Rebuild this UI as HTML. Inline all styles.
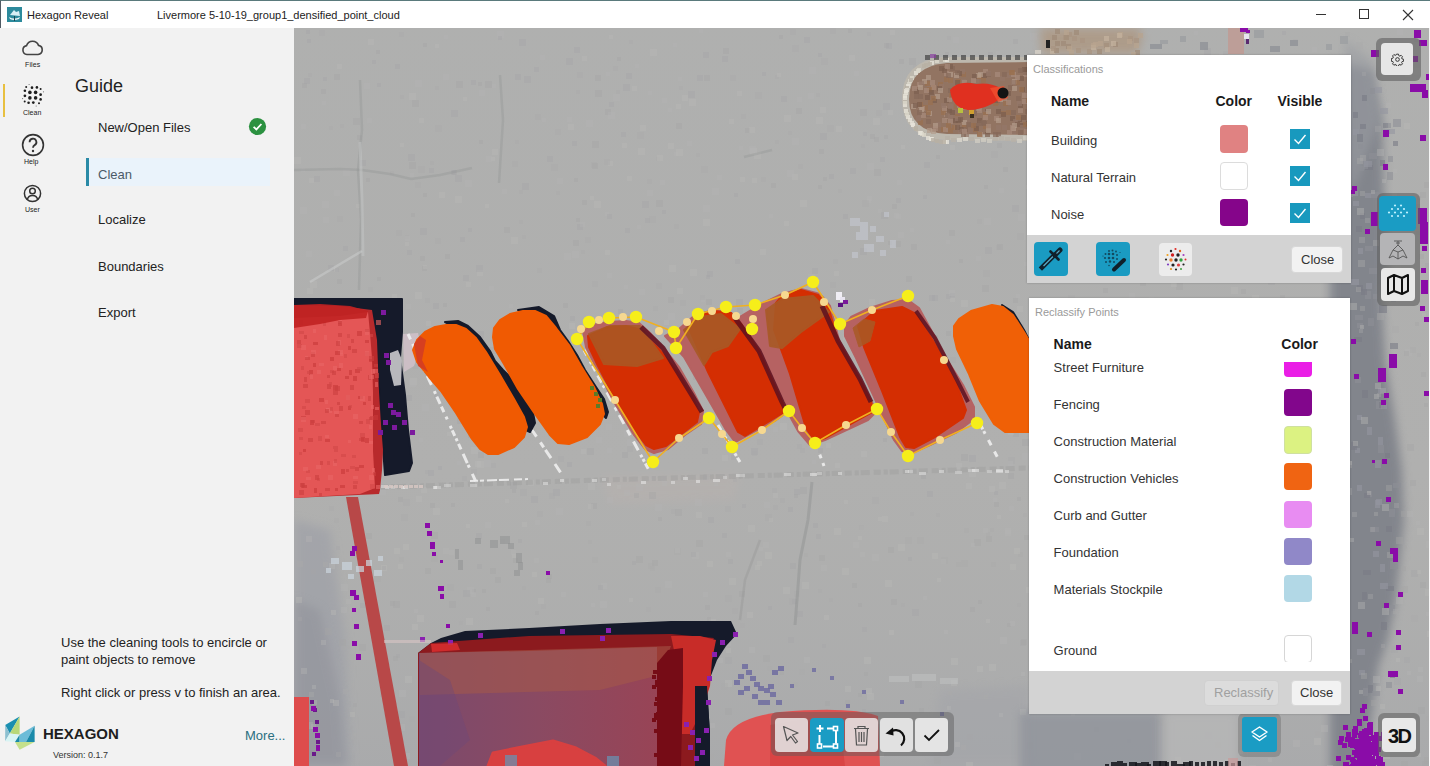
<!DOCTYPE html>
<html><head><meta charset="utf-8">
<style>
*{box-sizing:border-box;margin:0;padding:0}
html,body{width:1430px;height:766px;overflow:hidden;background:#f2f2f2;font-family:"Liberation Sans",sans-serif;color:#222}
.abs{position:absolute}
#title{left:0;top:0;width:1430px;height:28px;background:#fff;border-top:1px solid #5a7a7c;border-left:1px solid #4f5a64}
#side{left:0;top:28px;width:294px;height:738px;background:#f2f2f2}
#map{left:294px;top:28px;width:1135px;height:738px;overflow:hidden;background:#a8aaa9}
#rstrip{left:1429px;top:28px;width:1px;height:738px;background:#f4f4f4}
.t{position:absolute;white-space:nowrap;line-height:1}
.panel{position:absolute;background:#fff;box-shadow:0 0 2px rgba(0,0,0,.25)}
.btn{position:absolute;border-radius:4px}
</style></head><body>
<div id="title" class="abs">
  <svg class="abs" style="left:6px;top:6px" width="15" height="15" viewBox="0 0 15 15">
    <rect x="0" y="0" width="15" height="15" fill="#2c8a9c"/>
    <path d="M3 8 L7 3 L9 5 L12 4 L13 9 Z" fill="#d8eef4"/>
    <path d="M2 10 Q7 13 13 10 L12 12 Q7 14 3 12 Z" fill="#f2f8fa"/>
    <rect x="7" y="9" width="1" height="5" fill="#1d4650"/>
  </svg>
  <div class="t" style="left:26px;top:9px;font-size:11px;color:#222">Hexagon Reveal</div>
  <div class="t" style="left:156px;top:9px;font-size:11px;color:#222">Livermore 5-10-19_group1_densified_point_cloud</div>
  <div class="abs" style="left:1315px;top:13px;width:10px;height:1px;background:#333"></div>
  <div class="abs" style="left:1358px;top:8px;width:10px;height:10px;border:1px solid #333"></div>
  <svg class="abs" style="left:1401px;top:8px" width="12" height="12" viewBox="0 0 12 12"><path d="M1 1L11 11M11 1L1 11" stroke="#333" stroke-width="1.1"/></svg>
</div>

<div id="side" class="abs">
  <!-- rail icons (coords relative to side: y-28) -->
  <svg class="abs" style="left:21px;top:11px" width="23" height="17" viewBox="0 0 23 17">
    <path d="M6 15.5 H17 A4.6 4.6 0 0 0 17.5 6.4 A6.3 6.3 0 0 0 5.6 6.6 A4.5 4.5 0 0 0 6 15.5 Z" fill="none" stroke="#444" stroke-width="1.6"/>
  </svg>
  <div class="t" style="left:25px;top:33px;font-size:7px;color:#222;letter-spacing:0.1px">Files</div>
  <div class="abs" style="left:3px;top:56px;width:2px;height:33px;background:#e8c040"></div>
  <svg class="abs" style="left:22px;top:55px" width="24" height="25" viewBox="0 0 24 25">
    <g fill="#1e1e1e">
      <circle cx="7.9" cy="9.4" r="1.8"/><circle cx="13.6" cy="9.4" r="1.8"/><circle cx="7.9" cy="14.9" r="1.8"/><circle cx="13.6" cy="14.9" r="1.8"/>
      <circle cx="10" cy="4.7" r="1.35"/><circle cx="14.9" cy="4.4" r="1.3"/><circle cx="2.9" cy="7.8" r="1.3"/><circle cx="2.9" cy="12.8" r="1.35"/>
      <circle cx="18.6" cy="11.7" r="1.35"/><circle cx="18.6" cy="16.4" r="1.3"/><circle cx="6.6" cy="19.8" r="1.3"/><circle cx="11.3" cy="19.6" r="1.35"/>
      <circle cx="4.2" cy="4.1" r="1"/><circle cx="18.6" cy="6" r="1"/><circle cx="2.7" cy="18.5" r="1"/><circle cx="17" cy="20.3" r="1"/>
      <circle cx="7.1" cy="1.5" r="0.6" opacity=".6"/><circle cx="21.5" cy="8.8" r="0.6" opacity=".6"/><circle cx="0.6" cy="15.6" r="0.6" opacity=".6"/><circle cx="14.2" cy="23" r="0.6" opacity=".6"/>
    </g>
  </svg>
  <div class="t" style="left:23px;top:81px;font-size:7px;color:#222">Clean</div>
  <svg class="abs" style="left:20px;top:104px" width="26" height="26" viewBox="0 0 26 26">
    <circle cx="13" cy="13" r="10.4" fill="none" stroke="#333" stroke-width="1.6"/>
    <path d="M9.6 10.2 A3.4 3.4 0 1 1 14.6 13.1 Q13 14 13 15.8" fill="none" stroke="#333" stroke-width="1.8"/>
    <circle cx="13" cy="19" r="1.2" fill="#333"/>
  </svg>
  <div class="t" style="left:24px;top:130px;font-size:7px;color:#222">Help</div>
  <svg class="abs" style="left:22px;top:155px" width="21" height="21" viewBox="0 0 21 21">
    <circle cx="10.5" cy="10.5" r="8.1" fill="none" stroke="#333" stroke-width="1.5"/>
    <circle cx="10.5" cy="8" r="2.8" fill="none" stroke="#333" stroke-width="1.5"/>
    <path d="M5.2 17 Q6 12.5 10.5 12.5 Q15 12.5 15.8 17" fill="none" stroke="#333" stroke-width="1.5"/>
  </svg>
  <div class="t" style="left:25px;top:178px;font-size:7px;color:#222">User</div>

  <div class="t" style="left:75px;top:49px;font-size:18px;color:#222">Guide</div>
  <div class="t" style="left:98px;top:93px;font-size:13px;color:#222">New/Open Files</div>
  <svg class="abs" style="left:248px;top:89px" width="19" height="19" viewBox="0 0 19 19">
    <circle cx="9.5" cy="9.5" r="8.6" fill="#2b9140"/>
    <path d="M5.6 9.8 L8.4 12.4 L13.4 7" fill="none" stroke="#fff" stroke-width="1.8"/>
  </svg>
  <div class="abs" style="left:89px;top:130px;width:181px;height:28px;background:#eaf3fb"></div>
  <div class="abs" style="left:86px;top:130px;width:3px;height:28px;background:#2a8aa6"></div>
  <div class="t" style="left:98px;top:139.5px;font-size:13px;color:#4a5a68">Clean</div>
  <div class="t" style="left:98px;top:185.4px;font-size:13px;color:#222">Localize</div>
  <div class="t" style="left:98px;top:231.6px;font-size:13px;color:#222">Boundaries</div>
  <div class="t" style="left:98px;top:277.7px;font-size:13px;color:#222">Export</div>

  <div class="t" style="left:61px;top:606px;font-size:13px;line-height:17px;color:#222">Use the cleaning tools to encircle or<br>paint objects to remove</div>
  <div class="t" style="left:61px;top:658px;font-size:13px;color:#222">Right click or press v to finish an area.</div>

  <svg class="abs" style="left:5px;top:688px" width="31" height="35" viewBox="0 0 31 35">
    <path d="M0.2 9 L14.6 0.5 L4.8 17.5 Z" fill="#1a8fb0"/>
    <path d="M0.2 9 L4.8 17.5 L0.2 25.3 Z" fill="#8cc0d0"/>
    <path d="M14.6 0.5 L14.6 18.8 L4.8 17.5 Z" fill="#b8d878"/>
    <path d="M0.2 25.3 L4.8 17.5 L14.6 18.8 L10 26 Z" fill="#d8f4f4"/>
    <path d="M10 26 L14.6 18.8 L14.6 26 Z" fill="#1a8aa8"/>
    <path d="M14.6 18.8 L29.6 9.7 L21 26 L14.6 26 Z" fill="#6cbcd8"/>
    <path d="M29.6 9.7 L29.6 26 L21 26 Z" fill="#1a8aaa"/>
    <path d="M10 26 L29.6 26 L14.6 33.8 Z" fill="#c4e08c"/>
  </svg>
  <div class="t" style="left:43px;top:698px;font-size:15px;font-weight:bold;color:#1e1e1e">HEXAGON</div>
  <div class="t" style="left:245px;top:700.5px;font-size:13px;color:#2a6f80">More...</div>
  <div class="t" style="left:53px;top:723px;font-size:9px;color:#333">Version: 0.1.7</div>
</div>

<div id="map" class="abs">
<svg width="1135" height="738" viewBox="294 28 1135 738">
<!--MAP-->
<defs><linearGradient id="bgv" x1="0" y1="0" x2="0" y2="1">
<stop offset="0" stop-color="#aeb0af" stop-opacity=".3"/><stop offset=".6" stop-color="#a7a9a8" stop-opacity="0"/><stop offset="1" stop-color="#9fa1a6" stop-opacity=".4"/></linearGradient>
<filter id="soft" x="-20%" y="-20%" width="140%" height="140%"><feGaussianBlur stdDeviation="5"/></filter>
<linearGradient id="bldg" x1="0" y1="0" x2="1" y2="0"><stop offset="0" stop-color="#7c4a6c"/><stop offset=".5" stop-color="#8a4a62"/><stop offset="1" stop-color="#984456"/></linearGradient></defs>
<rect x="294" y="28" width="1135" height="738" fill="#b0b0af" />
<rect x="294" y="28" width="1135" height="738" fill="url(#bgv)" />
<polygon points="1330.0,60.0 1372.0,70.0 1382.0,120.0 1384.0,200.0 1386.0,260.0 1382.0,300.0 1385.0,360.0 1395.0,420.0 1402.0,470.0 1404.0,520.0 1400.0,560.0 1396.0,600.0 1388.0,639.0 1378.0,667.0 1373.0,706.0 1362.0,780.0 1330.0,780.0" fill="#7e8189" opacity=".9" filter="url(#soft)"/>
<polygon points="1345.0,40.0 1372.0,60.0 1380.0,120.0 1350.0,200.0" fill="#9a9ca2" opacity=".6" filter="url(#soft)"/>
<rect x="1365" y="165" width="8" height="5" fill="#7a7c86" opacity=".6"/>
<rect x="1387" y="129" width="8" height="5" fill="#9496a0" opacity=".6"/>
<rect x="1360" y="124" width="6" height="5" fill="#7a7c86" opacity=".6"/>
<rect x="1354" y="337" width="8" height="5" fill="#7a7c86" opacity=".6"/>
<rect x="1378" y="437" width="5" height="8" fill="#9496a0" opacity=".6"/>
<rect x="1368" y="685" width="5" height="8" fill="#7a7c86" opacity=".6"/>
<rect x="1363" y="161" width="5" height="8" fill="#8e9096" opacity=".6"/>
<rect x="1375" y="500" width="5" height="8" fill="#9496a0" opacity=".6"/>
<rect x="1379" y="305" width="8" height="8" fill="#7a7c86" opacity=".6"/>
<rect x="1375" y="460" width="6" height="8" fill="#9496a0" opacity=".6"/>
<rect x="1369" y="268" width="8" height="6" fill="#8e9096" opacity=".6"/>
<rect x="1363" y="570" width="8" height="5" fill="#7a7c86" opacity=".6"/>
<rect x="1376" y="401" width="6" height="8" fill="#8e9096" opacity=".6"/>
<rect x="1363" y="688" width="5" height="8" fill="#8e9096" opacity=".6"/>
<rect x="1357" y="285" width="6" height="6" fill="#7a7c86" opacity=".6"/>
<rect x="1393" y="119" width="8" height="8" fill="#8e9096" opacity=".6"/>
<rect x="1365" y="291" width="6" height="8" fill="#8e9096" opacity=".6"/>
<rect x="1353" y="129" width="6" height="6" fill="#9496a0" opacity=".6"/>
<rect x="1380" y="108" width="8" height="6" fill="#9496a0" opacity=".6"/>
<rect x="1376" y="499" width="6" height="6" fill="#9496a0" opacity=".6"/>
<rect x="1367" y="491" width="5" height="6" fill="#8e9096" opacity=".6"/>
<rect x="1358" y="144" width="5" height="5" fill="#8e9096" opacity=".6"/>
<rect x="1356" y="226" width="6" height="6" fill="#7a7c86" opacity=".6"/>
<rect x="1357" y="323" width="6" height="5" fill="#8e9096" opacity=".6"/>
<rect x="1389" y="245" width="6" height="6" fill="#9496a0" opacity=".6"/>
<rect x="1390" y="673" width="5" height="5" fill="#7a7c86" opacity=".6"/>
<rect x="1357" y="485" width="5" height="6" fill="#9496a0" opacity=".6"/>
<rect x="1358" y="248" width="5" height="6" fill="#9496a0" opacity=".6"/>
<rect x="1367" y="427" width="5" height="8" fill="#9496a0" opacity=".6"/>
<rect x="1393" y="483" width="8" height="5" fill="#8e9096" opacity=".6"/>
<rect x="1390" y="561" width="8" height="8" fill="#8e9096" opacity=".6"/>
<rect x="1368" y="318" width="6" height="8" fill="#8e9096" opacity=".6"/>
<rect x="1353" y="112" width="5" height="6" fill="#7a7c86" opacity=".6"/>
<rect x="1355" y="448" width="5" height="5" fill="#9496a0" opacity=".6"/>
<rect x="1357" y="134" width="6" height="8" fill="#7a7c86" opacity=".6"/>
<rect x="1353" y="201" width="6" height="5" fill="#9496a0" opacity=".6"/>
<rect x="1361" y="289" width="6" height="6" fill="#7a7c86" opacity=".6"/>
<rect x="1355" y="377" width="6" height="6" fill="#8e9096" opacity=".6"/>
<rect x="1364" y="161" width="8" height="6" fill="#9496a0" opacity=".6"/>
<rect x="1362" y="592" width="5" height="8" fill="#7a7c86" opacity=".6"/>
<rect x="1359" y="670" width="6" height="5" fill="#9496a0" opacity=".6"/>
<rect x="1374" y="87" width="8" height="6" fill="#9496a0" opacity=".6"/>
<rect x="1389" y="509" width="6" height="8" fill="#8e9096" opacity=".6"/>
<rect x="1391" y="294" width="5" height="8" fill="#9496a0" opacity=".6"/>
<rect x="1385" y="278" width="5" height="8" fill="#7a7c86" opacity=".6"/>
<rect x="1386" y="586" width="8" height="5" fill="#7a7c86" opacity=".6"/>
<rect x="1373" y="294" width="5" height="5" fill="#8e9096" opacity=".6"/>
<rect x="1371" y="192" width="8" height="6" fill="#8e9096" opacity=".6"/>
<rect x="1386" y="526" width="6" height="6" fill="#7a7c86" opacity=".6"/>
<rect x="1360" y="213" width="5" height="6" fill="#7a7c86" opacity=".6"/>
<rect x="1372" y="691" width="8" height="5" fill="#8e9096" opacity=".6"/>
<rect x="1391" y="287" width="8" height="5" fill="#9496a0" opacity=".6"/>
<rect x="1355" y="315" width="8" height="5" fill="#8e9096" opacity=".6"/>
<rect x="1390" y="343" width="8" height="6" fill="#7a7c86" opacity=".6"/>
<rect x="1386" y="682" width="6" height="6" fill="#8e9096" opacity=".6"/>
<rect x="1383" y="123" width="5" height="5" fill="#7a7c86" opacity=".6"/>
<rect x="1351" y="442" width="6" height="8" fill="#7a7c86" opacity=".6"/>
<rect x="1378" y="445" width="6" height="8" fill="#8e9096" opacity=".6"/>
<rect x="1357" y="415" width="5" height="5" fill="#9496a0" opacity=".6"/>
<rect x="1379" y="402" width="5" height="6" fill="#7a7c86" opacity=".6"/>
<rect x="1387" y="203" width="6" height="5" fill="#8e9096" opacity=".6"/>
<rect x="1373" y="551" width="6" height="6" fill="#9496a0" opacity=".6"/>
<rect x="1369" y="153" width="8" height="6" fill="#8e9096" opacity=".6"/>
<rect x="1380" y="583" width="8" height="6" fill="#9496a0" opacity=".6"/>
<rect x="1356" y="166" width="8" height="5" fill="#8e9096" opacity=".6"/>
<rect x="1385" y="453" width="5" height="5" fill="#7a7c86" opacity=".6"/>
<rect x="1371" y="527" width="8" height="5" fill="#8e9096" opacity=".6"/>
<rect x="1381" y="404" width="6" height="5" fill="#9496a0" opacity=".6"/>
<rect x="1353" y="191" width="5" height="5" fill="#9496a0" opacity=".6"/>
<rect x="1370" y="88" width="5" height="6" fill="#8e9096" opacity=".6"/>
<rect x="1378" y="388" width="8" height="5" fill="#9496a0" opacity=".6"/>
<rect x="1362" y="390" width="6" height="8" fill="#7a7c86" opacity=".6"/>
<rect x="1381" y="622" width="6" height="8" fill="#7a7c86" opacity=".6"/>
<rect x="1388" y="156" width="5" height="6" fill="#8e9096" opacity=".6"/>
<rect x="1364" y="493" width="6" height="5" fill="#7a7c86" opacity=".6"/>
<rect x="1380" y="564" width="5" height="8" fill="#9496a0" opacity=".6"/>
<rect x="1380" y="160" width="5" height="6" fill="#7a7c86" opacity=".6"/>
<rect x="1384" y="129" width="6" height="5" fill="#9496a0" opacity=".6"/>
<rect x="1387" y="172" width="6" height="8" fill="#8e9096" opacity=".6"/>
<rect x="1365" y="193" width="6" height="5" fill="#9496a0" opacity=".6"/>
<rect x="1366" y="283" width="6" height="6" fill="#9496a0" opacity=".6"/>
<rect x="1351" y="279" width="8" height="6" fill="#9496a0" opacity=".6"/>
<rect x="1393" y="141" width="5" height="5" fill="#7a7c86" opacity=".6"/>
<rect x="1362" y="95" width="5" height="6" fill="#7a7c86" opacity=".6"/>
<rect x="1387" y="605" width="8" height="6" fill="#8e9096" opacity=".6"/>
<rect x="1357" y="649" width="8" height="6" fill="#9496a0" opacity=".6"/>
<rect x="1365" y="246" width="8" height="5" fill="#8e9096" opacity=".6"/>
<rect x="1390" y="239" width="5" height="8" fill="#7a7c86" opacity=".6"/>
<rect x="1386" y="123" width="5" height="5" fill="#8e9096" opacity=".6"/>
<rect x="1389" y="356" width="6" height="8" fill="#8e9096" opacity=".6"/>
<polygon points="940.0,690.0 1030.0,685.0 1030.0,766.0 930.0,766.0" fill="#a0a2a8" opacity="0.4" filter="url(#soft)"/>
<polygon points="294.0,520.0 330.0,530.0 345.0,640.0 350.0,766.0 294.0,766.0" fill="#9a9ca6" opacity="0.55" filter="url(#soft)"/>
<polygon points="294.0,600.0 320.0,610.0 340.0,700.0 345.0,766.0 294.0,766.0" fill="#8e9098" opacity="0.5" filter="url(#soft)"/>
<polygon points="600.0,476.0 740.0,474.0 735.0,500.0 610.0,504.0" fill="#bcb2ae" opacity=".35" filter="url(#soft)"/>
<rect x="1346" y="226" width="4" height="4" fill="#b8b8b6" opacity="0.4"/>
<rect x="892" y="204" width="5" height="5" fill="#a6a6a6" opacity="0.4"/>
<rect x="591" y="162" width="6" height="6" fill="#aaaaa9" opacity="0.4"/>
<rect x="897" y="180" width="5" height="5" fill="#b4b4b3" opacity="0.4"/>
<rect x="601" y="621" width="4" height="4" fill="#aaaaa9" opacity="0.4"/>
<rect x="311" y="569" width="5" height="5" fill="#a4a5a7" opacity="0.4"/>
<rect x="878" y="209" width="4" height="4" fill="#b4b4b3" opacity="0.4"/>
<rect x="1041" y="508" width="7" height="7" fill="#b4b4b3" opacity="0.4"/>
<rect x="1395" y="255" width="5" height="5" fill="#b8b8b6" opacity="0.4"/>
<rect x="683" y="642" width="7" height="7" fill="#b8b8b6" opacity="0.4"/>
<rect x="1417" y="753" width="4" height="4" fill="#b8b8b6" opacity="0.4"/>
<rect x="374" y="575" width="7" height="7" fill="#aaaaa9" opacity="0.4"/>
<rect x="479" y="90" width="6" height="6" fill="#b4b4b3" opacity="0.4"/>
<rect x="974" y="539" width="7" height="7" fill="#a6a6a6" opacity="0.4"/>
<rect x="504" y="227" width="6" height="6" fill="#a6a6a6" opacity="0.4"/>
<rect x="707" y="271" width="6" height="6" fill="#a4a5a7" opacity="0.4"/>
<rect x="571" y="741" width="5" height="5" fill="#aaaaa9" opacity="0.4"/>
<rect x="699" y="29" width="4" height="4" fill="#b4b4b3" opacity="0.4"/>
<rect x="833" y="399" width="5" height="5" fill="#b8b8b6" opacity="0.4"/>
<rect x="867" y="32" width="4" height="4" fill="#aaaaa9" opacity="0.4"/>
<rect x="457" y="461" width="4" height="4" fill="#b4b4b3" opacity="0.4"/>
<rect x="634" y="493" width="5" height="5" fill="#a6a6a6" opacity="0.4"/>
<rect x="1040" y="556" width="7" height="7" fill="#a4a5a7" opacity="0.4"/>
<rect x="1161" y="560" width="5" height="5" fill="#b4b4b3" opacity="0.4"/>
<rect x="617" y="485" width="4" height="4" fill="#b8b8b6" opacity="0.4"/>
<rect x="1230" y="556" width="7" height="7" fill="#a4a5a7" opacity="0.4"/>
<rect x="1127" y="627" width="4" height="4" fill="#b8b8b6" opacity="0.4"/>
<rect x="1232" y="459" width="4" height="4" fill="#b8b8b6" opacity="0.4"/>
<rect x="329" y="126" width="4" height="4" fill="#aaaaa9" opacity="0.4"/>
<rect x="721" y="361" width="4" height="4" fill="#a6a6a6" opacity="0.4"/>
<rect x="1005" y="530" width="6" height="6" fill="#b4b4b3" opacity="0.4"/>
<rect x="298" y="617" width="4" height="4" fill="#a4a5a7" opacity="0.4"/>
<rect x="1042" y="77" width="6" height="6" fill="#b4b4b3" opacity="0.4"/>
<rect x="1212" y="652" width="5" height="5" fill="#b8b8b6" opacity="0.4"/>
<rect x="556" y="508" width="7" height="7" fill="#b4b4b3" opacity="0.4"/>
<rect x="1254" y="85" width="4" height="4" fill="#aaaaa9" opacity="0.4"/>
<rect x="994" y="502" width="5" height="5" fill="#a6a6a6" opacity="0.4"/>
<rect x="671" y="509" width="5" height="5" fill="#aaaaa9" opacity="0.4"/>
<rect x="308" y="73" width="4" height="4" fill="#aaaaa9" opacity="0.4"/>
<rect x="1080" y="527" width="6" height="6" fill="#aaaaa9" opacity="0.4"/>
<rect x="821" y="372" width="5" height="5" fill="#a6a6a6" opacity="0.4"/>
<rect x="648" y="91" width="4" height="4" fill="#b4b4b3" opacity="0.4"/>
<rect x="623" y="84" width="7" height="7" fill="#a4a5a7" opacity="0.4"/>
<rect x="1422" y="313" width="4" height="4" fill="#b8b8b6" opacity="0.4"/>
<rect x="954" y="133" width="6" height="6" fill="#a4a5a7" opacity="0.4"/>
<rect x="1375" y="126" width="6" height="6" fill="#a4a5a7" opacity="0.4"/>
<rect x="1301" y="547" width="7" height="7" fill="#b8b8b6" opacity="0.4"/>
<rect x="1313" y="387" width="5" height="5" fill="#a6a6a6" opacity="0.4"/>
<rect x="298" y="391" width="7" height="7" fill="#b4b4b3" opacity="0.4"/>
<rect x="637" y="132" width="7" height="7" fill="#aaaaa9" opacity="0.4"/>
<rect x="653" y="648" width="6" height="6" fill="#a6a6a6" opacity="0.4"/>
<rect x="1146" y="647" width="5" height="5" fill="#a6a6a6" opacity="0.4"/>
<rect x="1103" y="693" width="6" height="6" fill="#aaaaa9" opacity="0.4"/>
<rect x="716" y="318" width="4" height="4" fill="#a4a5a7" opacity="0.4"/>
<rect x="703" y="344" width="4" height="4" fill="#aaaaa9" opacity="0.4"/>
<rect x="613" y="66" width="5" height="5" fill="#aaaaa9" opacity="0.4"/>
<rect x="577" y="224" width="6" height="6" fill="#a4a5a7" opacity="0.4"/>
<rect x="509" y="304" width="4" height="4" fill="#b4b4b3" opacity="0.4"/>
<rect x="1216" y="494" width="5" height="5" fill="#a4a5a7" opacity="0.4"/>
<rect x="1111" y="65" width="7" height="7" fill="#b4b4b3" opacity="0.4"/>
<rect x="992" y="130" width="7" height="7" fill="#aaaaa9" opacity="0.4"/>
<rect x="350" y="712" width="5" height="5" fill="#b8b8b6" opacity="0.4"/>
<rect x="830" y="282" width="6" height="6" fill="#aaaaa9" opacity="0.4"/>
<rect x="1133" y="749" width="7" height="7" fill="#aaaaa9" opacity="0.4"/>
<rect x="1039" y="250" width="7" height="7" fill="#a4a5a7" opacity="0.4"/>
<rect x="430" y="503" width="5" height="5" fill="#a6a6a6" opacity="0.4"/>
<rect x="862" y="627" width="5" height="5" fill="#a4a5a7" opacity="0.4"/>
<rect x="808" y="274" width="7" height="7" fill="#b4b4b3" opacity="0.4"/>
<rect x="452" y="170" width="5" height="5" fill="#a6a6a6" opacity="0.4"/>
<rect x="682" y="95" width="6" height="6" fill="#b8b8b6" opacity="0.4"/>
<rect x="587" y="448" width="7" height="7" fill="#a6a6a6" opacity="0.4"/>
<rect x="729" y="578" width="7" height="7" fill="#b8b8b6" opacity="0.4"/>
<rect x="601" y="583" width="6" height="6" fill="#b4b4b3" opacity="0.4"/>
<rect x="946" y="294" width="5" height="5" fill="#a4a5a7" opacity="0.4"/>
<rect x="399" y="690" width="7" height="7" fill="#b4b4b3" opacity="0.4"/>
<rect x="1027" y="347" width="4" height="4" fill="#aaaaa9" opacity="0.4"/>
<rect x="438" y="342" width="7" height="7" fill="#b4b4b3" opacity="0.4"/>
<rect x="294" y="317" width="7" height="7" fill="#a4a5a7" opacity="0.4"/>
<rect x="1397" y="211" width="5" height="5" fill="#a6a6a6" opacity="0.4"/>
<rect x="469" y="414" width="7" height="7" fill="#a6a6a6" opacity="0.4"/>
<rect x="390" y="601" width="5" height="5" fill="#a6a6a6" opacity="0.4"/>
<rect x="558" y="707" width="5" height="5" fill="#aaaaa9" opacity="0.4"/>
<rect x="1005" y="418" width="4" height="4" fill="#b4b4b3" opacity="0.4"/>
<rect x="407" y="250" width="5" height="5" fill="#a4a5a7" opacity="0.4"/>
<rect x="734" y="193" width="4" height="4" fill="#a4a5a7" opacity="0.4"/>
<rect x="306" y="251" width="6" height="6" fill="#b4b4b3" opacity="0.4"/>
<rect x="1382" y="504" width="7" height="7" fill="#b8b8b6" opacity="0.4"/>
<rect x="891" y="432" width="7" height="7" fill="#a6a6a6" opacity="0.4"/>
<rect x="1094" y="255" width="5" height="5" fill="#a6a6a6" opacity="0.4"/>
<rect x="860" y="526" width="4" height="4" fill="#b4b4b3" opacity="0.4"/>
<rect x="586" y="521" width="5" height="5" fill="#aaaaa9" opacity="0.4"/>
<rect x="853" y="542" width="6" height="6" fill="#b4b4b3" opacity="0.4"/>
<rect x="1069" y="174" width="4" height="4" fill="#aaaaa9" opacity="0.4"/>
<rect x="527" y="744" width="5" height="5" fill="#aaaaa9" opacity="0.4"/>
<rect x="556" y="191" width="4" height="4" fill="#aaaaa9" opacity="0.4"/>
<rect x="1374" y="394" width="5" height="5" fill="#b8b8b6" opacity="0.4"/>
<rect x="845" y="700" width="5" height="5" fill="#a6a6a6" opacity="0.4"/>
<rect x="1340" y="68" width="5" height="5" fill="#a6a6a6" opacity="0.4"/>
<rect x="765" y="552" width="7" height="7" fill="#b8b8b6" opacity="0.4"/>
<rect x="804" y="553" width="4" height="4" fill="#aaaaa9" opacity="0.4"/>
<rect x="1426" y="716" width="5" height="5" fill="#aaaaa9" opacity="0.4"/>
<rect x="505" y="719" width="4" height="4" fill="#b4b4b3" opacity="0.4"/>
<rect x="648" y="563" width="6" height="6" fill="#aaaaa9" opacity="0.4"/>
<rect x="796" y="108" width="6" height="6" fill="#a6a6a6" opacity="0.4"/>
<rect x="386" y="338" width="5" height="5" fill="#a6a6a6" opacity="0.4"/>
<rect x="725" y="595" width="7" height="7" fill="#aaaaa9" opacity="0.4"/>
<rect x="394" y="548" width="6" height="6" fill="#b8b8b6" opacity="0.4"/>
<rect x="909" y="357" width="6" height="6" fill="#aaaaa9" opacity="0.4"/>
<rect x="1131" y="378" width="5" height="5" fill="#b4b4b3" opacity="0.4"/>
<rect x="1215" y="594" width="7" height="7" fill="#a6a6a6" opacity="0.4"/>
<rect x="334" y="74" width="6" height="6" fill="#a6a6a6" opacity="0.4"/>
<rect x="515" y="74" width="6" height="6" fill="#a4a5a7" opacity="0.4"/>
<rect x="706" y="275" width="4" height="4" fill="#a4a5a7" opacity="0.4"/>
<rect x="592" y="557" width="6" height="6" fill="#aaaaa9" opacity="0.4"/>
<rect x="632" y="561" width="4" height="4" fill="#a4a5a7" opacity="0.4"/>
<rect x="322" y="201" width="7" height="7" fill="#b4b4b3" opacity="0.4"/>
<rect x="1377" y="313" width="7" height="7" fill="#aaaaa9" opacity="0.4"/>
<rect x="1219" y="126" width="5" height="5" fill="#b4b4b3" opacity="0.4"/>
<rect x="304" y="715" width="5" height="5" fill="#aaaaa9" opacity="0.4"/>
<rect x="983" y="270" width="7" height="7" fill="#aaaaa9" opacity="0.4"/>
<rect x="705" y="605" width="5" height="5" fill="#a6a6a6" opacity="0.4"/>
<rect x="739" y="146" width="4" height="4" fill="#b4b4b3" opacity="0.4"/>
<rect x="1031" y="383" width="6" height="6" fill="#a4a5a7" opacity="0.4"/>
<rect x="476" y="343" width="4" height="4" fill="#a6a6a6" opacity="0.4"/>
<rect x="595" y="90" width="7" height="7" fill="#a6a6a6" opacity="0.4"/>
<rect x="860" y="552" width="5" height="5" fill="#b4b4b3" opacity="0.4"/>
<rect x="560" y="336" width="5" height="5" fill="#a4a5a7" opacity="0.4"/>
<rect x="1143" y="653" width="6" height="6" fill="#a6a6a6" opacity="0.4"/>
<rect x="627" y="446" width="6" height="6" fill="#aaaaa9" opacity="0.4"/>
<rect x="1132" y="175" width="5" height="5" fill="#b8b8b6" opacity="0.4"/>
<rect x="572" y="141" width="5" height="5" fill="#a4a5a7" opacity="0.4"/>
<rect x="664" y="320" width="5" height="5" fill="#b8b8b6" opacity="0.4"/>
<rect x="1031" y="102" width="4" height="4" fill="#b4b4b3" opacity="0.4"/>
<rect x="410" y="378" width="7" height="7" fill="#b8b8b6" opacity="0.4"/>
<rect x="1332" y="58" width="5" height="5" fill="#aaaaa9" opacity="0.4"/>
<rect x="429" y="168" width="5" height="5" fill="#a4a5a7" opacity="0.4"/>
<rect x="1350" y="303" width="7" height="7" fill="#b8b8b6" opacity="0.4"/>
<rect x="978" y="600" width="4" height="4" fill="#a6a6a6" opacity="0.4"/>
<rect x="1018" y="552" width="5" height="5" fill="#aaaaa9" opacity="0.4"/>
<rect x="337" y="279" width="5" height="5" fill="#a6a6a6" opacity="0.4"/>
<rect x="1429" y="56" width="4" height="4" fill="#b8b8b6" opacity="0.4"/>
<rect x="1223" y="330" width="5" height="5" fill="#aaaaa9" opacity="0.4"/>
<rect x="999" y="86" width="7" height="7" fill="#a6a6a6" opacity="0.4"/>
<rect x="916" y="75" width="7" height="7" fill="#a6a6a6" opacity="0.4"/>
<rect x="1048" y="142" width="4" height="4" fill="#a4a5a7" opacity="0.4"/>
<rect x="1035" y="322" width="7" height="7" fill="#aaaaa9" opacity="0.4"/>
<rect x="1416" y="521" width="4" height="4" fill="#b4b4b3" opacity="0.4"/>
<rect x="649" y="446" width="7" height="7" fill="#aaaaa9" opacity="0.4"/>
<rect x="767" y="666" width="5" height="5" fill="#aaaaa9" opacity="0.4"/>
<rect x="737" y="327" width="7" height="7" fill="#a6a6a6" opacity="0.4"/>
<rect x="1317" y="341" width="7" height="7" fill="#a6a6a6" opacity="0.4"/>
<rect x="950" y="297" width="5" height="5" fill="#b8b8b6" opacity="0.4"/>
<rect x="311" y="435" width="4" height="4" fill="#b4b4b3" opacity="0.4"/>
<rect x="944" y="712" width="5" height="5" fill="#a4a5a7" opacity="0.4"/>
<rect x="460" y="237" width="5" height="5" fill="#a4a5a7" opacity="0.4"/>
<rect x="1344" y="108" width="5" height="5" fill="#b4b4b3" opacity="0.4"/>
<rect x="636" y="646" width="7" height="7" fill="#a6a6a6" opacity="0.4"/>
<rect x="651" y="476" width="4" height="4" fill="#b4b4b3" opacity="0.4"/>
<rect x="1320" y="486" width="5" height="5" fill="#b8b8b6" opacity="0.4"/>
<rect x="999" y="482" width="7" height="7" fill="#b8b8b6" opacity="0.4"/>
<rect x="502" y="189" width="5" height="5" fill="#b4b4b3" opacity="0.4"/>
<rect x="729" y="119" width="5" height="5" fill="#b8b8b6" opacity="0.4"/>
<rect x="341" y="443" width="6" height="6" fill="#a6a6a6" opacity="0.4"/>
<rect x="428" y="470" width="6" height="6" fill="#a4a5a7" opacity="0.4"/>
<rect x="1031" y="255" width="7" height="7" fill="#b8b8b6" opacity="0.4"/>
<rect x="736" y="299" width="7" height="7" fill="#a4a5a7" opacity="0.4"/>
<rect x="497" y="31" width="7" height="7" fill="#b4b4b3" opacity="0.4"/>
<rect x="561" y="592" width="5" height="5" fill="#b4b4b3" opacity="0.4"/>
<rect x="1214" y="323" width="5" height="5" fill="#a6a6a6" opacity="0.4"/>
<rect x="701" y="298" width="4" height="4" fill="#b4b4b3" opacity="0.4"/>
<rect x="340" y="124" width="4" height="4" fill="#aaaaa9" opacity="0.4"/>
<rect x="356" y="400" width="5" height="5" fill="#b4b4b3" opacity="0.4"/>
<rect x="323" y="77" width="4" height="4" fill="#a4a5a7" opacity="0.4"/>
<rect x="514" y="753" width="6" height="6" fill="#b4b4b3" opacity="0.4"/>
<rect x="1380" y="704" width="5" height="5" fill="#b8b8b6" opacity="0.4"/>
<rect x="368" y="287" width="5" height="5" fill="#aaaaa9" opacity="0.4"/>
<rect x="662" y="481" width="5" height="5" fill="#b4b4b3" opacity="0.4"/>
<rect x="582" y="740" width="5" height="5" fill="#b4b4b3" opacity="0.4"/>
<rect x="966" y="483" width="6" height="6" fill="#b8b8b6" opacity="0.4"/>
<rect x="717" y="175" width="5" height="5" fill="#b4b4b3" opacity="0.4"/>
<rect x="1017" y="233" width="7" height="7" fill="#aaaaa9" opacity="0.4"/>
<rect x="486" y="607" width="4" height="4" fill="#a6a6a6" opacity="0.4"/>
<rect x="1016" y="294" width="4" height="4" fill="#b4b4b3" opacity="0.4"/>
<rect x="580" y="423" width="6" height="6" fill="#b4b4b3" opacity="0.4"/>
<rect x="594" y="759" width="5" height="5" fill="#a4a5a7" opacity="0.4"/>
<rect x="703" y="592" width="5" height="5" fill="#b4b4b3" opacity="0.4"/>
<rect x="495" y="577" width="6" height="6" fill="#a6a6a6" opacity="0.4"/>
<rect x="1225" y="215" width="6" height="6" fill="#a4a5a7" opacity="0.4"/>
<rect x="1126" y="579" width="5" height="5" fill="#b8b8b6" opacity="0.4"/>
<rect x="624" y="490" width="6" height="6" fill="#b4b4b3" opacity="0.4"/>
<rect x="1310" y="125" width="4" height="4" fill="#b8b8b6" opacity="0.4"/>
<rect x="319" y="30" width="6" height="6" fill="#aaaaa9" opacity="0.4"/>
<rect x="415" y="292" width="7" height="7" fill="#b8b8b6" opacity="0.4"/>
<rect x="956" y="463" width="6" height="6" fill="#b8b8b6" opacity="0.4"/>
<rect x="1002" y="378" width="4" height="4" fill="#b8b8b6" opacity="0.4"/>
<rect x="1357" y="208" width="7" height="7" fill="#b8b8b6" opacity="0.4"/>
<rect x="403" y="499" width="7" height="7" fill="#aaaaa9" opacity="0.4"/>
<rect x="1215" y="742" width="6" height="6" fill="#a6a6a6" opacity="0.4"/>
<rect x="969" y="455" width="7" height="7" fill="#a4a5a7" opacity="0.4"/>
<rect x="576" y="695" width="4" height="4" fill="#a6a6a6" opacity="0.4"/>
<rect x="897" y="328" width="5" height="5" fill="#b8b8b6" opacity="0.4"/>
<rect x="360" y="603" width="5" height="5" fill="#a6a6a6" opacity="0.4"/>
<rect x="455" y="175" width="7" height="7" fill="#a4a5a7" opacity="0.4"/>
<rect x="1217" y="157" width="4" height="4" fill="#aaaaa9" opacity="0.4"/>
<rect x="635" y="64" width="4" height="4" fill="#b4b4b3" opacity="0.4"/>
<rect x="720" y="350" width="4" height="4" fill="#b4b4b3" opacity="0.4"/>
<rect x="1136" y="362" width="4" height="4" fill="#b8b8b6" opacity="0.4"/>
<rect x="591" y="503" width="6" height="6" fill="#a6a6a6" opacity="0.4"/>
<rect x="1306" y="711" width="4" height="4" fill="#aaaaa9" opacity="0.4"/>
<rect x="596" y="437" width="6" height="6" fill="#b4b4b3" opacity="0.4"/>
<rect x="630" y="713" width="4" height="4" fill="#b8b8b6" opacity="0.4"/>
<rect x="1293" y="39" width="5" height="5" fill="#aaaaa9" opacity="0.4"/>
<rect x="1249" y="178" width="6" height="6" fill="#b8b8b6" opacity="0.4"/>
<rect x="512" y="315" width="5" height="5" fill="#a4a5a7" opacity="0.4"/>
<rect x="725" y="657" width="7" height="7" fill="#a4a5a7" opacity="0.4"/>
<rect x="830" y="420" width="4" height="4" fill="#a6a6a6" opacity="0.4"/>
<rect x="790" y="563" width="6" height="6" fill="#a4a5a7" opacity="0.4"/>
<rect x="1190" y="317" width="4" height="4" fill="#a4a5a7" opacity="0.4"/>
<rect x="936" y="155" width="4" height="4" fill="#a6a6a6" opacity="0.4"/>
<rect x="421" y="487" width="6" height="6" fill="#b8b8b6" opacity="0.4"/>
<rect x="1403" y="545" width="4" height="4" fill="#a6a6a6" opacity="0.4"/>
<rect x="451" y="503" width="4" height="4" fill="#a6a6a6" opacity="0.4"/>
<rect x="1130" y="77" width="6" height="6" fill="#a4a5a7" opacity="0.4"/>
<rect x="520" y="732" width="4" height="4" fill="#a4a5a7" opacity="0.4"/>
<rect x="1292" y="586" width="4" height="4" fill="#b4b4b3" opacity="0.4"/>
<rect x="574" y="178" width="4" height="4" fill="#a6a6a6" opacity="0.4"/>
<rect x="1371" y="700" width="6" height="6" fill="#a6a6a6" opacity="0.4"/>
<rect x="836" y="126" width="6" height="6" fill="#b8b8b6" opacity="0.4"/>
<rect x="656" y="341" width="6" height="6" fill="#a6a6a6" opacity="0.4"/>
<rect x="585" y="237" width="6" height="6" fill="#aaaaa9" opacity="0.4"/>
<rect x="1167" y="472" width="6" height="6" fill="#b4b4b3" opacity="0.4"/>
<rect x="996" y="51" width="4" height="4" fill="#b4b4b3" opacity="0.4"/>
<rect x="789" y="598" width="7" height="7" fill="#aaaaa9" opacity="0.4"/>
<rect x="1094" y="425" width="4" height="4" fill="#b8b8b6" opacity="0.4"/>
<rect x="946" y="240" width="4" height="4" fill="#b4b4b3" opacity="0.4"/>
<rect x="888" y="241" width="4" height="4" fill="#a6a6a6" opacity="0.4"/>
<rect x="689" y="99" width="7" height="7" fill="#b8b8b6" opacity="0.4"/>
<rect x="967" y="734" width="6" height="6" fill="#a4a5a7" opacity="0.4"/>
<rect x="950" y="145" width="5" height="5" fill="#b8b8b6" opacity="0.4"/>
<rect x="860" y="109" width="7" height="7" fill="#a6a6a6" opacity="0.4"/>
<rect x="1188" y="543" width="6" height="6" fill="#a6a6a6" opacity="0.4"/>
<rect x="698" y="324" width="4" height="4" fill="#b4b4b3" opacity="0.4"/>
<rect x="773" y="505" width="5" height="5" fill="#aaaaa9" opacity="0.4"/>
<rect x="638" y="344" width="5" height="5" fill="#a4a5a7" opacity="0.4"/>
<rect x="725" y="680" width="7" height="7" fill="#b8b8b6" opacity="0.4"/>
<rect x="438" y="466" width="4" height="4" fill="#a4a5a7" opacity="0.4"/>
<rect x="690" y="269" width="7" height="7" fill="#b8b8b6" opacity="0.4"/>
<rect x="1045" y="576" width="7" height="7" fill="#b8b8b6" opacity="0.4"/>
<rect x="792" y="599" width="5" height="5" fill="#a4a5a7" opacity="0.4"/>
<rect x="437" y="369" width="5" height="5" fill="#b8b8b6" opacity="0.4"/>
<rect x="598" y="585" width="5" height="5" fill="#a4a5a7" opacity="0.4"/>
<rect x="1115" y="747" width="6" height="6" fill="#aaaaa9" opacity="0.4"/>
<rect x="477" y="270" width="6" height="6" fill="#b8b8b6" opacity="0.4"/>
<rect x="1401" y="566" width="5" height="5" fill="#a6a6a6" opacity="0.4"/>
<rect x="1386" y="103" width="5" height="5" fill="#b4b4b3" opacity="0.4"/>
<rect x="1411" y="615" width="7" height="7" fill="#aaaaa9" opacity="0.4"/>
<rect x="605" y="109" width="6" height="6" fill="#a6a6a6" opacity="0.4"/>
<rect x="528" y="315" width="4" height="4" fill="#a6a6a6" opacity="0.4"/>
<rect x="747" y="612" width="6" height="6" fill="#b8b8b6" opacity="0.4"/>
<rect x="820" y="133" width="7" height="7" fill="#a4a5a7" opacity="0.4"/>
<rect x="300" y="207" width="7" height="7" fill="#b4b4b3" opacity="0.4"/>
<rect x="1254" y="521" width="5" height="5" fill="#a4a5a7" opacity="0.4"/>
<rect x="1065" y="501" width="7" height="7" fill="#b4b4b3" opacity="0.4"/>
<rect x="649" y="492" width="7" height="7" fill="#a6a6a6" opacity="0.4"/>
<rect x="569" y="323" width="6" height="6" fill="#b8b8b6" opacity="0.4"/>
<rect x="1258" y="384" width="7" height="7" fill="#a6a6a6" opacity="0.4"/>
<rect x="882" y="516" width="6" height="6" fill="#b8b8b6" opacity="0.4"/>
<rect x="1177" y="315" width="4" height="4" fill="#b4b4b3" opacity="0.4"/>
<rect x="337" y="429" width="5" height="5" fill="#b8b8b6" opacity="0.4"/>
<rect x="883" y="103" width="7" height="7" fill="#a4a5a7" opacity="0.4"/>
<rect x="908" y="557" width="4" height="4" fill="#a4a5a7" opacity="0.4"/>
<rect x="1020" y="640" width="6" height="6" fill="#a4a5a7" opacity="0.4"/>
<rect x="760" y="728" width="5" height="5" fill="#b8b8b6" opacity="0.4"/>
<rect x="739" y="591" width="6" height="6" fill="#a6a6a6" opacity="0.4"/>
<rect x="1018" y="214" width="7" height="7" fill="#b4b4b3" opacity="0.4"/>
<rect x="364" y="83" width="6" height="6" fill="#b4b4b3" opacity="0.4"/>
<rect x="952" y="109" width="7" height="7" fill="#aaaaa9" opacity="0.4"/>
<rect x="1361" y="417" width="7" height="7" fill="#b8b8b6" opacity="0.4"/>
<rect x="819" y="149" width="5" height="5" fill="#a6a6a6" opacity="0.4"/>
<rect x="826" y="443" width="5" height="5" fill="#b8b8b6" opacity="0.4"/>
<rect x="695" y="499" width="7" height="7" fill="#b4b4b3" opacity="0.4"/>
<rect x="1425" y="589" width="7" height="7" fill="#b8b8b6" opacity="0.4"/>
<rect x="697" y="656" width="7" height="7" fill="#aaaaa9" opacity="0.4"/>
<rect x="1074" y="753" width="7" height="7" fill="#b8b8b6" opacity="0.4"/>
<rect x="297" y="561" width="6" height="6" fill="#aaaaa9" opacity="0.4"/>
<rect x="572" y="251" width="7" height="7" fill="#b4b4b3" opacity="0.4"/>
<rect x="780" y="498" width="5" height="5" fill="#aaaaa9" opacity="0.4"/>
<rect x="1348" y="659" width="4" height="4" fill="#a6a6a6" opacity="0.4"/>
<rect x="1234" y="696" width="6" height="6" fill="#b8b8b6" opacity="0.4"/>
<rect x="1013" y="39" width="5" height="5" fill="#a6a6a6" opacity="0.4"/>
<rect x="1374" y="512" width="4" height="4" fill="#aaaaa9" opacity="0.4"/>
<rect x="951" y="658" width="7" height="7" fill="#b8b8b6" opacity="0.4"/>
<rect x="687" y="141" width="5" height="5" fill="#b4b4b3" opacity="0.4"/>
<rect x="986" y="536" width="6" height="6" fill="#a6a6a6" opacity="0.4"/>
<rect x="518" y="539" width="4" height="4" fill="#a4a5a7" opacity="0.4"/>
<rect x="1136" y="352" width="4" height="4" fill="#a6a6a6" opacity="0.4"/>
<rect x="594" y="201" width="7" height="7" fill="#b8b8b6" opacity="0.4"/>
<rect x="854" y="71" width="5" height="5" fill="#b4b4b3" opacity="0.4"/>
<rect x="1089" y="210" width="4" height="4" fill="#b8b8b6" opacity="0.4"/>
<rect x="476" y="265" width="7" height="7" fill="#a4a5a7" opacity="0.4"/>
<rect x="1049" y="648" width="7" height="7" fill="#aaaaa9" opacity="0.4"/>
<rect x="769" y="737" width="5" height="5" fill="#a6a6a6" opacity="0.4"/>
<rect x="1017" y="497" width="4" height="4" fill="#a6a6a6" opacity="0.4"/>
<rect x="986" y="532" width="4" height="4" fill="#aaaaa9" opacity="0.4"/>
<rect x="874" y="386" width="4" height="4" fill="#b8b8b6" opacity="0.4"/>
<rect x="536" y="335" width="6" height="6" fill="#b8b8b6" opacity="0.4"/>
<rect x="401" y="514" width="7" height="7" fill="#aaaaa9" opacity="0.4"/>
<rect x="1178" y="437" width="6" height="6" fill="#b8b8b6" opacity="0.4"/>
<rect x="788" y="340" width="4" height="4" fill="#a4a5a7" opacity="0.4"/>
<rect x="1232" y="244" width="7" height="7" fill="#b4b4b3" opacity="0.4"/>
<rect x="673" y="754" width="6" height="6" fill="#a4a5a7" opacity="0.4"/>
<rect x="1401" y="511" width="6" height="6" fill="#a6a6a6" opacity="0.4"/>
<rect x="512" y="554" width="4" height="4" fill="#b8b8b6" opacity="0.4"/>
<rect x="1184" y="58" width="7" height="7" fill="#a4a5a7" opacity="0.4"/>
<rect x="913" y="65" width="4" height="4" fill="#aaaaa9" opacity="0.4"/>
<rect x="301" y="168" width="4" height="4" fill="#b4b4b3" opacity="0.4"/>
<rect x="1190" y="699" width="7" height="7" fill="#a4a5a7" opacity="0.4"/>
<rect x="994" y="491" width="4" height="4" fill="#a4a5a7" opacity="0.4"/>
<rect x="535" y="520" width="5" height="5" fill="#b4b4b3" opacity="0.4"/>
<rect x="409" y="162" width="7" height="7" fill="#a6a6a6" opacity="0.4"/>
<rect x="1173" y="703" width="6" height="6" fill="#a6a6a6" opacity="0.4"/>
<rect x="1284" y="130" width="6" height="6" fill="#aaaaa9" opacity="0.4"/>
<rect x="1273" y="164" width="6" height="6" fill="#a6a6a6" opacity="0.4"/>
<rect x="317" y="446" width="4" height="4" fill="#a4a5a7" opacity="0.4"/>
<rect x="859" y="413" width="7" height="7" fill="#a6a6a6" opacity="0.4"/>
<rect x="947" y="706" width="4" height="4" fill="#b4b4b3" opacity="0.4"/>
<rect x="310" y="314" width="5" height="5" fill="#a4a5a7" opacity="0.4"/>
<rect x="834" y="332" width="4" height="4" fill="#a6a6a6" opacity="0.4"/>
<rect x="1026" y="185" width="4" height="4" fill="#b8b8b6" opacity="0.4"/>
<rect x="779" y="35" width="4" height="4" fill="#a6a6a6" opacity="0.4"/>
<rect x="542" y="118" width="4" height="4" fill="#b4b4b3" opacity="0.4"/>
<rect x="607" y="448" width="5" height="5" fill="#b4b4b3" opacity="0.4"/>
<rect x="1341" y="298" width="4" height="4" fill="#b8b8b6" opacity="0.4"/>
<rect x="627" y="439" width="7" height="7" fill="#b4b4b3" opacity="0.4"/>
<rect x="1054" y="685" width="4" height="4" fill="#a6a6a6" opacity="0.4"/>
<rect x="307" y="39" width="4" height="4" fill="#a4a5a7" opacity="0.4"/>
<rect x="735" y="259" width="5" height="5" fill="#a4a5a7" opacity="0.4"/>
<rect x="1381" y="644" width="4" height="4" fill="#a4a5a7" opacity="0.4"/>
<rect x="653" y="728" width="7" height="7" fill="#b4b4b3" opacity="0.4"/>
<rect x="1062" y="135" width="6" height="6" fill="#a6a6a6" opacity="0.4"/>
<rect x="1377" y="149" width="7" height="7" fill="#b4b4b3" opacity="0.4"/>
<rect x="732" y="608" width="6" height="6" fill="#aaaaa9" opacity="0.4"/>
<rect x="626" y="73" width="6" height="6" fill="#a4a5a7" opacity="0.4"/>
<rect x="1281" y="564" width="5" height="5" fill="#a6a6a6" opacity="0.4"/>
<rect x="976" y="256" width="5" height="5" fill="#b4b4b3" opacity="0.4"/>
<rect x="722" y="533" width="5" height="5" fill="#a4a5a7" opacity="0.4"/>
<rect x="1210" y="237" width="6" height="6" fill="#a6a6a6" opacity="0.4"/>
<rect x="593" y="340" width="4" height="4" fill="#a4a5a7" opacity="0.4"/>
<rect x="621" y="132" width="5" height="5" fill="#a4a5a7" opacity="0.4"/>
<rect x="605" y="656" width="7" height="7" fill="#a4a5a7" opacity="0.4"/>
<rect x="688" y="91" width="7" height="7" fill="#a4a5a7" opacity="0.4"/>
<rect x="1199" y="176" width="6" height="6" fill="#b8b8b6" opacity="0.4"/>
<rect x="983" y="528" width="5" height="5" fill="#b4b4b3" opacity="0.4"/>
<rect x="1345" y="461" width="7" height="7" fill="#a6a6a6" opacity="0.4"/>
<rect x="816" y="93" width="4" height="4" fill="#aaaaa9" opacity="0.4"/>
<rect x="558" y="456" width="6" height="6" fill="#aaaaa9" opacity="0.4"/>
<rect x="835" y="463" width="5" height="5" fill="#b8b8b6" opacity="0.4"/>
<rect x="512" y="161" width="6" height="6" fill="#aaaaa9" opacity="0.4"/>
<rect x="950" y="293" width="5" height="5" fill="#a4a5a7" opacity="0.4"/>
<rect x="574" y="709" width="6" height="6" fill="#b4b4b3" opacity="0.4"/>
<rect x="1277" y="302" width="4" height="4" fill="#b4b4b3" opacity="0.4"/>
<rect x="471" y="469" width="6" height="6" fill="#aaaaa9" opacity="0.4"/>
<rect x="884" y="43" width="5" height="5" fill="#a6a6a6" opacity="0.4"/>
<rect x="1418" y="667" width="5" height="5" fill="#b4b4b3" opacity="0.4"/>
<rect x="591" y="603" width="4" height="4" fill="#b4b4b3" opacity="0.4"/>
<rect x="1368" y="594" width="5" height="5" fill="#a4a5a7" opacity="0.4"/>
<rect x="582" y="56" width="5" height="5" fill="#b8b8b6" opacity="0.4"/>
<rect x="723" y="48" width="6" height="6" fill="#a6a6a6" opacity="0.4"/>
<rect x="1282" y="366" width="7" height="7" fill="#a6a6a6" opacity="0.4"/>
<rect x="1341" y="549" width="6" height="6" fill="#a6a6a6" opacity="0.4"/>
<rect x="656" y="200" width="7" height="7" fill="#a6a6a6" opacity="0.4"/>
<rect x="501" y="655" width="5" height="5" fill="#aaaaa9" opacity="0.4"/>
<rect x="1420" y="192" width="6" height="6" fill="#a6a6a6" opacity="0.4"/>
<rect x="1362" y="72" width="4" height="4" fill="#a4a5a7" opacity="0.4"/>
<rect x="1244" y="63" width="7" height="7" fill="#a4a5a7" opacity="0.4"/>
<rect x="357" y="135" width="5" height="5" fill="#a6a6a6" opacity="0.4"/>
<rect x="1062" y="249" width="7" height="7" fill="#a4a5a7" opacity="0.4"/>
<rect x="1154" y="106" width="6" height="6" fill="#aaaaa9" opacity="0.4"/>
<rect x="586" y="120" width="7" height="7" fill="#b4b4b3" opacity="0.4"/>
<rect x="485" y="204" width="4" height="4" fill="#b8b8b6" opacity="0.4"/>
<rect x="825" y="701" width="5" height="5" fill="#a6a6a6" opacity="0.4"/>
<rect x="1347" y="191" width="6" height="6" fill="#a4a5a7" opacity="0.4"/>
<rect x="1303" y="131" width="4" height="4" fill="#b4b4b3" opacity="0.4"/>
<rect x="1345" y="312" width="4" height="4" fill="#a6a6a6" opacity="0.4"/>
<rect x="807" y="279" width="7" height="7" fill="#b8b8b6" opacity="0.4"/>
<rect x="425" y="298" width="5" height="5" fill="#aaaaa9" opacity="0.4"/>
<rect x="1129" y="161" width="5" height="5" fill="#b4b4b3" opacity="0.4"/>
<rect x="792" y="138" width="7" height="7" fill="#b4b4b3" opacity="0.4"/>
<rect x="574" y="47" width="6" height="6" fill="#a4a5a7" opacity="0.4"/>
<rect x="674" y="152" width="4" height="4" fill="#b4b4b3" opacity="0.4"/>
<rect x="655" y="695" width="5" height="5" fill="#a6a6a6" opacity="0.4"/>
<rect x="1405" y="70" width="7" height="7" fill="#b8b8b6" opacity="0.4"/>
<rect x="1242" y="116" width="6" height="6" fill="#b8b8b6" opacity="0.4"/>
<rect x="784" y="221" width="5" height="5" fill="#b8b8b6" opacity="0.4"/>
<rect x="405" y="242" width="4" height="4" fill="#b8b8b6" opacity="0.4"/>
<rect x="1239" y="750" width="4" height="4" fill="#b8b8b6" opacity="0.4"/>
<rect x="796" y="403" width="5" height="5" fill="#a4a5a7" opacity="0.4"/>
<rect x="797" y="611" width="6" height="6" fill="#a4a5a7" opacity="0.4"/>
<rect x="505" y="349" width="5" height="5" fill="#b4b4b3" opacity="0.4"/>
<rect x="608" y="161" width="5" height="5" fill="#b8b8b6" opacity="0.4"/>
<rect x="1102" y="173" width="4" height="4" fill="#a6a6a6" opacity="0.4"/>
<rect x="1303" y="567" width="5" height="5" fill="#aaaaa9" opacity="0.4"/>
<rect x="528" y="480" width="6" height="6" fill="#b8b8b6" opacity="0.4"/>
<rect x="524" y="76" width="7" height="7" fill="#a4a5a7" opacity="0.4"/>
<rect x="1249" y="704" width="6" height="6" fill="#a4a5a7" opacity="0.4"/>
<rect x="674" y="649" width="4" height="4" fill="#b4b4b3" opacity="0.4"/>
<rect x="312" y="700" width="5" height="5" fill="#b4b4b3" opacity="0.4"/>
<rect x="1284" y="224" width="6" height="6" fill="#b8b8b6" opacity="0.4"/>
<rect x="336" y="546" width="4" height="4" fill="#a4a5a7" opacity="0.4"/>
<rect x="698" y="716" width="4" height="4" fill="#a4a5a7" opacity="0.4"/>
<rect x="431" y="555" width="7" height="7" fill="#aaaaa9" opacity="0.4"/>
<rect x="948" y="691" width="4" height="4" fill="#aaaaa9" opacity="0.4"/>
<rect x="1377" y="393" width="4" height="4" fill="#a4a5a7" opacity="0.4"/>
<rect x="896" y="425" width="5" height="5" fill="#a6a6a6" opacity="0.4"/>
<rect x="1392" y="193" width="5" height="5" fill="#b8b8b6" opacity="0.4"/>
<rect x="411" y="213" width="4" height="4" fill="#a6a6a6" opacity="0.4"/>
<rect x="403" y="544" width="6" height="6" fill="#b8b8b6" opacity="0.4"/>
<rect x="314" y="470" width="7" height="7" fill="#a4a5a7" opacity="0.4"/>
<rect x="888" y="547" width="6" height="6" fill="#a6a6a6" opacity="0.4"/>
<rect x="1281" y="557" width="6" height="6" fill="#a6a6a6" opacity="0.4"/>
<rect x="434" y="392" width="6" height="6" fill="#a4a5a7" opacity="0.4"/>
<rect x="419" y="118" width="5" height="5" fill="#b8b8b6" opacity="0.4"/>
<rect x="1271" y="137" width="7" height="7" fill="#a4a5a7" opacity="0.4"/>
<rect x="1141" y="149" width="7" height="7" fill="#a6a6a6" opacity="0.4"/>
<rect x="1082" y="469" width="4" height="4" fill="#a4a5a7" opacity="0.4"/>
<rect x="743" y="723" width="6" height="6" fill="#aaaaa9" opacity="0.4"/>
<rect x="749" y="647" width="6" height="6" fill="#b4b4b3" opacity="0.4"/>
<rect x="1219" y="654" width="6" height="6" fill="#a6a6a6" opacity="0.4"/>
<rect x="881" y="735" width="5" height="5" fill="#aaaaa9" opacity="0.4"/>
<rect x="1282" y="517" width="6" height="6" fill="#a6a6a6" opacity="0.4"/>
<rect x="418" y="166" width="7" height="7" fill="#aaaaa9" opacity="0.4"/>
<rect x="522" y="522" width="5" height="5" fill="#b8b8b6" opacity="0.4"/>
<rect x="772" y="321" width="4" height="4" fill="#b4b4b3" opacity="0.4"/>
<rect x="1213" y="681" width="4" height="4" fill="#a6a6a6" opacity="0.4"/>
<rect x="1276" y="486" width="6" height="6" fill="#a4a5a7" opacity="0.4"/>
<rect x="1007" y="623" width="4" height="4" fill="#a6a6a6" opacity="0.4"/>
<rect x="578" y="412" width="5" height="5" fill="#b4b4b3" opacity="0.4"/>
<rect x="1373" y="240" width="6" height="6" fill="#aaaaa9" opacity="0.4"/>
<rect x="1029" y="117" width="6" height="6" fill="#a4a5a7" opacity="0.4"/>
<rect x="390" y="464" width="7" height="7" fill="#b8b8b6" opacity="0.4"/>
<rect x="435" y="125" width="7" height="7" fill="#aaaaa9" opacity="0.4"/>
<rect x="949" y="230" width="6" height="6" fill="#a6a6a6" opacity="0.4"/>
<rect x="1247" y="478" width="5" height="5" fill="#a4a5a7" opacity="0.4"/>
<rect x="1032" y="176" width="7" height="7" fill="#aaaaa9" opacity="0.4"/>
<rect x="1306" y="252" width="7" height="7" fill="#b4b4b3" opacity="0.4"/>
<rect x="1223" y="51" width="5" height="5" fill="#aaaaa9" opacity="0.4"/>
<rect x="508" y="431" width="7" height="7" fill="#a4a5a7" opacity="0.4"/>
<rect x="307" y="288" width="6" height="6" fill="#b8b8b6" opacity="0.4"/>
<rect x="926" y="391" width="5" height="5" fill="#aaaaa9" opacity="0.4"/>
<rect x="629" y="598" width="4" height="4" fill="#b8b8b6" opacity="0.4"/>
<rect x="982" y="285" width="7" height="7" fill="#a6a6a6" opacity="0.4"/>
<rect x="1241" y="289" width="5" height="5" fill="#a6a6a6" opacity="0.4"/>
<rect x="1417" y="528" width="7" height="7" fill="#b8b8b6" opacity="0.4"/>
<rect x="677" y="288" width="6" height="6" fill="#b8b8b6" opacity="0.4"/>
<rect x="1226" y="410" width="6" height="6" fill="#b4b4b3" opacity="0.4"/>
<rect x="1185" y="551" width="7" height="7" fill="#b8b8b6" opacity="0.4"/>
<rect x="1282" y="31" width="4" height="4" fill="#a4a5a7" opacity="0.4"/>
<rect x="859" y="739" width="5" height="5" fill="#a4a5a7" opacity="0.4"/>
<rect x="768" y="606" width="4" height="4" fill="#a4a5a7" opacity="0.4"/>
<rect x="725" y="362" width="6" height="6" fill="#b4b4b3" opacity="0.4"/>
<rect x="1115" y="244" width="7" height="7" fill="#b4b4b3" opacity="0.4"/>
<rect x="1030" y="33" width="7" height="7" fill="#b4b4b3" opacity="0.4"/>
<rect x="798" y="164" width="5" height="5" fill="#aaaaa9" opacity="0.4"/>
<rect x="788" y="306" width="4" height="4" fill="#b8b8b6" opacity="0.4"/>
<rect x="1227" y="272" width="5" height="5" fill="#a4a5a7" opacity="0.4"/>
<rect x="1382" y="179" width="4" height="4" fill="#b4b4b3" opacity="0.4"/>
<rect x="323" y="217" width="6" height="6" fill="#b4b4b3" opacity="0.4"/>
<rect x="1339" y="599" width="7" height="7" fill="#a4a5a7" opacity="0.4"/>
<rect x="881" y="410" width="7" height="7" fill="#b4b4b3" opacity="0.4"/>
<rect x="821" y="58" width="7" height="7" fill="#aaaaa9" opacity="0.4"/>
<rect x="1370" y="527" width="5" height="5" fill="#a4a5a7" opacity="0.4"/>
<rect x="406" y="304" width="5" height="5" fill="#b4b4b3" opacity="0.4"/>
<rect x="1293" y="740" width="7" height="7" fill="#b4b4b3" opacity="0.4"/>
<rect x="794" y="489" width="6" height="6" fill="#a4a5a7" opacity="0.4"/>
<rect x="1079" y="579" width="5" height="5" fill="#a6a6a6" opacity="0.4"/>
<rect x="706" y="299" width="6" height="6" fill="#a6a6a6" opacity="0.4"/>
<rect x="876" y="110" width="6" height="6" fill="#aaaaa9" opacity="0.4"/>
<rect x="1225" y="759" width="5" height="5" fill="#b4b4b3" opacity="0.4"/>
<rect x="889" y="630" width="5" height="5" fill="#b8b8b6" opacity="0.4"/>
<rect x="762" y="72" width="4" height="4" fill="#a4a5a7" opacity="0.4"/>
<rect x="695" y="761" width="7" height="7" fill="#a6a6a6" opacity="0.4"/>
<rect x="306" y="30" width="4" height="4" fill="#a4a5a7" opacity="0.4"/>
<rect x="1335" y="321" width="4" height="4" fill="#a6a6a6" opacity="0.4"/>
<rect x="1052" y="173" width="6" height="6" fill="#b4b4b3" opacity="0.4"/>
<rect x="1283" y="689" width="5" height="5" fill="#a4a5a7" opacity="0.4"/>
<rect x="946" y="331" width="5" height="5" fill="#a6a6a6" opacity="0.4"/>
<rect x="472" y="589" width="4" height="4" fill="#a6a6a6" opacity="0.4"/>
<rect x="408" y="154" width="7" height="7" fill="#a4a5a7" opacity="0.4"/>
<rect x="1228" y="480" width="4" height="4" fill="#a6a6a6" opacity="0.4"/>
<rect x="1071" y="455" width="5" height="5" fill="#b8b8b6" opacity="0.4"/>
<rect x="696" y="153" width="4" height="4" fill="#aaaaa9" opacity="0.4"/>
<rect x="1269" y="727" width="6" height="6" fill="#a6a6a6" opacity="0.4"/>
<rect x="512" y="489" width="4" height="4" fill="#a6a6a6" opacity="0.4"/>
<rect x="544" y="320" width="7" height="7" fill="#a6a6a6" opacity="0.4"/>
<rect x="356" y="204" width="4" height="4" fill="#b8b8b6" opacity="0.4"/>
<rect x="475" y="461" width="6" height="6" fill="#b8b8b6" opacity="0.4"/>
<rect x="301" y="668" width="6" height="6" fill="#b4b4b3" opacity="0.4"/>
<rect x="769" y="214" width="4" height="4" fill="#b4b4b3" opacity="0.4"/>
<rect x="570" y="316" width="5" height="5" fill="#a4a5a7" opacity="0.4"/>
<rect x="763" y="322" width="4" height="4" fill="#b4b4b3" opacity="0.4"/>
<rect x="1194" y="208" width="5" height="5" fill="#b8b8b6" opacity="0.4"/>
<rect x="701" y="166" width="7" height="7" fill="#aaaaa9" opacity="0.4"/>
<rect x="931" y="113" width="7" height="7" fill="#a4a5a7" opacity="0.4"/>
<rect x="675" y="509" width="7" height="7" fill="#a6a6a6" opacity="0.4"/>
<rect x="1231" y="287" width="7" height="7" fill="#b8b8b6" opacity="0.4"/>
<rect x="511" y="237" width="7" height="7" fill="#b8b8b6" opacity="0.4"/>
<rect x="334" y="518" width="5" height="5" fill="#aaaaa9" opacity="0.4"/>
<rect x="568" y="124" width="6" height="6" fill="#b8b8b6" opacity="0.4"/>
<rect x="912" y="609" width="7" height="7" fill="#a4a5a7" opacity="0.4"/>
<rect x="824" y="615" width="5" height="5" fill="#b8b8b6" opacity="0.4"/>
<rect x="712" y="188" width="7" height="7" fill="#b4b4b3" opacity="0.4"/>
<rect x="1008" y="457" width="7" height="7" fill="#aaaaa9" opacity="0.4"/>
<rect x="867" y="196" width="5" height="5" fill="#b4b4b3" opacity="0.4"/>
<rect x="1363" y="764" width="7" height="7" fill="#a4a5a7" opacity="0.4"/>
<rect x="961" y="300" width="7" height="7" fill="#b8b8b6" opacity="0.4"/>
<rect x="984" y="185" width="4" height="4" fill="#a6a6a6" opacity="0.4"/>
<rect x="910" y="228" width="4" height="4" fill="#b4b4b3" opacity="0.4"/>
<rect x="1040" y="447" width="4" height="4" fill="#aaaaa9" opacity="0.4"/>
<rect x="737" y="91" width="5" height="5" fill="#b8b8b6" opacity="0.4"/>
<rect x="658" y="517" width="4" height="4" fill="#a6a6a6" opacity="0.4"/>
<rect x="932" y="295" width="6" height="6" fill="#a4a5a7" opacity="0.4"/>
<rect x="513" y="558" width="5" height="5" fill="#a6a6a6" opacity="0.4"/>
<rect x="622" y="631" width="6" height="6" fill="#b4b4b3" opacity="0.4"/>
<rect x="698" y="651" width="5" height="5" fill="#b4b4b3" opacity="0.4"/>
<rect x="1357" y="158" width="6" height="6" fill="#aaaaa9" opacity="0.4"/>
<rect x="1312" y="47" width="5" height="5" fill="#b4b4b3" opacity="0.4"/>
<rect x="1429" y="324" width="5" height="5" fill="#a6a6a6" opacity="0.4"/>
<rect x="625" y="228" width="5" height="5" fill="#a4a5a7" opacity="0.4"/>
<rect x="1103" y="58" width="5" height="5" fill="#a6a6a6" opacity="0.4"/>
<rect x="783" y="587" width="7" height="7" fill="#b8b8b6" opacity="0.4"/>
<rect x="1132" y="436" width="5" height="5" fill="#b8b8b6" opacity="0.4"/>
<rect x="941" y="557" width="7" height="7" fill="#aaaaa9" opacity="0.4"/>
<rect x="1055" y="453" width="4" height="4" fill="#a6a6a6" opacity="0.4"/>
<rect x="1241" y="601" width="4" height="4" fill="#aaaaa9" opacity="0.4"/>
<rect x="1287" y="460" width="5" height="5" fill="#a6a6a6" opacity="0.4"/>
<rect x="1067" y="55" width="5" height="5" fill="#aaaaa9" opacity="0.4"/>
<rect x="1176" y="283" width="7" height="7" fill="#a6a6a6" opacity="0.4"/>
<rect x="1082" y="319" width="5" height="5" fill="#a4a5a7" opacity="0.4"/>
<rect x="613" y="94" width="7" height="7" fill="#b4b4b3" opacity="0.4"/>
<rect x="1350" y="538" width="4" height="4" fill="#b4b4b3" opacity="0.4"/>
<rect x="1062" y="180" width="5" height="5" fill="#a4a5a7" opacity="0.4"/>
<rect x="850" y="168" width="6" height="6" fill="#a4a5a7" opacity="0.4"/>
<rect x="492" y="149" width="6" height="6" fill="#b8b8b6" opacity="0.4"/>
<rect x="577" y="72" width="6" height="6" fill="#aaaaa9" opacity="0.4"/>
<rect x="761" y="177" width="5" height="5" fill="#aaaaa9" opacity="0.4"/>
<rect x="449" y="550" width="5" height="5" fill="#b4b4b3" opacity="0.4"/>
<rect x="1095" y="32" width="5" height="5" fill="#b4b4b3" opacity="0.4"/>
<rect x="1356" y="287" width="5" height="5" fill="#aaaaa9" opacity="0.4"/>
<rect x="1298" y="133" width="5" height="5" fill="#a4a5a7" opacity="0.4"/>
<rect x="673" y="630" width="7" height="7" fill="#a4a5a7" opacity="0.4"/>
<rect x="1157" y="153" width="7" height="7" fill="#b8b8b6" opacity="0.4"/>
<rect x="1247" y="328" width="4" height="4" fill="#b8b8b6" opacity="0.4"/>
<rect x="1077" y="37" width="5" height="5" fill="#b4b4b3" opacity="0.4"/>
<rect x="343" y="689" width="5" height="5" fill="#aaaaa9" opacity="0.4"/>
<rect x="420" y="256" width="5" height="5" fill="#a6a6a6" opacity="0.4"/>
<rect x="662" y="374" width="6" height="6" fill="#aaaaa9" opacity="0.4"/>
<rect x="485" y="81" width="7" height="7" fill="#a6a6a6" opacity="0.4"/>
<rect x="1420" y="582" width="6" height="6" fill="#a6a6a6" opacity="0.4"/>
<rect x="1407" y="444" width="7" height="7" fill="#a6a6a6" opacity="0.4"/>
<rect x="1380" y="388" width="6" height="6" fill="#a4a5a7" opacity="0.4"/>
<rect x="303" y="707" width="6" height="6" fill="#aaaaa9" opacity="0.4"/>
<rect x="1035" y="86" width="4" height="4" fill="#a6a6a6" opacity="0.4"/>
<rect x="1173" y="648" width="6" height="6" fill="#aaaaa9" opacity="0.4"/>
<rect x="505" y="499" width="4" height="4" fill="#b8b8b6" opacity="0.4"/>
<rect x="1185" y="641" width="6" height="6" fill="#a4a5a7" opacity="0.4"/>
<rect x="725" y="506" width="6" height="6" fill="#aaaaa9" opacity="0.4"/>
<rect x="555" y="129" width="6" height="6" fill="#aaaaa9" opacity="0.4"/>
<rect x="566" y="58" width="7" height="7" fill="#a4a5a7" opacity="0.4"/>
<rect x="1321" y="725" width="7" height="7" fill="#b4b4b3" opacity="0.4"/>
<rect x="861" y="144" width="4" height="4" fill="#aaaaa9" opacity="0.4"/>
<rect x="455" y="196" width="7" height="7" fill="#b8b8b6" opacity="0.4"/>
<rect x="1017" y="324" width="7" height="7" fill="#a6a6a6" opacity="0.4"/>
<rect x="838" y="189" width="4" height="4" fill="#aaaaa9" opacity="0.4"/>
<rect x="330" y="479" width="7" height="7" fill="#a4a5a7" opacity="0.4"/>
<rect x="456" y="81" width="7" height="7" fill="#a6a6a6" opacity="0.4"/>
<rect x="1305" y="74" width="5" height="5" fill="#a6a6a6" opacity="0.4"/>
<rect x="1320" y="149" width="4" height="4" fill="#aaaaa9" opacity="0.4"/>
<rect x="797" y="444" width="5" height="5" fill="#aaaaa9" opacity="0.4"/>
<rect x="826" y="429" width="7" height="7" fill="#a4a5a7" opacity="0.4"/>
<rect x="780" y="423" width="7" height="7" fill="#b8b8b6" opacity="0.4"/>
<rect x="1386" y="485" width="6" height="6" fill="#a6a6a6" opacity="0.4"/>
<rect x="985" y="247" width="7" height="7" fill="#a4a5a7" opacity="0.4"/>
<rect x="1375" y="383" width="6" height="6" fill="#b8b8b6" opacity="0.4"/>
<rect x="1276" y="419" width="5" height="5" fill="#a6a6a6" opacity="0.4"/>
<rect x="547" y="574" width="5" height="5" fill="#a6a6a6" opacity="0.4"/>
<rect x="1044" y="303" width="7" height="7" fill="#a4a5a7" opacity="0.4"/>
<rect x="703" y="205" width="7" height="7" fill="#b4b4b3" opacity="0.4"/>
<rect x="590" y="196" width="4" height="4" fill="#b8b8b6" opacity="0.4"/>
<rect x="545" y="646" width="5" height="5" fill="#a6a6a6" opacity="0.4"/>
<rect x="896" y="214" width="5" height="5" fill="#b4b4b3" opacity="0.4"/>
<rect x="923" y="195" width="4" height="4" fill="#a4a5a7" opacity="0.4"/>
<rect x="1129" y="699" width="4" height="4" fill="#a4a5a7" opacity="0.4"/>
<rect x="1260" y="529" width="5" height="5" fill="#b4b4b3" opacity="0.4"/>
<rect x="1274" y="434" width="4" height="4" fill="#a6a6a6" opacity="0.4"/>
<rect x="816" y="534" width="5" height="5" fill="#a4a5a7" opacity="0.4"/>
<rect x="1393" y="169" width="4" height="4" fill="#b4b4b3" opacity="0.4"/>
<rect x="449" y="601" width="7" height="7" fill="#a6a6a6" opacity="0.4"/>
<rect x="563" y="303" width="5" height="5" fill="#a6a6a6" opacity="0.4"/>
<rect x="816" y="117" width="7" height="7" fill="#b8b8b6" opacity="0.4"/>
<rect x="1325" y="93" width="4" height="4" fill="#b8b8b6" opacity="0.4"/>
<rect x="1335" y="671" width="6" height="6" fill="#b8b8b6" opacity="0.4"/>
<rect x="1140" y="280" width="6" height="6" fill="#a6a6a6" opacity="0.4"/>
<rect x="433" y="303" width="6" height="6" fill="#a4a5a7" opacity="0.4"/>
<rect x="1113" y="60" width="6" height="6" fill="#a4a5a7" opacity="0.4"/>
<rect x="407" y="433" width="4" height="4" fill="#a4a5a7" opacity="0.4"/>
<rect x="333" y="700" width="6" height="6" fill="#b8b8b6" opacity="0.4"/>
<rect x="696" y="540" width="7" height="7" fill="#a6a6a6" opacity="0.4"/>
<rect x="423" y="43" width="4" height="4" fill="#a6a6a6" opacity="0.4"/>
<rect x="1203" y="165" width="6" height="6" fill="#a4a5a7" opacity="0.4"/>
<rect x="1286" y="522" width="6" height="6" fill="#b8b8b6" opacity="0.4"/>
<rect x="905" y="537" width="7" height="7" fill="#aaaaa9" opacity="0.4"/>
<rect x="310" y="281" width="7" height="7" fill="#b8b8b6" opacity="0.4"/>
<rect x="864" y="672" width="4" height="4" fill="#a6a6a6" opacity="0.4"/>
<rect x="501" y="632" width="7" height="7" fill="#a4a5a7" opacity="0.4"/>
<rect x="1251" y="742" width="7" height="7" fill="#b4b4b3" opacity="0.4"/>
<rect x="554" y="735" width="4" height="4" fill="#a4a5a7" opacity="0.4"/>
<rect x="704" y="418" width="5" height="5" fill="#aaaaa9" opacity="0.4"/>
<rect x="963" y="60" width="6" height="6" fill="#b8b8b6" opacity="0.4"/>
<rect x="1119" y="273" width="7" height="7" fill="#b4b4b3" opacity="0.4"/>
<rect x="1358" y="260" width="7" height="7" fill="#aaaaa9" opacity="0.4"/>
<rect x="673" y="43" width="4" height="4" fill="#b4b4b3" opacity="0.4"/>
<rect x="1010" y="564" width="6" height="6" fill="#b8b8b6" opacity="0.4"/>
<rect x="730" y="75" width="6" height="6" fill="#aaaaa9" opacity="0.4"/>
<rect x="940" y="418" width="4" height="4" fill="#b8b8b6" opacity="0.4"/>
<rect x="1333" y="694" width="5" height="5" fill="#a6a6a6" opacity="0.4"/>
<rect x="1173" y="495" width="6" height="6" fill="#a6a6a6" opacity="0.4"/>
<rect x="1193" y="613" width="5" height="5" fill="#b8b8b6" opacity="0.4"/>
<rect x="1067" y="252" width="6" height="6" fill="#aaaaa9" opacity="0.4"/>
<rect x="872" y="497" width="7" height="7" fill="#aaaaa9" opacity="0.4"/>
<rect x="674" y="548" width="7" height="7" fill="#aaaaa9" opacity="0.4"/>
<rect x="866" y="688" width="6" height="6" fill="#b8b8b6" opacity="0.4"/>
<rect x="465" y="180" width="7" height="7" fill="#b4b4b3" opacity="0.4"/>
<rect x="800" y="448" width="5" height="5" fill="#aaaaa9" opacity="0.4"/>
<rect x="960" y="134" width="6" height="6" fill="#aaaaa9" opacity="0.4"/>
<rect x="1119" y="435" width="4" height="4" fill="#aaaaa9" opacity="0.4"/>
<rect x="1340" y="459" width="5" height="5" fill="#a6a6a6" opacity="0.4"/>
<rect x="639" y="289" width="6" height="6" fill="#b4b4b3" opacity="0.4"/>
<rect x="1396" y="537" width="7" height="7" fill="#a6a6a6" opacity="0.4"/>
<rect x="656" y="157" width="4" height="4" fill="#aaaaa9" opacity="0.4"/>
<rect x="1155" y="490" width="4" height="4" fill="#b8b8b6" opacity="0.4"/>
<rect x="542" y="323" width="6" height="6" fill="#b8b8b6" opacity="0.4"/>
<rect x="1275" y="506" width="5" height="5" fill="#b8b8b6" opacity="0.4"/>
<rect x="1127" y="739" width="4" height="4" fill="#a4a5a7" opacity="0.4"/>
<rect x="384" y="625" width="6" height="6" fill="#a4a5a7" opacity="0.4"/>
<rect x="1110" y="32" width="4" height="4" fill="#aaaaa9" opacity="0.4"/>
<rect x="1020" y="709" width="6" height="6" fill="#b8b8b6" opacity="0.4"/>
<rect x="665" y="581" width="7" height="7" fill="#b4b4b3" opacity="0.4"/>
<rect x="986" y="619" width="4" height="4" fill="#b8b8b6" opacity="0.4"/>
<rect x="1274" y="616" width="6" height="6" fill="#a6a6a6" opacity="0.4"/>
<rect x="1175" y="757" width="6" height="6" fill="#b4b4b3" opacity="0.4"/>
<rect x="1361" y="673" width="6" height="6" fill="#a6a6a6" opacity="0.4"/>
<rect x="934" y="757" width="7" height="7" fill="#a6a6a6" opacity="0.4"/>
<rect x="991" y="562" width="5" height="5" fill="#aaaaa9" opacity="0.4"/>
<rect x="400" y="143" width="4" height="4" fill="#b8b8b6" opacity="0.4"/>
<rect x="700" y="295" width="5" height="5" fill="#aaaaa9" opacity="0.4"/>
<rect x="1040" y="472" width="5" height="5" fill="#aaaaa9" opacity="0.4"/>
<rect x="1135" y="218" width="4" height="4" fill="#b4b4b3" opacity="0.4"/>
<rect x="1175" y="256" width="7" height="7" fill="#a4a5a7" opacity="0.4"/>
<rect x="929" y="295" width="6" height="6" fill="#a4a5a7" opacity="0.4"/>
<rect x="444" y="35" width="4" height="4" fill="#b4b4b3" opacity="0.4"/>
<rect x="1038" y="599" width="5" height="5" fill="#aaaaa9" opacity="0.4"/>
<rect x="1417" y="196" width="4" height="4" fill="#a6a6a6" opacity="0.4"/>
<rect x="1003" y="118" width="5" height="5" fill="#a4a5a7" opacity="0.4"/>
<rect x="924" y="162" width="6" height="6" fill="#a4a5a7" opacity="0.4"/>
<rect x="1131" y="694" width="4" height="4" fill="#b8b8b6" opacity="0.4"/>
<rect x="692" y="552" width="7" height="7" fill="#b4b4b3" opacity="0.4"/>
<rect x="536" y="701" width="7" height="7" fill="#b4b4b3" opacity="0.4"/>
<rect x="535" y="611" width="4" height="4" fill="#a6a6a6" opacity="0.4"/>
<rect x="1043" y="39" width="6" height="6" fill="#b4b4b3" opacity="0.4"/>
<rect x="362" y="444" width="7" height="7" fill="#b4b4b3" opacity="0.4"/>
<rect x="1367" y="491" width="4" height="4" fill="#b8b8b6" opacity="0.4"/>
<rect x="580" y="222" width="5" height="5" fill="#b4b4b3" opacity="0.4"/>
<rect x="557" y="178" width="6" height="6" fill="#b4b4b3" opacity="0.4"/>
<rect x="633" y="762" width="5" height="5" fill="#b8b8b6" opacity="0.4"/>
<rect x="836" y="717" width="5" height="5" fill="#aaaaa9" opacity="0.4"/>
<rect x="1228" y="237" width="4" height="4" fill="#aaaaa9" opacity="0.4"/>
<rect x="845" y="686" width="6" height="6" fill="#b8b8b6" opacity="0.4"/>
<rect x="1069" y="469" width="5" height="5" fill="#b4b4b3" opacity="0.4"/>
<rect x="951" y="680" width="6" height="6" fill="#b8b8b6" opacity="0.4"/>
<rect x="346" y="599" width="5" height="5" fill="#b4b4b3" opacity="0.4"/>
<rect x="788" y="131" width="4" height="4" fill="#aaaaa9" opacity="0.4"/>
<rect x="1208" y="140" width="5" height="5" fill="#a6a6a6" opacity="0.4"/>
<rect x="1329" y="139" width="4" height="4" fill="#aaaaa9" opacity="0.4"/>
<rect x="1147" y="371" width="4" height="4" fill="#b4b4b3" opacity="0.4"/>
<rect x="764" y="502" width="6" height="6" fill="#b4b4b3" opacity="0.4"/>
<rect x="1406" y="52" width="5" height="5" fill="#b8b8b6" opacity="0.4"/>
<rect x="1193" y="537" width="5" height="5" fill="#a6a6a6" opacity="0.4"/>
<rect x="867" y="199" width="4" height="4" fill="#b4b4b3" opacity="0.4"/>
<rect x="1121" y="64" width="4" height="4" fill="#aaaaa9" opacity="0.4"/>
<rect x="1291" y="117" width="5" height="5" fill="#b4b4b3" opacity="0.4"/>
<rect x="890" y="30" width="5" height="5" fill="#b8b8b6" opacity="0.4"/>
<rect x="1013" y="431" width="6" height="6" fill="#a6a6a6" opacity="0.4"/>
<rect x="1247" y="734" width="6" height="6" fill="#a6a6a6" opacity="0.4"/>
<rect x="1396" y="658" width="4" height="4" fill="#b8b8b6" opacity="0.4"/>
<rect x="604" y="159" width="6" height="6" fill="#aaaaa9" opacity="0.4"/>
<rect x="372" y="60" width="4" height="4" fill="#a4a5a7" opacity="0.4"/>
<rect x="757" y="439" width="6" height="6" fill="#aaaaa9" opacity="0.4"/>
<rect x="306" y="536" width="6" height="6" fill="#b4b4b3" opacity="0.4"/>
<rect x="917" y="537" width="7" height="7" fill="#aaaaa9" opacity="0.4"/>
<rect x="773" y="427" width="5" height="5" fill="#b4b4b3" opacity="0.4"/>
<rect x="733" y="312" width="5" height="5" fill="#b4b4b3" opacity="0.4"/>
<rect x="1313" y="497" width="6" height="6" fill="#b8b8b6" opacity="0.4"/>
<rect x="1081" y="567" width="5" height="5" fill="#b8b8b6" opacity="0.4"/>
<rect x="1047" y="92" width="4" height="4" fill="#a4a5a7" opacity="0.4"/>
<rect x="1325" y="65" width="6" height="6" fill="#a4a5a7" opacity="0.4"/>
<rect x="1071" y="355" width="7" height="7" fill="#aaaaa9" opacity="0.4"/>
<rect x="1397" y="29" width="6" height="6" fill="#b4b4b3" opacity="0.4"/>
<rect x="966" y="762" width="7" height="7" fill="#b8b8b6" opacity="0.4"/>
<rect x="697" y="75" width="6" height="6" fill="#a4a5a7" opacity="0.4"/>
<rect x="990" y="528" width="4" height="4" fill="#aaaaa9" opacity="0.4"/>
<rect x="1008" y="429" width="6" height="6" fill="#b8b8b6" opacity="0.4"/>
<rect x="592" y="649" width="7" height="7" fill="#aaaaa9" opacity="0.4"/>
<rect x="942" y="766" width="6" height="6" fill="#a6a6a6" opacity="0.4"/>
<rect x="889" y="417" width="5" height="5" fill="#aaaaa9" opacity="0.4"/>
<rect x="1059" y="141" width="5" height="5" fill="#b4b4b3" opacity="0.4"/>
<rect x="1021" y="639" width="6" height="6" fill="#a6a6a6" opacity="0.4"/>
<rect x="727" y="642" width="4" height="4" fill="#b4b4b3" opacity="0.4"/>
<rect x="759" y="547" width="4" height="4" fill="#b4b4b3" opacity="0.4"/>
<rect x="708" y="517" width="6" height="6" fill="#a4a5a7" opacity="0.4"/>
<rect x="808" y="93" width="6" height="6" fill="#b4b4b3" opacity="0.4"/>
<rect x="1426" y="541" width="7" height="7" fill="#b4b4b3" opacity="0.4"/>
<rect x="1123" y="157" width="5" height="5" fill="#a4a5a7" opacity="0.4"/>
<rect x="301" y="124" width="5" height="5" fill="#b4b4b3" opacity="0.4"/>
<rect x="1001" y="414" width="6" height="6" fill="#b4b4b3" opacity="0.4"/>
<rect x="314" y="176" width="6" height="6" fill="#a4a5a7" opacity="0.4"/>
<rect x="360" y="160" width="6" height="6" fill="#a4a5a7" opacity="0.4"/>
<rect x="1335" y="217" width="7" height="7" fill="#aaaaa9" opacity="0.4"/>
<rect x="398" y="497" width="5" height="5" fill="#a6a6a6" opacity="0.4"/>
<rect x="440" y="735" width="6" height="6" fill="#aaaaa9" opacity="0.4"/>
<rect x="1339" y="557" width="6" height="6" fill="#b4b4b3" opacity="0.4"/>
<rect x="341" y="584" width="7" height="7" fill="#b4b4b3" opacity="0.4"/>
<rect x="1030" y="626" width="5" height="5" fill="#aaaaa9" opacity="0.4"/>
<rect x="731" y="455" width="5" height="5" fill="#a4a5a7" opacity="0.4"/>
<rect x="1404" y="657" width="6" height="6" fill="#a4a5a7" opacity="0.4"/>
<rect x="366" y="178" width="4" height="4" fill="#a6a6a6" opacity="0.4"/>
<rect x="1152" y="308" width="7" height="7" fill="#a4a5a7" opacity="0.4"/>
<rect x="858" y="693" width="4" height="4" fill="#a6a6a6" opacity="0.4"/>
<rect x="967" y="369" width="7" height="7" fill="#b4b4b3" opacity="0.4"/>
<rect x="765" y="378" width="7" height="7" fill="#a6a6a6" opacity="0.4"/>
<rect x="745" y="128" width="5" height="5" fill="#a6a6a6" opacity="0.4"/>
<rect x="1134" y="324" width="6" height="6" fill="#a6a6a6" opacity="0.4"/>
<rect x="923" y="596" width="4" height="4" fill="#b4b4b3" opacity="0.4"/>
<rect x="396" y="654" width="4" height="4" fill="#a4a5a7" opacity="0.4"/>
<rect x="409" y="93" width="7" height="7" fill="#b8b8b6" opacity="0.4"/>
<rect x="356" y="531" width="7" height="7" fill="#aaaaa9" opacity="0.4"/>
<rect x="1274" y="434" width="5" height="5" fill="#b4b4b3" opacity="0.4"/>
<rect x="1427" y="631" width="6" height="6" fill="#b8b8b6" opacity="0.4"/>
<rect x="673" y="410" width="5" height="5" fill="#a6a6a6" opacity="0.4"/>
<rect x="1416" y="231" width="4" height="4" fill="#aaaaa9" opacity="0.4"/>
<rect x="649" y="216" width="7" height="7" fill="#aaaaa9" opacity="0.4"/>
<rect x="874" y="338" width="6" height="6" fill="#a6a6a6" opacity="0.4"/>
<rect x="640" y="668" width="6" height="6" fill="#b4b4b3" opacity="0.4"/>
<rect x="640" y="125" width="6" height="6" fill="#b8b8b6" opacity="0.4"/>
<rect x="1352" y="512" width="5" height="5" fill="#a4a5a7" opacity="0.4"/>
<rect x="709" y="619" width="7" height="7" fill="#b8b8b6" opacity="0.4"/>
<rect x="1337" y="438" width="6" height="6" fill="#a6a6a6" opacity="0.4"/>
<rect x="304" y="78" width="6" height="6" fill="#a4a5a7" opacity="0.4"/>
<rect x="334" y="190" width="6" height="6" fill="#b4b4b3" opacity="0.4"/>
<rect x="522" y="183" width="7" height="7" fill="#a4a5a7" opacity="0.4"/>
<rect x="755" y="565" width="5" height="5" fill="#b8b8b6" opacity="0.4"/>
<rect x="360" y="348" width="4" height="4" fill="#a6a6a6" opacity="0.4"/>
<rect x="449" y="677" width="7" height="7" fill="#a4a5a7" opacity="0.4"/>
<rect x="498" y="709" width="5" height="5" fill="#a4a5a7" opacity="0.4"/>
<rect x="859" y="525" width="5" height="5" fill="#aaaaa9" opacity="0.4"/>
<rect x="901" y="145" width="4" height="4" fill="#b8b8b6" opacity="0.4"/>
<rect x="823" y="177" width="4" height="4" fill="#a6a6a6" opacity="0.4"/>
<rect x="765" y="514" width="7" height="7" fill="#aaaaa9" opacity="0.4"/>
<rect x="1073" y="142" width="5" height="5" fill="#a6a6a6" opacity="0.4"/>
<rect x="341" y="645" width="5" height="5" fill="#aaaaa9" opacity="0.4"/>
<rect x="1287" y="616" width="5" height="5" fill="#a4a5a7" opacity="0.4"/>
<rect x="645" y="218" width="5" height="5" fill="#a4a5a7" opacity="0.4"/>
<rect x="466" y="618" width="7" height="7" fill="#b8b8b6" opacity="0.4"/>
<rect x="1400" y="270" width="6" height="6" fill="#b8b8b6" opacity="0.4"/>
<rect x="548" y="431" width="5" height="5" fill="#a6a6a6" opacity="0.4"/>
<rect x="821" y="565" width="6" height="6" fill="#b4b4b3" opacity="0.4"/>
<rect x="1065" y="112" width="4" height="4" fill="#aaaaa9" opacity="0.4"/>
<rect x="1040" y="183" width="4" height="4" fill="#a4a5a7" opacity="0.4"/>
<rect x="624" y="285" width="4" height="4" fill="#b4b4b3" opacity="0.4"/>
<rect x="522" y="235" width="4" height="4" fill="#aaaaa9" opacity="0.4"/>
<rect x="523" y="375" width="6" height="6" fill="#b8b8b6" opacity="0.4"/>
<rect x="331" y="470" width="6" height="6" fill="#a6a6a6" opacity="0.4"/>
<rect x="515" y="140" width="4" height="4" fill="#aaaaa9" opacity="0.4"/>
<rect x="489" y="286" width="5" height="5" fill="#b4b4b3" opacity="0.4"/>
<rect x="668" y="297" width="6" height="6" fill="#a6a6a6" opacity="0.4"/>
<rect x="1212" y="562" width="4" height="4" fill="#b4b4b3" opacity="0.4"/>
<rect x="1142" y="111" width="7" height="7" fill="#b8b8b6" opacity="0.4"/>
<rect x="818" y="53" width="4" height="4" fill="#a4a5a7" opacity="0.4"/>
<rect x="763" y="542" width="6" height="6" fill="#b4b4b3" opacity="0.4"/>
<rect x="381" y="565" width="6" height="6" fill="#b8b8b6" opacity="0.4"/>
<rect x="487" y="723" width="4" height="4" fill="#aaaaa9" opacity="0.4"/>
<rect x="1250" y="673" width="6" height="6" fill="#b4b4b3" opacity="0.4"/>
<rect x="463" y="97" width="4" height="4" fill="#b8b8b6" opacity="0.4"/>
<rect x="468" y="228" width="4" height="4" fill="#a4a5a7" opacity="0.4"/>
<rect x="662" y="210" width="4" height="4" fill="#a4a5a7" opacity="0.4"/>
<rect x="869" y="299" width="6" height="6" fill="#b8b8b6" opacity="0.4"/>
<rect x="752" y="178" width="5" height="5" fill="#b8b8b6" opacity="0.4"/>
<rect x="1119" y="423" width="4" height="4" fill="#b8b8b6" opacity="0.4"/>
<rect x="311" y="724" width="5" height="5" fill="#b4b4b3" opacity="0.4"/>
<rect x="1076" y="197" width="5" height="5" fill="#b8b8b6" opacity="0.4"/>
<rect x="1249" y="765" width="7" height="7" fill="#b4b4b3" opacity="0.4"/>
<rect x="1003" y="109" width="4" height="4" fill="#a4a5a7" opacity="0.4"/>
<rect x="390" y="455" width="5" height="5" fill="#b8b8b6" opacity="0.4"/>
<rect x="970" y="607" width="5" height="5" fill="#a6a6a6" opacity="0.4"/>
<rect x="377" y="277" width="4" height="4" fill="#a6a6a6" opacity="0.4"/>
<rect x="538" y="598" width="6" height="6" fill="#b8b8b6" opacity="0.4"/>
<rect x="682" y="626" width="5" height="5" fill="#b4b4b3" opacity="0.4"/>
<rect x="306" y="722" width="7" height="7" fill="#b4b4b3" opacity="0.4"/>
<rect x="331" y="610" width="5" height="5" fill="#b8b8b6" opacity="0.4"/>
<rect x="466" y="282" width="5" height="5" fill="#b8b8b6" opacity="0.4"/>
<rect x="519" y="190" width="4" height="4" fill="#aaaaa9" opacity="0.4"/>
<rect x="1426" y="612" width="4" height="4" fill="#b4b4b3" opacity="0.4"/>
<rect x="858" y="603" width="4" height="4" fill="#a6a6a6" opacity="0.4"/>
<rect x="520" y="489" width="7" height="7" fill="#aaaaa9" opacity="0.4"/>
<rect x="399" y="557" width="5" height="5" fill="#aaaaa9" opacity="0.4"/>
<rect x="1206" y="392" width="5" height="5" fill="#b4b4b3" opacity="0.4"/>
<rect x="588" y="540" width="4" height="4" fill="#aaaaa9" opacity="0.4"/>
<rect x="1140" y="642" width="5" height="5" fill="#a4a5a7" opacity="0.4"/>
<rect x="788" y="637" width="6" height="6" fill="#a4a5a7" opacity="0.4"/>
<rect x="1143" y="466" width="4" height="4" fill="#a6a6a6" opacity="0.4"/>
<rect x="1393" y="609" width="5" height="5" fill="#aaaaa9" opacity="0.4"/>
<rect x="567" y="462" width="5" height="5" fill="#a4a5a7" opacity="0.4"/>
<rect x="1290" y="452" width="7" height="7" fill="#a6a6a6" opacity="0.4"/>
<rect x="1047" y="319" width="7" height="7" fill="#aaaaa9" opacity="0.4"/>
<rect x="755" y="92" width="7" height="7" fill="#aaaaa9" opacity="0.4"/>
<rect x="1194" y="31" width="4" height="4" fill="#b4b4b3" opacity="0.4"/>
<rect x="1373" y="676" width="7" height="7" fill="#b4b4b3" opacity="0.4"/>
<rect x="760" y="249" width="6" height="6" fill="#b8b8b6" opacity="0.4"/>
<rect x="913" y="89" width="7" height="7" fill="#b4b4b3" opacity="0.4"/>
<rect x="997" y="244" width="6" height="6" fill="#a6a6a6" opacity="0.4"/>
<rect x="507" y="684" width="5" height="5" fill="#b4b4b3" opacity="0.4"/>
<rect x="431" y="532" width="7" height="7" fill="#a6a6a6" opacity="0.4"/>
<rect x="1228" y="164" width="6" height="6" fill="#aaaaa9" opacity="0.4"/>
<rect x="1381" y="295" width="6" height="6" fill="#b8b8b6" opacity="0.4"/>
<rect x="1304" y="478" width="6" height="6" fill="#b4b4b3" opacity="0.4"/>
<rect x="861" y="733" width="5" height="5" fill="#a4a5a7" opacity="0.4"/>
<rect x="1266" y="743" width="4" height="4" fill="#b4b4b3" opacity="0.4"/>
<rect x="294" y="157" width="7" height="7" fill="#b8b8b6" opacity="0.4"/>
<rect x="936" y="513" width="4" height="4" fill="#aaaaa9" opacity="0.4"/>
<rect x="1411" y="570" width="7" height="7" fill="#a4a5a7" opacity="0.4"/>
<rect x="447" y="584" width="7" height="7" fill="#aaaaa9" opacity="0.4"/>
<rect x="380" y="489" width="6" height="6" fill="#b4b4b3" opacity="0.4"/>
<rect x="1381" y="295" width="4" height="4" fill="#b4b4b3" opacity="0.4"/>
<rect x="1324" y="396" width="4" height="4" fill="#aaaaa9" opacity="0.4"/>
<rect x="359" y="644" width="7" height="7" fill="#a6a6a6" opacity="0.4"/>
<rect x="802" y="582" width="7" height="7" fill="#b8b8b6" opacity="0.4"/>
<rect x="334" y="268" width="4" height="4" fill="#b8b8b6" opacity="0.4"/>
<rect x="1376" y="686" width="5" height="5" fill="#b8b8b6" opacity="0.4"/>
<rect x="961" y="454" width="7" height="7" fill="#a6a6a6" opacity="0.4"/>
<rect x="491" y="463" width="5" height="5" fill="#aaaaa9" opacity="0.4"/>
<rect x="624" y="430" width="7" height="7" fill="#b4b4b3" opacity="0.4"/>
<rect x="1030" y="622" width="7" height="7" fill="#b4b4b3" opacity="0.4"/>
<rect x="1387" y="552" width="6" height="6" fill="#aaaaa9" opacity="0.4"/>
<rect x="478" y="452" width="6" height="6" fill="#a6a6a6" opacity="0.4"/>
<rect x="1308" y="176" width="5" height="5" fill="#a6a6a6" opacity="0.4"/>
<rect x="644" y="412" width="4" height="4" fill="#aaaaa9" opacity="0.4"/>
<rect x="961" y="745" width="5" height="5" fill="#aaaaa9" opacity="0.4"/>
<rect x="603" y="686" width="5" height="5" fill="#b4b4b3" opacity="0.4"/>
<rect x="999" y="713" width="4" height="4" fill="#b4b4b3" opacity="0.4"/>
<rect x="1068" y="295" width="7" height="7" fill="#aaaaa9" opacity="0.4"/>
<rect x="1194" y="377" width="5" height="5" fill="#a6a6a6" opacity="0.4"/>
<rect x="1345" y="488" width="7" height="7" fill="#a4a5a7" opacity="0.4"/>
<rect x="1017" y="603" width="4" height="4" fill="#aaaaa9" opacity="0.4"/>
<rect x="467" y="587" width="7" height="7" fill="#b4b4b3" opacity="0.4"/>
<rect x="1148" y="231" width="7" height="7" fill="#aaaaa9" opacity="0.4"/>
<rect x="895" y="241" width="6" height="6" fill="#a6a6a6" opacity="0.4"/>
<rect x="804" y="37" width="6" height="6" fill="#a4a5a7" opacity="0.4"/>
<rect x="695" y="722" width="5" height="5" fill="#aaaaa9" opacity="0.4"/>
<rect x="1299" y="674" width="7" height="7" fill="#a6a6a6" opacity="0.4"/>
<rect x="1241" y="553" width="5" height="5" fill="#aaaaa9" opacity="0.4"/>
<rect x="1026" y="742" width="7" height="7" fill="#a6a6a6" opacity="0.4"/>
<rect x="742" y="722" width="7" height="7" fill="#aaaaa9" opacity="0.4"/>
<rect x="740" y="623" width="5" height="5" fill="#aaaaa9" opacity="0.4"/>
<rect x="1102" y="134" width="7" height="7" fill="#a4a5a7" opacity="0.4"/>
<rect x="1054" y="693" width="5" height="5" fill="#b8b8b6" opacity="0.4"/>
<rect x="678" y="77" width="4" height="4" fill="#b4b4b3" opacity="0.4"/>
<rect x="864" y="657" width="7" height="7" fill="#b8b8b6" opacity="0.4"/>
<rect x="752" y="451" width="5" height="5" fill="#aaaaa9" opacity="0.4"/>
<rect x="466" y="524" width="4" height="4" fill="#b8b8b6" opacity="0.4"/>
<rect x="1314" y="691" width="6" height="6" fill="#b4b4b3" opacity="0.4"/>
<rect x="443" y="548" width="6" height="6" fill="#b4b4b3" opacity="0.4"/>
<rect x="1102" y="597" width="6" height="6" fill="#a4a5a7" opacity="0.4"/>
<rect x="984" y="695" width="4" height="4" fill="#aaaaa9" opacity="0.4"/>
<rect x="702" y="448" width="6" height="6" fill="#a6a6a6" opacity="0.4"/>
<rect x="320" y="410" width="6" height="6" fill="#a6a6a6" opacity="0.4"/>
<rect x="542" y="366" width="7" height="7" fill="#b8b8b6" opacity="0.4"/>
<rect x="606" y="72" width="4" height="4" fill="#b4b4b3" opacity="0.4"/>
<rect x="339" y="639" width="7" height="7" fill="#a6a6a6" opacity="0.4"/>
<rect x="549" y="493" width="6" height="6" fill="#aaaaa9" opacity="0.4"/>
<rect x="896" y="198" width="5" height="5" fill="#a4a5a7" opacity="0.4"/>
<rect x="614" y="747" width="4" height="4" fill="#a4a5a7" opacity="0.4"/>
<rect x="547" y="156" width="6" height="6" fill="#a4a5a7" opacity="0.4"/>
<rect x="775" y="75" width="4" height="4" fill="#aaaaa9" opacity="0.4"/>
<rect x="958" y="323" width="7" height="7" fill="#a4a5a7" opacity="0.4"/>
<rect x="551" y="668" width="6" height="6" fill="#a6a6a6" opacity="0.4"/>
<rect x="1385" y="271" width="4" height="4" fill="#aaaaa9" opacity="0.4"/>
<rect x="1022" y="453" width="7" height="7" fill="#b4b4b3" opacity="0.4"/>
<rect x="1394" y="678" width="7" height="7" fill="#a4a5a7" opacity="0.4"/>
<rect x="510" y="482" width="7" height="7" fill="#a6a6a6" opacity="0.4"/>
<rect x="482" y="589" width="4" height="4" fill="#a6a6a6" opacity="0.4"/>
<rect x="792" y="174" width="6" height="6" fill="#b8b8b6" opacity="0.4"/>
<rect x="522" y="586" width="4" height="4" fill="#aaaaa9" opacity="0.4"/>
<rect x="1338" y="561" width="4" height="4" fill="#a6a6a6" opacity="0.4"/>
<rect x="696" y="336" width="6" height="6" fill="#a4a5a7" opacity="0.4"/>
<rect x="927" y="491" width="6" height="6" fill="#a4a5a7" opacity="0.4"/>
<rect x="1419" y="254" width="5" height="5" fill="#a6a6a6" opacity="0.4"/>
<rect x="1079" y="339" width="7" height="7" fill="#a6a6a6" opacity="0.4"/>
<rect x="1171" y="281" width="6" height="6" fill="#b8b8b6" opacity="0.4"/>
<rect x="1176" y="376" width="6" height="6" fill="#a6a6a6" opacity="0.4"/>
<rect x="1196" y="379" width="4" height="4" fill="#b8b8b6" opacity="0.4"/>
<rect x="894" y="213" width="5" height="5" fill="#b4b4b3" opacity="0.4"/>
<rect x="696" y="512" width="6" height="6" fill="#b8b8b6" opacity="0.4"/>
<rect x="1367" y="752" width="7" height="7" fill="#b4b4b3" opacity="0.4"/>
<rect x="477" y="690" width="5" height="5" fill="#b4b4b3" opacity="0.4"/>
<rect x="451" y="110" width="7" height="7" fill="#a4a5a7" opacity="0.4"/>
<rect x="325" y="628" width="7" height="7" fill="#a6a6a6" opacity="0.4"/>
<rect x="1180" y="179" width="4" height="4" fill="#a4a5a7" opacity="0.4"/>
<rect x="1268" y="278" width="7" height="7" fill="#a4a5a7" opacity="0.4"/>
<rect x="844" y="500" width="4" height="4" fill="#b8b8b6" opacity="0.4"/>
<rect x="570" y="696" width="4" height="4" fill="#b4b4b3" opacity="0.4"/>
<rect x="405" y="676" width="7" height="7" fill="#b8b8b6" opacity="0.4"/>
<rect x="812" y="460" width="4" height="4" fill="#b4b4b3" opacity="0.4"/>
<rect x="941" y="559" width="5" height="5" fill="#b4b4b3" opacity="0.4"/>
<rect x="748" y="525" width="7" height="7" fill="#b8b8b6" opacity="0.4"/>
<rect x="1079" y="376" width="4" height="4" fill="#b8b8b6" opacity="0.4"/>
<rect x="1326" y="470" width="5" height="5" fill="#a6a6a6" opacity="0.4"/>
<rect x="1202" y="684" width="7" height="7" fill="#a6a6a6" opacity="0.4"/>
<rect x="937" y="578" width="4" height="4" fill="#b8b8b6" opacity="0.4"/>
<rect x="569" y="698" width="4" height="4" fill="#b8b8b6" opacity="0.4"/>
<rect x="337" y="64" width="5" height="5" fill="#b8b8b6" opacity="0.4"/>
<rect x="1174" y="61" width="7" height="7" fill="#a4a5a7" opacity="0.4"/>
<rect x="592" y="141" width="7" height="7" fill="#a6a6a6" opacity="0.4"/>
<rect x="1153" y="105" width="5" height="5" fill="#a6a6a6" opacity="0.4"/>
<rect x="457" y="418" width="6" height="6" fill="#a4a5a7" opacity="0.4"/>
<rect x="414" y="609" width="4" height="4" fill="#b4b4b3" opacity="0.4"/>
<rect x="376" y="50" width="4" height="4" fill="#a6a6a6" opacity="0.4"/>
<rect x="1095" y="516" width="6" height="6" fill="#a4a5a7" opacity="0.4"/>
<rect x="813" y="523" width="5" height="5" fill="#a4a5a7" opacity="0.4"/>
<rect x="321" y="640" width="5" height="5" fill="#b4b4b3" opacity="0.4"/>
<rect x="433" y="508" width="7" height="7" fill="#b8b8b6" opacity="0.4"/>
<rect x="1410" y="480" width="6" height="6" fill="#a6a6a6" opacity="0.4"/>
<rect x="1063" y="93" width="4" height="4" fill="#b8b8b6" opacity="0.4"/>
<rect x="396" y="230" width="6" height="6" fill="#aaaaa9" opacity="0.4"/>
<rect x="462" y="476" width="5" height="5" fill="#aaaaa9" opacity="0.4"/>
<rect x="302" y="83" width="5" height="5" fill="#a6a6a6" opacity="0.4"/>
<rect x="884" y="364" width="5" height="5" fill="#b4b4b3" opacity="0.4"/>
<rect x="1334" y="569" width="4" height="4" fill="#a6a6a6" opacity="0.4"/>
<rect x="1244" y="557" width="5" height="5" fill="#a6a6a6" opacity="0.4"/>
<rect x="1259" y="346" width="5" height="5" fill="#a6a6a6" opacity="0.4"/>
<rect x="996" y="245" width="5" height="5" fill="#aaaaa9" opacity="0.4"/>
<rect x="581" y="250" width="4" height="4" fill="#aaaaa9" opacity="0.4"/>
<rect x="662" y="98" width="5" height="5" fill="#b4b4b3" opacity="0.4"/>
<rect x="1407" y="511" width="6" height="6" fill="#b4b4b3" opacity="0.4"/>
<rect x="605" y="212" width="4" height="4" fill="#b4b4b3" opacity="0.4"/>
<rect x="681" y="429" width="6" height="6" fill="#aaaaa9" opacity="0.4"/>
<rect x="296" y="597" width="6" height="6" fill="#b8b8b6" opacity="0.4"/>
<rect x="1196" y="421" width="4" height="4" fill="#a6a6a6" opacity="0.4"/>
<rect x="1231" y="259" width="6" height="6" fill="#aaaaa9" opacity="0.4"/>
<rect x="367" y="118" width="5" height="5" fill="#b4b4b3" opacity="0.4"/>
<rect x="534" y="67" width="5" height="5" fill="#a4a5a7" opacity="0.4"/>
<rect x="1359" y="329" width="4" height="4" fill="#a4a5a7" opacity="0.4"/>
<rect x="1029" y="189" width="6" height="6" fill="#a6a6a6" opacity="0.4"/>
<rect x="784" y="115" width="7" height="7" fill="#b8b8b6" opacity="0.4"/>
<rect x="991" y="151" width="7" height="7" fill="#aaaaa9" opacity="0.4"/>
<rect x="576" y="218" width="4" height="4" fill="#a6a6a6" opacity="0.4"/>
<rect x="1078" y="182" width="5" height="5" fill="#aaaaa9" opacity="0.4"/>
<rect x="1039" y="469" width="6" height="6" fill="#b4b4b3" opacity="0.4"/>
<rect x="382" y="566" width="4" height="4" fill="#a4a5a7" opacity="0.4"/>
<rect x="377" y="83" width="4" height="4" fill="#a4a5a7" opacity="0.4"/>
<rect x="1114" y="507" width="6" height="6" fill="#a4a5a7" opacity="0.4"/>
<rect x="1339" y="360" width="6" height="6" fill="#a6a6a6" opacity="0.4"/>
<rect x="638" y="330" width="7" height="7" fill="#b8b8b6" opacity="0.4"/>
<rect x="1417" y="676" width="6" height="6" fill="#b4b4b3" opacity="0.4"/>
<rect x="660" y="180" width="5" height="5" fill="#b4b4b3" opacity="0.4"/>
<rect x="415" y="182" width="6" height="6" fill="#aaaaa9" opacity="0.4"/>
<rect x="609" y="35" width="4" height="4" fill="#b8b8b6" opacity="0.4"/>
<rect x="1321" y="145" width="6" height="6" fill="#a4a5a7" opacity="0.4"/>
<rect x="1044" y="161" width="7" height="7" fill="#b8b8b6" opacity="0.4"/>
<rect x="404" y="753" width="6" height="6" fill="#b4b4b3" opacity="0.4"/>
<rect x="1034" y="448" width="4" height="4" fill="#b8b8b6" opacity="0.4"/>
<rect x="368" y="39" width="6" height="6" fill="#b8b8b6" opacity="0.4"/>
<rect x="707" y="561" width="6" height="6" fill="#b8b8b6" opacity="0.4"/>
<rect x="1188" y="214" width="5" height="5" fill="#aaaaa9" opacity="0.4"/>
<rect x="888" y="110" width="5" height="5" fill="#b8b8b6" opacity="0.4"/>
<rect x="618" y="309" width="5" height="5" fill="#a6a6a6" opacity="0.4"/>
<rect x="1030" y="682" width="6" height="6" fill="#b4b4b3" opacity="0.4"/>
<rect x="567" y="687" width="4" height="4" fill="#aaaaa9" opacity="0.4"/>
<rect x="351" y="518" width="5" height="5" fill="#aaaaa9" opacity="0.4"/>
<rect x="614" y="377" width="4" height="4" fill="#b4b4b3" opacity="0.4"/>
<rect x="419" y="438" width="4" height="4" fill="#b4b4b3" opacity="0.4"/>
<rect x="753" y="386" width="5" height="5" fill="#b8b8b6" opacity="0.4"/>
<rect x="777" y="73" width="4" height="4" fill="#b8b8b6" opacity="0.4"/>
<rect x="596" y="356" width="6" height="6" fill="#b8b8b6" opacity="0.4"/>
<rect x="924" y="81" width="7" height="7" fill="#b8b8b6" opacity="0.4"/>
<rect x="1139" y="443" width="4" height="4" fill="#b4b4b3" opacity="0.4"/>
<rect x="362" y="347" width="5" height="5" fill="#a6a6a6" opacity="0.4"/>
<rect x="886" y="405" width="5" height="5" fill="#aaaaa9" opacity="0.4"/>
<rect x="409" y="380" width="7" height="7" fill="#b4b4b3" opacity="0.4"/>
<rect x="1185" y="125" width="6" height="6" fill="#b4b4b3" opacity="0.4"/>
<rect x="405" y="235" width="4" height="4" fill="#aaaaa9" opacity="0.4"/>
<rect x="430" y="754" width="6" height="6" fill="#b4b4b3" opacity="0.4"/>
<rect x="498" y="36" width="4" height="4" fill="#a4a5a7" opacity="0.4"/>
<rect x="1024" y="535" width="5" height="5" fill="#a6a6a6" opacity="0.4"/>
<rect x="1171" y="518" width="6" height="6" fill="#b8b8b6" opacity="0.4"/>
<rect x="459" y="621" width="4" height="4" fill="#aaaaa9" opacity="0.4"/>
<rect x="1267" y="299" width="5" height="5" fill="#b8b8b6" opacity="0.4"/>
<rect x="312" y="366" width="7" height="7" fill="#a6a6a6" opacity="0.4"/>
<rect x="540" y="55" width="5" height="5" fill="#b4b4b3" opacity="0.4"/>
<rect x="1247" y="253" width="5" height="5" fill="#aaaaa9" opacity="0.4"/>
<rect x="1360" y="325" width="4" height="4" fill="#b8b8b6" opacity="0.4"/>
<rect x="703" y="385" width="7" height="7" fill="#a6a6a6" opacity="0.4"/>
<rect x="718" y="658" width="5" height="5" fill="#b4b4b3" opacity="0.4"/>
<rect x="999" y="188" width="5" height="5" fill="#b4b4b3" opacity="0.4"/>
<rect x="646" y="607" width="5" height="5" fill="#aaaaa9" opacity="0.4"/>
<rect x="1401" y="586" width="7" height="7" fill="#a6a6a6" opacity="0.4"/>
<rect x="495" y="333" width="6" height="6" fill="#a6a6a6" opacity="0.4"/>
<rect x="1168" y="204" width="5" height="5" fill="#a6a6a6" opacity="0.4"/>
<rect x="984" y="218" width="7" height="7" fill="#b4b4b3" opacity="0.4"/>
<rect x="932" y="553" width="6" height="6" fill="#b8b8b6" opacity="0.4"/>
<rect x="567" y="117" width="5" height="5" fill="#b4b4b3" opacity="0.4"/>
<rect x="1327" y="765" width="6" height="6" fill="#b8b8b6" opacity="0.4"/>
<rect x="1300" y="70" width="7" height="7" fill="#b8b8b6" opacity="0.4"/>
<rect x="484" y="460" width="7" height="7" fill="#b4b4b3" opacity="0.4"/>
<rect x="581" y="449" width="5" height="5" fill="#b8b8b6" opacity="0.4"/>
<rect x="1380" y="226" width="4" height="4" fill="#b4b4b3" opacity="0.4"/>
<rect x="353" y="703" width="4" height="4" fill="#a6a6a6" opacity="0.4"/>
<rect x="1320" y="80" width="5" height="5" fill="#b8b8b6" opacity="0.4"/>
<rect x="771" y="419" width="4" height="4" fill="#aaaaa9" opacity="0.4"/>
<rect x="801" y="397" width="6" height="6" fill="#a4a5a7" opacity="0.4"/>
<rect x="1314" y="738" width="7" height="7" fill="#b8b8b6" opacity="0.4"/>
<rect x="380" y="690" width="7" height="7" fill="#a4a5a7" opacity="0.4"/>
<rect x="500" y="539" width="5" height="5" fill="#aaaaa9" opacity="0.4"/>
<rect x="762" y="734" width="4" height="4" fill="#aaaaa9" opacity="0.4"/>
<rect x="1090" y="70" width="5" height="5" fill="#b4b4b3" opacity="0.4"/>
<rect x="1057" y="618" width="7" height="7" fill="#a6a6a6" opacity="0.4"/>
<rect x="834" y="528" width="7" height="7" fill="#b8b8b6" opacity="0.4"/>
<rect x="1382" y="608" width="7" height="7" fill="#b8b8b6" opacity="0.4"/>
<rect x="395" y="745" width="7" height="7" fill="#a4a5a7" opacity="0.4"/>
<rect x="749" y="127" width="6" height="6" fill="#b8b8b6" opacity="0.4"/>
<rect x="1129" y="293" width="6" height="6" fill="#b4b4b3" opacity="0.4"/>
<rect x="439" y="192" width="6" height="6" fill="#b8b8b6" opacity="0.4"/>
<rect x="422" y="404" width="7" height="7" fill="#b4b4b3" opacity="0.4"/>
<rect x="1028" y="375" width="6" height="6" fill="#b4b4b3" opacity="0.4"/>
<rect x="949" y="290" width="6" height="6" fill="#b4b4b3" opacity="0.4"/>
<rect x="493" y="383" width="5" height="5" fill="#a6a6a6" opacity="0.4"/>
<rect x="741" y="114" width="5" height="5" fill="#aaaaa9" opacity="0.4"/>
<rect x="1014" y="548" width="6" height="6" fill="#b8b8b6" opacity="0.4"/>
<rect x="1164" y="250" width="5" height="5" fill="#aaaaa9" opacity="0.4"/>
<rect x="1226" y="472" width="4" height="4" fill="#a4a5a7" opacity="0.4"/>
<rect x="519" y="39" width="7" height="7" fill="#a4a5a7" opacity="0.4"/>
<rect x="1118" y="229" width="4" height="4" fill="#a6a6a6" opacity="0.4"/>
<rect x="1244" y="91" width="4" height="4" fill="#b8b8b6" opacity="0.4"/>
<rect x="491" y="157" width="4" height="4" fill="#b8b8b6" opacity="0.4"/>
<rect x="321" y="89" width="5" height="5" fill="#a6a6a6" opacity="0.4"/>
<rect x="463" y="275" width="6" height="6" fill="#a4a5a7" opacity="0.4"/>
<rect x="657" y="336" width="6" height="6" fill="#b4b4b3" opacity="0.4"/>
<rect x="672" y="712" width="5" height="5" fill="#aaaaa9" opacity="0.4"/>
<rect x="595" y="75" width="6" height="6" fill="#a6a6a6" opacity="0.4"/>
<rect x="444" y="669" width="6" height="6" fill="#aaaaa9" opacity="0.4"/>
<rect x="863" y="132" width="4" height="4" fill="#a4a5a7" opacity="0.4"/>
<rect x="1147" y="647" width="7" height="7" fill="#b4b4b3" opacity="0.4"/>
<rect x="629" y="40" width="4" height="4" fill="#aaaaa9" opacity="0.4"/>
<rect x="1204" y="98" width="5" height="5" fill="#a4a5a7" opacity="0.4"/>
<rect x="511" y="550" width="5" height="5" fill="#b4b4b3" opacity="0.4"/>
<rect x="1000" y="637" width="7" height="7" fill="#b4b4b3" opacity="0.4"/>
<rect x="451" y="170" width="5" height="5" fill="#a4a5a7" opacity="0.4"/>
<rect x="416" y="496" width="6" height="6" fill="#b8b8b6" opacity="0.4"/>
<rect x="863" y="413" width="4" height="4" fill="#aaaaa9" opacity="0.4"/>
<rect x="329" y="563" width="6" height="6" fill="#b8b8b6" opacity="0.4"/>
<rect x="534" y="558" width="5" height="5" fill="#b4b4b3" opacity="0.4"/>
<rect x="1318" y="179" width="6" height="6" fill="#aaaaa9" opacity="0.4"/>
<rect x="443" y="74" width="6" height="6" fill="#b4b4b3" opacity="0.4"/>
<rect x="1233" y="557" width="7" height="7" fill="#aaaaa9" opacity="0.4"/>
<rect x="652" y="560" width="6" height="6" fill="#a6a6a6" opacity="0.4"/>
<rect x="395" y="64" width="5" height="5" fill="#a4a5a7" opacity="0.4"/>
<rect x="466" y="716" width="7" height="7" fill="#b8b8b6" opacity="0.4"/>
<rect x="328" y="265" width="6" height="6" fill="#a4a5a7" opacity="0.4"/>
<rect x="1072" y="380" width="4" height="4" fill="#aaaaa9" opacity="0.4"/>
<rect x="415" y="80" width="7" height="7" fill="#b4b4b3" opacity="0.4"/>
<rect x="843" y="214" width="5" height="5" fill="#a4a5a7" opacity="0.4"/>
<rect x="804" y="657" width="6" height="6" fill="#b4b4b3" opacity="0.4"/>
<rect x="901" y="603" width="4" height="4" fill="#aaaaa9" opacity="0.4"/>
<rect x="413" y="364" width="5" height="5" fill="#aaaaa9" opacity="0.4"/>
<rect x="336" y="752" width="5" height="5" fill="#a4a5a7" opacity="0.4"/>
<rect x="366" y="533" width="6" height="6" fill="#a6a6a6" opacity="0.4"/>
<rect x="1040" y="657" width="7" height="7" fill="#aaaaa9" opacity="0.4"/>
<rect x="884" y="135" width="4" height="4" fill="#a6a6a6" opacity="0.4"/>
<rect x="330" y="699" width="4" height="4" fill="#b8b8b6" opacity="0.4"/>
<rect x="1089" y="261" width="7" height="7" fill="#a4a5a7" opacity="0.4"/>
<rect x="486" y="156" width="6" height="6" fill="#b4b4b3" opacity="0.4"/>
<rect x="705" y="686" width="4" height="4" fill="#b4b4b3" opacity="0.4"/>
<rect x="398" y="724" width="7" height="7" fill="#b4b4b3" opacity="0.4"/>
<rect x="551" y="164" width="7" height="7" fill="#aaaaa9" opacity="0.4"/>
<rect x="740" y="177" width="5" height="5" fill="#b8b8b6" opacity="0.4"/>
<rect x="1333" y="390" width="6" height="6" fill="#a4a5a7" opacity="0.4"/>
<rect x="1204" y="48" width="7" height="7" fill="#a4a5a7" opacity="0.4"/>
<rect x="1218" y="541" width="6" height="6" fill="#a4a5a7" opacity="0.4"/>
<rect x="650" y="566" width="5" height="5" fill="#aaaaa9" opacity="0.4"/>
<rect x="1043" y="70" width="5" height="5" fill="#a6a6a6" opacity="0.4"/>
<rect x="947" y="36" width="4" height="4" fill="#aaaaa9" opacity="0.4"/>
<rect x="1315" y="731" width="5" height="5" fill="#aaaaa9" opacity="0.4"/>
<rect x="1257" y="632" width="6" height="6" fill="#aaaaa9" opacity="0.4"/>
<rect x="636" y="484" width="7" height="7" fill="#b4b4b3" opacity="0.4"/>
<rect x="616" y="724" width="7" height="7" fill="#a6a6a6" opacity="0.4"/>
<rect x="1152" y="596" width="5" height="5" fill="#a4a5a7" opacity="0.4"/>
<rect x="1221" y="503" width="5" height="5" fill="#a6a6a6" opacity="0.4"/>
<rect x="1151" y="628" width="6" height="6" fill="#aaaaa9" opacity="0.4"/>
<rect x="726" y="648" width="5" height="5" fill="#b8b8b6" opacity="0.4"/>
<rect x="906" y="276" width="6" height="6" fill="#a6a6a6" opacity="0.4"/>
<rect x="1311" y="155" width="5" height="5" fill="#aaaaa9" opacity="0.4"/>
<rect x="1267" y="733" width="4" height="4" fill="#a4a5a7" opacity="0.4"/>
<rect x="1195" y="650" width="6" height="6" fill="#b4b4b3" opacity="0.4"/>
<rect x="828" y="369" width="6" height="6" fill="#b8b8b6" opacity="0.4"/>
<rect x="704" y="75" width="6" height="6" fill="#a6a6a6" opacity="0.4"/>
<rect x="1300" y="694" width="5" height="5" fill="#a6a6a6" opacity="0.4"/>
<rect x="714" y="482" width="4" height="4" fill="#b4b4b3" opacity="0.4"/>
<rect x="519" y="369" width="6" height="6" fill="#b4b4b3" opacity="0.4"/>
<rect x="1205" y="732" width="7" height="7" fill="#aaaaa9" opacity="0.4"/>
<rect x="656" y="283" width="6" height="6" fill="#aaaaa9" opacity="0.4"/>
<rect x="945" y="106" width="4" height="4" fill="#a4a5a7" opacity="0.4"/>
<rect x="843" y="335" width="5" height="5" fill="#b8b8b6" opacity="0.4"/>
<rect x="531" y="429" width="4" height="4" fill="#a6a6a6" opacity="0.4"/>
<rect x="818" y="448" width="5" height="5" fill="#a6a6a6" opacity="0.4"/>
<rect x="781" y="96" width="6" height="6" fill="#a4a5a7" opacity="0.4"/>
<rect x="1225" y="610" width="4" height="4" fill="#aaaaa9" opacity="0.4"/>
<rect x="546" y="578" width="5" height="5" fill="#a6a6a6" opacity="0.4"/>
<rect x="710" y="723" width="5" height="5" fill="#b4b4b3" opacity="0.4"/>
<rect x="726" y="552" width="5" height="5" fill="#b4b4b3" opacity="0.4"/>
<rect x="665" y="760" width="5" height="5" fill="#a4a5a7" opacity="0.4"/>
<rect x="852" y="583" width="5" height="5" fill="#a6a6a6" opacity="0.4"/>
<rect x="981" y="307" width="5" height="5" fill="#a4a5a7" opacity="0.4"/>
<rect x="502" y="700" width="4" height="4" fill="#a4a5a7" opacity="0.4"/>
<rect x="1280" y="295" width="5" height="5" fill="#a6a6a6" opacity="0.4"/>
<rect x="867" y="693" width="7" height="7" fill="#b8b8b6" opacity="0.4"/>
<rect x="1353" y="441" width="5" height="5" fill="#b8b8b6" opacity="0.4"/>
<rect x="1010" y="621" width="5" height="5" fill="#b4b4b3" opacity="0.4"/>
<rect x="977" y="219" width="5" height="5" fill="#aaaaa9" opacity="0.4"/>
<rect x="771" y="407" width="4" height="4" fill="#b4b4b3" opacity="0.4"/>
<rect x="399" y="32" width="5" height="5" fill="#aaaaa9" opacity="0.4"/>
<rect x="1143" y="203" width="5" height="5" fill="#aaaaa9" opacity="0.4"/>
<rect x="880" y="157" width="5" height="5" fill="#a4a5a7" opacity="0.4"/>
<rect x="1320" y="177" width="4" height="4" fill="#a4a5a7" opacity="0.4"/>
<rect x="1144" y="554" width="6" height="6" fill="#b8b8b6" opacity="0.4"/>
<rect x="1243" y="341" width="4" height="4" fill="#a4a5a7" opacity="0.4"/>
<rect x="848" y="29" width="4" height="4" fill="#a6a6a6" opacity="0.4"/>
<rect x="1313" y="441" width="5" height="5" fill="#b4b4b3" opacity="0.4"/>
<rect x="657" y="155" width="6" height="6" fill="#b8b8b6" opacity="0.4"/>
<rect x="757" y="561" width="5" height="5" fill="#b8b8b6" opacity="0.4"/>
<rect x="477" y="331" width="7" height="7" fill="#a4a5a7" opacity="0.4"/>
<rect x="638" y="148" width="7" height="7" fill="#b8b8b6" opacity="0.4"/>
<rect x="390" y="171" width="4" height="4" fill="#aaaaa9" opacity="0.4"/>
<rect x="867" y="163" width="7" height="7" fill="#b4b4b3" opacity="0.4"/>
<rect x="1166" y="465" width="6" height="6" fill="#b4b4b3" opacity="0.4"/>
<rect x="829" y="174" width="5" height="5" fill="#a4a5a7" opacity="0.4"/>
<rect x="862" y="200" width="7" height="7" fill="#aaaaa9" opacity="0.4"/>
<rect x="1392" y="326" width="7" height="7" fill="#aaaaa9" opacity="0.4"/>
<rect x="675" y="548" width="5" height="5" fill="#b4b4b3" opacity="0.4"/>
<rect x="822" y="644" width="4" height="4" fill="#a4a5a7" opacity="0.4"/>
<rect x="341" y="607" width="6" height="6" fill="#b4b4b3" opacity="0.4"/>
<rect x="872" y="554" width="7" height="7" fill="#b4b4b3" opacity="0.4"/>
<rect x="997" y="143" width="5" height="5" fill="#a6a6a6" opacity="0.4"/>
<rect x="1005" y="528" width="6" height="6" fill="#b4b4b3" opacity="0.4"/>
<rect x="964" y="528" width="5" height="5" fill="#aaaaa9" opacity="0.4"/>
<rect x="918" y="325" width="6" height="6" fill="#b8b8b6" opacity="0.4"/>
<rect x="425" y="690" width="6" height="6" fill="#a6a6a6" opacity="0.4"/>
<rect x="1209" y="353" width="6" height="6" fill="#aaaaa9" opacity="0.4"/>
<rect x="886" y="43" width="6" height="6" fill="#a4a5a7" opacity="0.4"/>
<rect x="1019" y="380" width="6" height="6" fill="#aaaaa9" opacity="0.4"/>
<rect x="733" y="478" width="4" height="4" fill="#aaaaa9" opacity="0.4"/>
<rect x="715" y="314" width="4" height="4" fill="#aaaaa9" opacity="0.4"/>
<rect x="607" y="273" width="5" height="5" fill="#b4b4b3" opacity="0.4"/>
<rect x="1360" y="306" width="5" height="5" fill="#a6a6a6" opacity="0.4"/>
<rect x="532" y="572" width="5" height="5" fill="#b8b8b6" opacity="0.4"/>
<rect x="647" y="190" width="6" height="6" fill="#b4b4b3" opacity="0.4"/>
<rect x="432" y="745" width="5" height="5" fill="#a6a6a6" opacity="0.4"/>
<rect x="919" y="708" width="5" height="5" fill="#a6a6a6" opacity="0.4"/>
<rect x="787" y="170" width="7" height="7" fill="#b4b4b3" opacity="0.4"/>
<rect x="773" y="493" width="5" height="5" fill="#b8b8b6" opacity="0.4"/>
<rect x="1403" y="56" width="5" height="5" fill="#a6a6a6" opacity="0.4"/>
<rect x="435" y="44" width="4" height="4" fill="#b8b8b6" opacity="0.4"/>
<rect x="820" y="107" width="6" height="6" fill="#b8b8b6" opacity="0.4"/>
<rect x="1057" y="744" width="4" height="4" fill="#aaaaa9" opacity="0.4"/>
<rect x="1405" y="349" width="7" height="7" fill="#b4b4b3" opacity="0.4"/>
<rect x="582" y="200" width="5" height="5" fill="#a6a6a6" opacity="0.4"/>
<rect x="482" y="687" width="4" height="4" fill="#aaaaa9" opacity="0.4"/>
<rect x="800" y="487" width="7" height="7" fill="#a6a6a6" opacity="0.4"/>
<rect x="915" y="681" width="7" height="7" fill="#a6a6a6" opacity="0.4"/>
<rect x="792" y="45" width="7" height="7" fill="#aaaaa9" opacity="0.4"/>
<rect x="874" y="137" width="5" height="5" fill="#a6a6a6" opacity="0.4"/>
<rect x="858" y="536" width="4" height="4" fill="#b8b8b6" opacity="0.4"/>
<rect x="862" y="709" width="4" height="4" fill="#a4a5a7" opacity="0.4"/>
<rect x="1252" y="295" width="7" height="7" fill="#b8b8b6" opacity="0.4"/>
<rect x="1121" y="330" width="5" height="5" fill="#b4b4b3" opacity="0.4"/>
<rect x="653" y="306" width="5" height="5" fill="#aaaaa9" opacity="0.4"/>
<rect x="1193" y="610" width="6" height="6" fill="#a6a6a6" opacity="0.4"/>
<rect x="655" y="587" width="6" height="6" fill="#aaaaa9" opacity="0.4"/>
<rect x="474" y="661" width="6" height="6" fill="#b4b4b3" opacity="0.4"/>
<rect x="1268" y="758" width="4" height="4" fill="#b4b4b3" opacity="0.4"/>
<rect x="463" y="590" width="7" height="7" fill="#a4a5a7" opacity="0.4"/>
<rect x="1324" y="461" width="4" height="4" fill="#b4b4b3" opacity="0.4"/>
<rect x="393" y="601" width="7" height="7" fill="#a6a6a6" opacity="0.4"/>
<rect x="608" y="112" width="7" height="7" fill="#b4b4b3" opacity="0.4"/>
<rect x="1296" y="625" width="7" height="7" fill="#a6a6a6" opacity="0.4"/>
<rect x="1030" y="100" width="6" height="6" fill="#b4b4b3" opacity="0.4"/>
<rect x="537" y="511" width="6" height="6" fill="#aaaaa9" opacity="0.4"/>
<rect x="527" y="403" width="7" height="7" fill="#a4a5a7" opacity="0.4"/>
<rect x="1167" y="539" width="7" height="7" fill="#aaaaa9" opacity="0.4"/>
<rect x="1024" y="262" width="4" height="4" fill="#b4b4b3" opacity="0.4"/>
<rect x="347" y="645" width="4" height="4" fill="#aaaaa9" opacity="0.4"/>
<rect x="977" y="666" width="6" height="6" fill="#b8b8b6" opacity="0.4"/>
<rect x="1017" y="306" width="6" height="6" fill="#b8b8b6" opacity="0.4"/>
<rect x="1219" y="53" width="4" height="4" fill="#b4b4b3" opacity="0.4"/>
<rect x="393" y="656" width="5" height="5" fill="#a6a6a6" opacity="0.4"/>
<rect x="821" y="374" width="6" height="6" fill="#a6a6a6" opacity="0.4"/>
<rect x="684" y="716" width="5" height="5" fill="#b8b8b6" opacity="0.4"/>
<rect x="1026" y="587" width="6" height="6" fill="#b8b8b6" opacity="0.4"/>
<rect x="676" y="149" width="7" height="7" fill="#b8b8b6" opacity="0.4"/>
<rect x="1267" y="193" width="4" height="4" fill="#aaaaa9" opacity="0.4"/>
<rect x="545" y="697" width="6" height="6" fill="#a4a5a7" opacity="0.4"/>
<rect x="1396" y="597" width="7" height="7" fill="#b4b4b3" opacity="0.4"/>
<rect x="535" y="335" width="6" height="6" fill="#b4b4b3" opacity="0.4"/>
<rect x="1068" y="578" width="7" height="7" fill="#b8b8b6" opacity="0.4"/>
<rect x="840" y="419" width="6" height="6" fill="#b8b8b6" opacity="0.4"/>
<rect x="476" y="533" width="6" height="6" fill="#a4a5a7" opacity="0.4"/>
<rect x="754" y="152" width="7" height="7" fill="#b8b8b6" opacity="0.4"/>
<rect x="827" y="717" width="6" height="6" fill="#a4a5a7" opacity="0.4"/>
<rect x="406" y="395" width="6" height="6" fill="#a4a5a7" opacity="0.4"/>
<rect x="478" y="682" width="7" height="7" fill="#aaaaa9" opacity="0.4"/>
<rect x="1383" y="752" width="7" height="7" fill="#b8b8b6" opacity="0.4"/>
<rect x="955" y="742" width="5" height="5" fill="#b4b4b3" opacity="0.4"/>
<rect x="650" y="49" width="7" height="7" fill="#b8b8b6" opacity="0.4"/>
<rect x="435" y="238" width="6" height="6" fill="#aaaaa9" opacity="0.4"/>
<rect x="840" y="714" width="5" height="5" fill="#b8b8b6" opacity="0.4"/>
<rect x="703" y="474" width="6" height="6" fill="#aaaaa9" opacity="0.4"/>
<rect x="1394" y="208" width="4" height="4" fill="#a4a5a7" opacity="0.4"/>
<rect x="771" y="183" width="5" height="5" fill="#a6a6a6" opacity="0.4"/>
<rect x="878" y="517" width="4" height="4" fill="#b8b8b6" opacity="0.4"/>
<rect x="1071" y="712" width="4" height="4" fill="#b8b8b6" opacity="0.4"/>
<rect x="597" y="747" width="6" height="6" fill="#a6a6a6" opacity="0.4"/>
<rect x="649" y="448" width="7" height="7" fill="#a6a6a6" opacity="0.4"/>
<rect x="691" y="552" width="5" height="5" fill="#a4a5a7" opacity="0.4"/>
<rect x="309" y="178" width="5" height="5" fill="#b8b8b6" opacity="0.4"/>
<rect x="409" y="716" width="6" height="6" fill="#aaaaa9" opacity="0.4"/>
<rect x="1060" y="312" width="4" height="4" fill="#a6a6a6" opacity="0.4"/>
<rect x="971" y="543" width="4" height="4" fill="#b4b4b3" opacity="0.4"/>
<rect x="1236" y="687" width="5" height="5" fill="#a4a5a7" opacity="0.4"/>
<rect x="780" y="671" width="4" height="4" fill="#a6a6a6" opacity="0.4"/>
<rect x="1422" y="761" width="7" height="7" fill="#a4a5a7" opacity="0.4"/>
<rect x="477" y="564" width="5" height="5" fill="#a4a5a7" opacity="0.4"/>
<rect x="701" y="692" width="5" height="5" fill="#aaaaa9" opacity="0.4"/>
<rect x="479" y="140" width="4" height="4" fill="#a6a6a6" opacity="0.4"/>
<rect x="476" y="399" width="4" height="4" fill="#a4a5a7" opacity="0.4"/>
<rect x="930" y="333" width="4" height="4" fill="#a4a5a7" opacity="0.4"/>
<rect x="1120" y="202" width="5" height="5" fill="#b8b8b6" opacity="0.4"/>
<rect x="1345" y="32" width="5" height="5" fill="#aaaaa9" opacity="0.4"/>
<rect x="1172" y="644" width="7" height="7" fill="#a4a5a7" opacity="0.4"/>
<rect x="781" y="380" width="5" height="5" fill="#a6a6a6" opacity="0.4"/>
<rect x="1401" y="761" width="7" height="7" fill="#a6a6a6" opacity="0.4"/>
<rect x="1415" y="204" width="5" height="5" fill="#a6a6a6" opacity="0.4"/>
<rect x="519" y="220" width="4" height="4" fill="#aaaaa9" opacity="0.4"/>
<rect x="679" y="86" width="4" height="4" fill="#aaaaa9" opacity="0.4"/>
<rect x="875" y="719" width="5" height="5" fill="#b8b8b6" opacity="0.4"/>
<rect x="489" y="347" width="7" height="7" fill="#a6a6a6" opacity="0.4"/>
<rect x="1348" y="461" width="4" height="4" fill="#b4b4b3" opacity="0.4"/>
<rect x="1417" y="570" width="4" height="4" fill="#b8b8b6" opacity="0.4"/>
<rect x="617" y="57" width="4" height="4" fill="#a6a6a6" opacity="0.4"/>
<rect x="885" y="580" width="7" height="7" fill="#b8b8b6" opacity="0.4"/>
<rect x="485" y="522" width="6" height="6" fill="#b4b4b3" opacity="0.4"/>
<rect x="1044" y="95" width="4" height="4" fill="#b4b4b3" opacity="0.4"/>
<rect x="1090" y="516" width="5" height="5" fill="#a6a6a6" opacity="0.4"/>
<rect x="757" y="424" width="6" height="6" fill="#aaaaa9" opacity="0.4"/>
<rect x="674" y="224" width="5" height="5" fill="#aaaaa9" opacity="0.4"/>
<rect x="337" y="335" width="4" height="4" fill="#b4b4b3" opacity="0.4"/>
<rect x="471" y="80" width="5" height="5" fill="#a4a5a7" opacity="0.4"/>
<rect x="1418" y="707" width="7" height="7" fill="#a6a6a6" opacity="0.4"/>
<rect x="864" y="388" width="4" height="4" fill="#b8b8b6" opacity="0.4"/>
<rect x="1054" y="394" width="6" height="6" fill="#b4b4b3" opacity="0.4"/>
<rect x="366" y="463" width="5" height="5" fill="#b4b4b3" opacity="0.4"/>
<rect x="454" y="385" width="4" height="4" fill="#b8b8b6" opacity="0.4"/>
<rect x="1086" y="455" width="4" height="4" fill="#a6a6a6" opacity="0.4"/>
<rect x="422" y="266" width="5" height="5" fill="#a6a6a6" opacity="0.4"/>
<rect x="956" y="562" width="5" height="5" fill="#aaaaa9" opacity="0.4"/>
<rect x="1083" y="299" width="5" height="5" fill="#aaaaa9" opacity="0.4"/>
<rect x="1404" y="351" width="5" height="5" fill="#a6a6a6" opacity="0.4"/>
<rect x="398" y="564" width="5" height="5" fill="#b8b8b6" opacity="0.4"/>
<rect x="1042" y="220" width="4" height="4" fill="#a6a6a6" opacity="0.4"/>
<rect x="1211" y="96" width="4" height="4" fill="#b8b8b6" opacity="0.4"/>
<rect x="468" y="673" width="6" height="6" fill="#a6a6a6" opacity="0.4"/>
<rect x="1425" y="263" width="7" height="7" fill="#a4a5a7" opacity="0.4"/>
<rect x="1394" y="503" width="5" height="5" fill="#a4a5a7" opacity="0.4"/>
<rect x="647" y="179" width="5" height="5" fill="#aaaaa9" opacity="0.4"/>
<rect x="718" y="405" width="5" height="5" fill="#a4a5a7" opacity="0.4"/>
<rect x="997" y="515" width="4" height="4" fill="#b8b8b6" opacity="0.4"/>
<rect x="769" y="518" width="4" height="4" fill="#b8b8b6" opacity="0.4"/>
<rect x="898" y="232" width="6" height="6" fill="#b4b4b3" opacity="0.4"/>
<rect x="881" y="212" width="7" height="7" fill="#a4a5a7" opacity="0.4"/>
<rect x="911" y="244" width="6" height="6" fill="#a6a6a6" opacity="0.4"/>
<rect x="842" y="568" width="7" height="7" fill="#b8b8b6" opacity="0.4"/>
<rect x="1273" y="551" width="6" height="6" fill="#b4b4b3" opacity="0.4"/>
<rect x="392" y="294" width="5" height="5" fill="#b8b8b6" opacity="0.4"/>
<rect x="1410" y="347" width="6" height="6" fill="#aaaaa9" opacity="0.4"/>
<rect x="1081" y="229" width="6" height="6" fill="#a6a6a6" opacity="0.4"/>
<rect x="703" y="52" width="6" height="6" fill="#a4a5a7" opacity="0.4"/>
<rect x="1207" y="197" width="7" height="7" fill="#aaaaa9" opacity="0.4"/>
<rect x="417" y="615" width="7" height="7" fill="#b8b8b6" opacity="0.4"/>
<rect x="410" y="173" width="4" height="4" fill="#b4b4b3" opacity="0.4"/>
<rect x="1102" y="689" width="7" height="7" fill="#b4b4b3" opacity="0.4"/>
<rect x="622" y="143" width="5" height="5" fill="#b8b8b6" opacity="0.4"/>
<rect x="1103" y="288" width="5" height="5" fill="#a6a6a6" opacity="0.4"/>
<rect x="670" y="657" width="7" height="7" fill="#a6a6a6" opacity="0.4"/>
<rect x="775" y="140" width="4" height="4" fill="#aaaaa9" opacity="0.4"/>
<rect x="420" y="228" width="7" height="7" fill="#a4a5a7" opacity="0.4"/>
<rect x="1424" y="757" width="7" height="7" fill="#a6a6a6" opacity="0.4"/>
<rect x="737" y="308" width="6" height="6" fill="#a6a6a6" opacity="0.4"/>
<rect x="423" y="265" width="4" height="4" fill="#b8b8b6" opacity="0.4"/>
<rect x="1003" y="167" width="5" height="5" fill="#a6a6a6" opacity="0.4"/>
<rect x="627" y="176" width="5" height="5" fill="#b8b8b6" opacity="0.4"/>
<rect x="829" y="598" width="4" height="4" fill="#aaaaa9" opacity="0.4"/>
<rect x="335" y="268" width="4" height="4" fill="#a4a5a7" opacity="0.4"/>
<rect x="873" y="118" width="7" height="7" fill="#b8b8b6" opacity="0.4"/>
<rect x="647" y="335" width="4" height="4" fill="#aaaaa9" opacity="0.4"/>
<rect x="1318" y="114" width="5" height="5" fill="#b4b4b3" opacity="0.4"/>
<rect x="1036" y="340" width="5" height="5" fill="#aaaaa9" opacity="0.4"/>
<rect x="722" y="56" width="6" height="6" fill="#a4a5a7" opacity="0.4"/>
<rect x="600" y="601" width="7" height="7" fill="#b4b4b3" opacity="0.4"/>
<rect x="1414" y="68" width="7" height="7" fill="#b4b4b3" opacity="0.4"/>
<rect x="553" y="489" width="7" height="7" fill="#a4a5a7" opacity="0.4"/>
<rect x="916" y="314" width="6" height="6" fill="#a6a6a6" opacity="0.4"/>
<rect x="1155" y="580" width="6" height="6" fill="#a6a6a6" opacity="0.4"/>
<rect x="818" y="185" width="4" height="4" fill="#a6a6a6" opacity="0.4"/>
<rect x="400" y="95" width="4" height="4" fill="#aaaaa9" opacity="0.4"/>
<rect x="785" y="403" width="6" height="6" fill="#aaaaa9" opacity="0.4"/>
<rect x="880" y="753" width="4" height="4" fill="#b8b8b6" opacity="0.4"/>
<rect x="874" y="392" width="6" height="6" fill="#aaaaa9" opacity="0.4"/>
<rect x="1271" y="183" width="6" height="6" fill="#b4b4b3" opacity="0.4"/>
<rect x="1256" y="472" width="6" height="6" fill="#a4a5a7" opacity="0.4"/>
<rect x="616" y="90" width="4" height="4" fill="#aaaaa9" opacity="0.4"/>
<rect x="709" y="754" width="5" height="5" fill="#aaaaa9" opacity="0.4"/>
<rect x="667" y="652" width="5" height="5" fill="#aaaaa9" opacity="0.4"/>
<rect x="768" y="734" width="5" height="5" fill="#aaaaa9" opacity="0.4"/>
<rect x="750" y="148" width="7" height="7" fill="#b8b8b6" opacity="0.4"/>
<rect x="703" y="219" width="7" height="7" fill="#b8b8b6" opacity="0.4"/>
<rect x="481" y="705" width="4" height="4" fill="#a6a6a6" opacity="0.4"/>
<rect x="721" y="683" width="7" height="7" fill="#aaaaa9" opacity="0.4"/>
<rect x="1061" y="395" width="5" height="5" fill="#b4b4b3" opacity="0.4"/>
<rect x="909" y="78" width="5" height="5" fill="#b8b8b6" opacity="0.4"/>
<rect x="588" y="504" width="5" height="5" fill="#b8b8b6" opacity="0.4"/>
<rect x="1042" y="670" width="5" height="5" fill="#aaaaa9" opacity="0.4"/>
<rect x="1107" y="569" width="5" height="5" fill="#a6a6a6" opacity="0.4"/>
<rect x="605" y="250" width="5" height="5" fill="#b8b8b6" opacity="0.4"/>
<rect x="1057" y="576" width="5" height="5" fill="#aaaaa9" opacity="0.4"/>
<rect x="1149" y="297" width="5" height="5" fill="#b4b4b3" opacity="0.4"/>
<rect x="1227" y="510" width="4" height="4" fill="#a6a6a6" opacity="0.4"/>
<rect x="988" y="52" width="5" height="5" fill="#a4a5a7" opacity="0.4"/>
<rect x="598" y="652" width="4" height="4" fill="#b8b8b6" opacity="0.4"/>
<rect x="312" y="685" width="4" height="4" fill="#b4b4b3" opacity="0.4"/>
<rect x="1236" y="536" width="5" height="5" fill="#a4a5a7" opacity="0.4"/>
<rect x="1273" y="178" width="4" height="4" fill="#aaaaa9" opacity="0.4"/>
<rect x="443" y="303" width="4" height="4" fill="#a6a6a6" opacity="0.4"/>
<rect x="1002" y="117" width="6" height="6" fill="#b8b8b6" opacity="0.4"/>
<rect x="1056" y="250" width="5" height="5" fill="#a6a6a6" opacity="0.4"/>
<rect x="1417" y="353" width="4" height="4" fill="#aaaaa9" opacity="0.4"/>
<rect x="1214" y="568" width="6" height="6" fill="#b8b8b6" opacity="0.4"/>
<rect x="398" y="711" width="7" height="7" fill="#a4a5a7" opacity="0.4"/>
<rect x="989" y="664" width="7" height="7" fill="#b8b8b6" opacity="0.4"/>
<rect x="1088" y="370" width="5" height="5" fill="#b4b4b3" opacity="0.4"/>
<rect x="1360" y="191" width="5" height="5" fill="#aaaaa9" opacity="0.4"/>
<rect x="445" y="254" width="5" height="5" fill="#a6a6a6" opacity="0.4"/>
<rect x="402" y="353" width="7" height="7" fill="#aaaaa9" opacity="0.4"/>
<rect x="873" y="398" width="6" height="6" fill="#a6a6a6" opacity="0.4"/>
<rect x="749" y="146" width="7" height="7" fill="#b4b4b3" opacity="0.4"/>
<rect x="471" y="592" width="5" height="5" fill="#b4b4b3" opacity="0.4"/>
<rect x="830" y="402" width="5" height="5" fill="#b8b8b6" opacity="0.4"/>
<rect x="695" y="628" width="6" height="6" fill="#a6a6a6" opacity="0.4"/>
<rect x="607" y="497" width="6" height="6" fill="#b4b4b3" opacity="0.4"/>
<rect x="722" y="455" width="6" height="6" fill="#b8b8b6" opacity="0.4"/>
<rect x="790" y="29" width="6" height="6" fill="#aaaaa9" opacity="0.4"/>
<rect x="1194" y="130" width="5" height="5" fill="#a4a5a7" opacity="0.4"/>
<rect x="1089" y="153" width="7" height="7" fill="#a6a6a6" opacity="0.4"/>
<rect x="1219" y="350" width="5" height="5" fill="#b4b4b3" opacity="0.4"/>
<rect x="1256" y="143" width="5" height="5" fill="#b8b8b6" opacity="0.4"/>
<rect x="655" y="504" width="7" height="7" fill="#b4b4b3" opacity="0.4"/>
<rect x="609" y="102" width="5" height="5" fill="#a4a5a7" opacity="0.4"/>
<rect x="477" y="461" width="7" height="7" fill="#b8b8b6" opacity="0.4"/>
<rect x="1027" y="387" width="4" height="4" fill="#a6a6a6" opacity="0.4"/>
<rect x="1407" y="671" width="4" height="4" fill="#b4b4b3" opacity="0.4"/>
<rect x="1304" y="505" width="7" height="7" fill="#a6a6a6" opacity="0.4"/>
<rect x="541" y="604" width="5" height="5" fill="#aaaaa9" opacity="0.4"/>
<rect x="1360" y="155" width="6" height="6" fill="#aaaaa9" opacity="0.4"/>
<rect x="412" y="624" width="6" height="6" fill="#b8b8b6" opacity="0.4"/>
<rect x="468" y="434" width="4" height="4" fill="#a6a6a6" opacity="0.4"/>
<rect x="1246" y="670" width="5" height="5" fill="#a6a6a6" opacity="0.4"/>
<rect x="576" y="90" width="4" height="4" fill="#aaaaa9" opacity="0.4"/>
<rect x="592" y="163" width="6" height="6" fill="#a6a6a6" opacity="0.4"/>
<rect x="1336" y="193" width="7" height="7" fill="#b8b8b6" opacity="0.4"/>
<rect x="423" y="193" width="4" height="4" fill="#a6a6a6" opacity="0.4"/>
<rect x="668" y="108" width="4" height="4" fill="#b4b4b3" opacity="0.4"/>
<rect x="1424" y="182" width="6" height="6" fill="#a6a6a6" opacity="0.4"/>
<rect x="1153" y="332" width="7" height="7" fill="#a4a5a7" opacity="0.4"/>
<rect x="548" y="336" width="7" height="7" fill="#a4a5a7" opacity="0.4"/>
<rect x="1062" y="460" width="7" height="7" fill="#a4a5a7" opacity="0.4"/>
<rect x="606" y="639" width="5" height="5" fill="#b4b4b3" opacity="0.4"/>
<rect x="1044" y="441" width="5" height="5" fill="#b4b4b3" opacity="0.4"/>
<rect x="1424" y="403" width="4" height="4" fill="#a6a6a6" opacity="0.4"/>
<rect x="1071" y="692" width="4" height="4" fill="#b4b4b3" opacity="0.4"/>
<rect x="309" y="491" width="5" height="5" fill="#b8b8b6" opacity="0.4"/>
<rect x="827" y="125" width="7" height="7" fill="#aaaaa9" opacity="0.4"/>
<rect x="1103" y="566" width="5" height="5" fill="#b8b8b6" opacity="0.4"/>
<rect x="1023" y="513" width="4" height="4" fill="#aaaaa9" opacity="0.4"/>
<rect x="728" y="559" width="5" height="5" fill="#a4a5a7" opacity="0.4"/>
<rect x="676" y="123" width="6" height="6" fill="#a6a6a6" opacity="0.4"/>
<rect x="343" y="246" width="5" height="5" fill="#a4a5a7" opacity="0.4"/>
<rect x="425" y="568" width="6" height="6" fill="#a6a6a6" opacity="0.4"/>
<rect x="323" y="562" width="5" height="5" fill="#aaaaa9" opacity="0.4"/>
<rect x="993" y="498" width="4" height="4" fill="#b4b4b3" opacity="0.4"/>
<rect x="428" y="370" width="7" height="7" fill="#b4b4b3" opacity="0.4"/>
<rect x="729" y="349" width="7" height="7" fill="#b8b8b6" opacity="0.4"/>
<rect x="1394" y="265" width="7" height="7" fill="#b4b4b3" opacity="0.4"/>
<rect x="883" y="438" width="4" height="4" fill="#a6a6a6" opacity="0.4"/>
<rect x="1034" y="222" width="5" height="5" fill="#b8b8b6" opacity="0.4"/>
<rect x="794" y="591" width="6" height="6" fill="#aaaaa9" opacity="0.4"/>
<rect x="467" y="411" width="5" height="5" fill="#b4b4b3" opacity="0.4"/>
<rect x="1359" y="690" width="4" height="4" fill="#b8b8b6" opacity="0.4"/>
<rect x="931" y="335" width="7" height="7" fill="#a6a6a6" opacity="0.4"/>
<rect x="1047" y="611" width="7" height="7" fill="#a4a5a7" opacity="0.4"/>
<rect x="1100" y="75" width="7" height="7" fill="#a6a6a6" opacity="0.4"/>
<rect x="636" y="556" width="7" height="7" fill="#a6a6a6" opacity="0.4"/>
<rect x="707" y="617" width="4" height="4" fill="#a6a6a6" opacity="0.4"/>
<rect x="325" y="400" width="4" height="4" fill="#a6a6a6" opacity="0.4"/>
<rect x="921" y="474" width="5" height="5" fill="#a6a6a6" opacity="0.4"/>
<rect x="623" y="743" width="6" height="6" fill="#b4b4b3" opacity="0.4"/>
<rect x="959" y="259" width="4" height="4" fill="#a6a6a6" opacity="0.4"/>
<rect x="910" y="512" width="4" height="4" fill="#aaaaa9" opacity="0.4"/>
<rect x="1274" y="102" width="5" height="5" fill="#a6a6a6" opacity="0.4"/>
<rect x="961" y="560" width="7" height="7" fill="#aaaaa9" opacity="0.4"/>
<rect x="622" y="452" width="6" height="6" fill="#a6a6a6" opacity="0.4"/>
<rect x="812" y="268" width="6" height="6" fill="#a4a5a7" opacity="0.4"/>
<rect x="1019" y="404" width="7" height="7" fill="#a6a6a6" opacity="0.4"/>
<rect x="680" y="300" width="6" height="6" fill="#aaaaa9" opacity="0.4"/>
<rect x="1111" y="304" width="6" height="6" fill="#b4b4b3" opacity="0.4"/>
<rect x="969" y="470" width="7" height="7" fill="#b8b8b6" opacity="0.4"/>
<rect x="1365" y="218" width="5" height="5" fill="#a4a5a7" opacity="0.4"/>
<rect x="447" y="432" width="4" height="4" fill="#b8b8b6" opacity="0.4"/>
<rect x="384" y="665" width="6" height="6" fill="#b8b8b6" opacity="0.4"/>
<rect x="588" y="483" width="7" height="7" fill="#b8b8b6" opacity="0.4"/>
<rect x="819" y="555" width="6" height="6" fill="#a6a6a6" opacity="0.4"/>
<rect x="1044" y="105" width="7" height="7" fill="#b4b4b3" opacity="0.4"/>
<rect x="343" y="169" width="7" height="7" fill="#b4b4b3" opacity="0.4"/>
<rect x="1072" y="172" width="6" height="6" fill="#a4a5a7" opacity="0.4"/>
<rect x="751" y="448" width="7" height="7" fill="#a4a5a7" opacity="0.4"/>
<rect x="507" y="729" width="6" height="6" fill="#a4a5a7" opacity="0.4"/>
<rect x="1421" y="372" width="5" height="5" fill="#a6a6a6" opacity="0.4"/>
<rect x="1069" y="84" width="5" height="5" fill="#a4a5a7" opacity="0.4"/>
<rect x="1240" y="677" width="7" height="7" fill="#aaaaa9" opacity="0.4"/>
<rect x="833" y="259" width="5" height="5" fill="#aaaaa9" opacity="0.4"/>
<rect x="1253" y="522" width="4" height="4" fill="#b8b8b6" opacity="0.4"/>
<rect x="471" y="447" width="7" height="7" fill="#b8b8b6" opacity="0.4"/>
<rect x="676" y="104" width="5" height="5" fill="#b8b8b6" opacity="0.4"/>
<rect x="1108" y="193" width="6" height="6" fill="#aaaaa9" opacity="0.4"/>
<rect x="637" y="225" width="4" height="4" fill="#b4b4b3" opacity="0.4"/>
<rect x="1371" y="190" width="4" height="4" fill="#b4b4b3" opacity="0.4"/>
<rect x="794" y="494" width="4" height="4" fill="#a6a6a6" opacity="0.4"/>
<rect x="1384" y="197" width="5" height="5" fill="#aaaaa9" opacity="0.4"/>
<rect x="322" y="101" width="4" height="4" fill="#b4b4b3" opacity="0.4"/>
<rect x="573" y="240" width="6" height="6" fill="#a6a6a6" opacity="0.4"/>
<rect x="945" y="52" width="4" height="4" fill="#a6a6a6" opacity="0.4"/>
<rect x="1008" y="461" width="5" height="5" fill="#b4b4b3" opacity="0.4"/>
<rect x="1217" y="142" width="7" height="7" fill="#a4a5a7" opacity="0.4"/>
<rect x="596" y="323" width="4" height="4" fill="#b8b8b6" opacity="0.4"/>
<rect x="1098" y="451" width="7" height="7" fill="#aaaaa9" opacity="0.4"/>
<rect x="1340" y="628" width="6" height="6" fill="#a4a5a7" opacity="0.4"/>
<rect x="348" y="398" width="4" height="4" fill="#a4a5a7" opacity="0.4"/>
<rect x="337" y="216" width="6" height="6" fill="#aaaaa9" opacity="0.4"/>
<rect x="1358" y="602" width="7" height="7" fill="#b4b4b3" opacity="0.4"/>
<rect x="818" y="589" width="4" height="4" fill="#aaaaa9" opacity="0.4"/>
<rect x="1076" y="157" width="5" height="5" fill="#a6a6a6" opacity="0.4"/>
<rect x="1137" y="528" width="5" height="5" fill="#b8b8b6" opacity="0.4"/>
<rect x="448" y="392" width="5" height="5" fill="#aaaaa9" opacity="0.4"/>
<rect x="1372" y="764" width="7" height="7" fill="#b4b4b3" opacity="0.4"/>
<rect x="1194" y="494" width="4" height="4" fill="#b8b8b6" opacity="0.4"/>
<rect x="492" y="84" width="4" height="4" fill="#b4b4b3" opacity="0.4"/>
<rect x="314" y="383" width="4" height="4" fill="#b4b4b3" opacity="0.4"/>
<rect x="763" y="655" width="7" height="7" fill="#a6a6a6" opacity="0.4"/>
<rect x="564" y="253" width="7" height="7" fill="#b4b4b3" opacity="0.4"/>
<rect x="742" y="504" width="4" height="4" fill="#a4a5a7" opacity="0.4"/>
<rect x="661" y="476" width="5" height="5" fill="#b4b4b3" opacity="0.4"/>
<rect x="545" y="756" width="4" height="4" fill="#a6a6a6" opacity="0.4"/>
<rect x="1250" y="658" width="7" height="7" fill="#b4b4b3" opacity="0.4"/>
<rect x="1391" y="646" width="7" height="7" fill="#a4a5a7" opacity="0.4"/>
<rect x="953" y="37" width="6" height="6" fill="#b4b4b3" opacity="0.4"/>
<rect x="759" y="736" width="7" height="7" fill="#b4b4b3" opacity="0.4"/>
<rect x="412" y="100" width="7" height="7" fill="#a6a6a6" opacity="0.4"/>
<rect x="1124" y="619" width="4" height="4" fill="#a4a5a7" opacity="0.4"/>
<rect x="425" y="470" width="4" height="4" fill="#aaaaa9" opacity="0.4"/>
<rect x="981" y="339" width="6" height="6" fill="#a4a5a7" opacity="0.4"/>
<rect x="1053" y="30" width="5" height="5" fill="#b4b4b3" opacity="0.4"/>
<rect x="693" y="374" width="6" height="6" fill="#a6a6a6" opacity="0.4"/>
<rect x="1008" y="473" width="6" height="6" fill="#a6a6a6" opacity="0.4"/>
<rect x="642" y="201" width="7" height="7" fill="#a4a5a7" opacity="0.4"/>
<rect x="1331" y="446" width="7" height="7" fill="#a6a6a6" opacity="0.4"/>
<rect x="816" y="436" width="5" height="5" fill="#a4a5a7" opacity="0.4"/>
<rect x="1001" y="381" width="4" height="4" fill="#a4a5a7" opacity="0.4"/>
<rect x="1094" y="727" width="5" height="5" fill="#a6a6a6" opacity="0.4"/>
<rect x="658" y="675" width="5" height="5" fill="#a6a6a6" opacity="0.4"/>
<rect x="329" y="506" width="5" height="5" fill="#aaaaa9" opacity="0.4"/>
<rect x="1126" y="646" width="6" height="6" fill="#a4a5a7" opacity="0.4"/>
<rect x="992" y="133" width="5" height="5" fill="#a6a6a6" opacity="0.4"/>
<rect x="793" y="682" width="5" height="5" fill="#aaaaa9" opacity="0.4"/>
<rect x="1206" y="157" width="6" height="6" fill="#a4a5a7" opacity="0.4"/>
<rect x="1356" y="42" width="7" height="7" fill="#aaaaa9" opacity="0.4"/>
<rect x="353" y="118" width="7" height="7" fill="#a6a6a6" opacity="0.4"/>
<rect x="1242" y="531" width="6" height="6" fill="#a6a6a6" opacity="0.4"/>
<rect x="668" y="143" width="6" height="6" fill="#b8b8b6" opacity="0.4"/>
<rect x="909" y="58" width="7" height="7" fill="#a6a6a6" opacity="0.4"/>
<rect x="870" y="134" width="5" height="5" fill="#a6a6a6" opacity="0.4"/>
<rect x="1301" y="142" width="5" height="5" fill="#aaaaa9" opacity="0.4"/>
<rect x="1318" y="68" width="4" height="4" fill="#aaaaa9" opacity="0.4"/>
<rect x="1314" y="162" width="6" height="6" fill="#b4b4b3" opacity="0.4"/>
<rect x="1404" y="123" width="6" height="6" fill="#b8b8b6" opacity="0.4"/>
<rect x="1096" y="318" width="7" height="7" fill="#b8b8b6" opacity="0.4"/>
<rect x="607" y="214" width="5" height="5" fill="#a4a5a7" opacity="0.4"/>
<rect x="448" y="662" width="5" height="5" fill="#b8b8b6" opacity="0.4"/>
<rect x="1082" y="43" width="5" height="5" fill="#a6a6a6" opacity="0.4"/>
<rect x="1177" y="594" width="6" height="6" fill="#aaaaa9" opacity="0.4"/>
<rect x="405" y="236" width="5" height="5" fill="#b4b4b3" opacity="0.4"/>
<rect x="797" y="97" width="5" height="5" fill="#b4b4b3" opacity="0.4"/>
<rect x="478" y="82" width="4" height="4" fill="#a6a6a6" opacity="0.4"/>
<rect x="1326" y="324" width="5" height="5" fill="#b8b8b6" opacity="0.4"/>
<rect x="809" y="67" width="7" height="7" fill="#b4b4b3" opacity="0.4"/>
<rect x="426" y="321" width="5" height="5" fill="#b8b8b6" opacity="0.4"/>
<rect x="961" y="349" width="7" height="7" fill="#aaaaa9" opacity="0.4"/>
<rect x="898" y="544" width="7" height="7" fill="#b8b8b6" opacity="0.4"/>
<rect x="370" y="337" width="4" height="4" fill="#aaaaa9" opacity="0.4"/>
<rect x="537" y="268" width="5" height="5" fill="#aaaaa9" opacity="0.4"/>
<rect x="1275" y="499" width="6" height="6" fill="#b4b4b3" opacity="0.4"/>
<rect x="725" y="708" width="7" height="7" fill="#a6a6a6" opacity="0.4"/>
<rect x="365" y="356" width="6" height="6" fill="#b4b4b3" opacity="0.4"/>
<rect x="855" y="320" width="5" height="5" fill="#b8b8b6" opacity="0.4"/>
<rect x="874" y="169" width="7" height="7" fill="#a6a6a6" opacity="0.4"/>
<rect x="1293" y="645" width="7" height="7" fill="#aaaaa9" opacity="0.4"/>
<rect x="1022" y="439" width="7" height="7" fill="#a6a6a6" opacity="0.4"/>
<rect x="1043" y="255" width="5" height="5" fill="#a4a5a7" opacity="0.4"/>
<rect x="621" y="357" width="6" height="6" fill="#b4b4b3" opacity="0.4"/>
<rect x="1329" y="697" width="7" height="7" fill="#a4a5a7" opacity="0.4"/>
<rect x="989" y="486" width="6" height="6" fill="#b8b8b6" opacity="0.4"/>
<rect x="1021" y="672" width="4" height="4" fill="#b4b4b3" opacity="0.4"/>
<rect x="606" y="424" width="6" height="6" fill="#b4b4b3" opacity="0.4"/>
<rect x="1289" y="673" width="4" height="4" fill="#b4b4b3" opacity="0.4"/>
<rect x="826" y="331" width="4" height="4" fill="#b8b8b6" opacity="0.4"/>
<rect x="395" y="750" width="6" height="6" fill="#b8b8b6" opacity="0.4"/>
<rect x="720" y="334" width="7" height="7" fill="#a4a5a7" opacity="0.4"/>
<rect x="1013" y="298" width="5" height="5" fill="#a6a6a6" opacity="0.4"/>
<rect x="372" y="411" width="7" height="7" fill="#a4a5a7" opacity="0.4"/>
<rect x="1157" y="719" width="7" height="7" fill="#aaaaa9" opacity="0.4"/>
<rect x="1012" y="205" width="7" height="7" fill="#a4a5a7" opacity="0.4"/>
<rect x="668" y="313" width="7" height="7" fill="#b4b4b3" opacity="0.4"/>
<rect x="336" y="397" width="5" height="5" fill="#a4a5a7" opacity="0.4"/>
<rect x="1045" y="628" width="6" height="6" fill="#a6a6a6" opacity="0.4"/>
<rect x="632" y="86" width="5" height="5" fill="#b8b8b6" opacity="0.4"/>
<rect x="860" y="248" width="7" height="7" fill="#a4a5a7" opacity="0.4"/>
<rect x="899" y="59" width="5" height="5" fill="#a6a6a6" opacity="0.4"/>
<rect x="1052" y="537" width="5" height="5" fill="#b4b4b3" opacity="0.4"/>
<rect x="1337" y="633" width="6" height="6" fill="#aaaaa9" opacity="0.4"/>
<rect x="370" y="436" width="5" height="5" fill="#b4b4b3" opacity="0.4"/>
<rect x="435" y="86" width="4" height="4" fill="#aaaaa9" opacity="0.4"/>
<rect x="1271" y="325" width="6" height="6" fill="#aaaaa9" opacity="0.4"/>
<rect x="800" y="200" width="7" height="7" fill="#b8b8b6" opacity="0.4"/>
<rect x="500" y="630" width="6" height="6" fill="#b4b4b3" opacity="0.4"/>
<rect x="1156" y="127" width="4" height="4" fill="#b4b4b3" opacity="0.4"/>
<rect x="510" y="747" width="5" height="5" fill="#aaaaa9" opacity="0.4"/>
<rect x="1019" y="102" width="7" height="7" fill="#aaaaa9" opacity="0.4"/>
<rect x="556" y="650" width="4" height="4" fill="#a6a6a6" opacity="0.4"/>
<rect x="799" y="669" width="6" height="6" fill="#aaaaa9" opacity="0.4"/>
<rect x="861" y="451" width="6" height="6" fill="#b8b8b6" opacity="0.4"/>
<rect x="531" y="496" width="7" height="7" fill="#a4a5a7" opacity="0.4"/>
<rect x="944" y="630" width="4" height="4" fill="#b4b4b3" opacity="0.4"/>
<rect x="1414" y="35" width="7" height="7" fill="#a6a6a6" opacity="0.4"/>
<rect x="1009" y="506" width="5" height="5" fill="#b4b4b3" opacity="0.4"/>
<rect x="788" y="507" width="5" height="5" fill="#a4a5a7" opacity="0.4"/>
<rect x="849" y="55" width="6" height="6" fill="#b8b8b6" opacity="0.4"/>
<rect x="830" y="28" width="6" height="6" fill="#aaaaa9" opacity="0.4"/>
<rect x="1049" y="592" width="5" height="5" fill="#b4b4b3" opacity="0.4"/>
<rect x="618" y="391" width="5" height="5" fill="#b8b8b6" opacity="0.4"/>
<rect x="1415" y="322" width="4" height="4" fill="#a6a6a6" opacity="0.4"/>
<rect x="631" y="704" width="5" height="5" fill="#b8b8b6" opacity="0.4"/>
<rect x="490" y="568" width="6" height="6" fill="#a6a6a6" opacity="0.4"/>
<rect x="1147" y="137" width="6" height="6" fill="#a6a6a6" opacity="0.4"/>
<rect x="580" y="408" width="7" height="7" fill="#aaaaa9" opacity="0.4"/>
<rect x="1359" y="237" width="6" height="6" fill="#a4a5a7" opacity="0.4"/>
<rect x="583" y="729" width="5" height="5" fill="#a6a6a6" opacity="0.4"/>
<rect x="669" y="265" width="7" height="7" fill="#b8b8b6" opacity="0.4"/>
<rect x="592" y="281" width="6" height="6" fill="#aaaaa9" opacity="0.4"/>
<rect x="309" y="692" width="5" height="5" fill="#aaaaa9" opacity="0.4"/>
<rect x="535" y="114" width="6" height="6" fill="#aaaaa9" opacity="0.4"/>
<rect x="430" y="161" width="4" height="4" fill="#aaaaa9" opacity="0.4"/>
<rect x="950" y="357" width="6" height="6" fill="#aaaaa9" opacity="0.4"/>
<rect x="891" y="599" width="6" height="6" fill="#a6a6a6" opacity="0.4"/>
<rect x="772" y="488" width="5" height="5" fill="#aaaaa9" opacity="0.4"/>
<rect x="834" y="271" width="5" height="5" fill="#b8b8b6" opacity="0.4"/>
<rect x="1299" y="477" width="5" height="5" fill="#a6a6a6" opacity="0.4"/>
<rect x="1344" y="683" width="5" height="5" fill="#a6a6a6" opacity="0.4"/>
<rect x="475" y="538" width="6" height="6" fill="#8e9090" opacity=".5"/>
<rect x="490" y="540" width="8" height="8" fill="#8e9090" opacity=".5"/>
<rect x="500" y="536" width="10" height="8" fill="#8e9090" opacity=".5"/>
<rect x="508" y="543" width="6" height="6" fill="#8e9090" opacity=".5"/>
<rect x="516" y="553" width="6" height="10" fill="#8e9090" opacity=".5"/>
<rect x="518" y="562" width="5" height="8" fill="#8e9090" opacity=".5"/>
<rect x="514" y="570" width="6" height="6" fill="#8e9090" opacity=".5"/>
<rect x="455" y="549" width="4" height="10" fill="#8e9090" opacity=".5"/>
<rect x="458" y="560" width="5" height="10" fill="#8e9090" opacity=".5"/>
<rect x="546" y="571" width="4" height="4" fill="#8a0ca8" />
<path d="M360 80 L362 130 L358 170 L361 220 L359 290" fill="none" stroke="#8c8e8e" stroke-width="2.5" opacity=".3"/>
<path d="M500 75 L503 120 L499 183" fill="none" stroke="#8c8e8e" stroke-width="2.5" opacity=".3"/>
<path d="M294 170 L340 169 L362 170 L390 174 L411 179 L440 175 L472 168" fill="none" stroke="#8c8e8e" stroke-width="2.5" opacity=".3"/>
<path d="M744 157 L772 150" fill="none" stroke="#8c8e8e" stroke-width="2.5" opacity=".3"/>
<path d="M812 482 L808 520 L800 560 L797 600 L795 625" fill="none" stroke="#8a8c8c" stroke-width="3" opacity=".4"/>
<path d="M760 540 L745 580 L740 620" fill="none" stroke="#8e9090" stroke-width="2.5" opacity=".3"/>
<path d="M360 142 L362 200 L363 256" fill="none" stroke="#c4c6c6" stroke-width="3" opacity=".5"/>
<path d="M310 282 L362 251" fill="none" stroke="#d0d2d2" stroke-width="2.5" opacity=".45"/>
<path d="M294 490 L600 480 L1030 468" fill="none" stroke="#929494" stroke-width="5" stroke-dasharray="7 3 4 2 9 4" opacity=".28"/>
<rect x="810" y="473" width="7" height="3" fill="#f2f2f2" opacity=".5"/>
<rect x="908" y="470" width="5" height="3" fill="#d8d8d8" opacity=".5"/>
<rect x="784" y="473" width="7" height="3" fill="#e8e8e8" opacity=".5"/>
<rect x="607" y="483" width="4" height="3" fill="#e8e8e8" opacity=".5"/>
<rect x="817" y="472" width="5" height="3" fill="#d8d8d8" opacity=".5"/>
<rect x="381" y="485" width="7" height="3" fill="#e8e8e8" opacity=".5"/>
<rect x="996" y="469" width="7" height="3" fill="#f2f2f2" opacity=".5"/>
<rect x="403" y="486" width="5" height="3" fill="#e8e8e8" opacity=".5"/>
<rect x="723" y="476" width="4" height="3" fill="#d8d8d8" opacity=".5"/>
<rect x="543" y="482" width="5" height="3" fill="#e8e8e8" opacity=".5"/>
<rect x="1005" y="470" width="4" height="3" fill="#e8e8e8" opacity=".5"/>
<rect x="696" y="480" width="4" height="3" fill="#f2f2f2" opacity=".5"/>
<rect x="919" y="472" width="7" height="3" fill="#e8e8e8" opacity=".5"/>
<rect x="736" y="474" width="4" height="3" fill="#e8e8e8" opacity=".5"/>
<rect x="434" y="486" width="7" height="3" fill="#d8d8d8" opacity=".5"/>
<rect x="560" y="479" width="4" height="3" fill="#f2f2f2" opacity=".5"/>
<rect x="326" y="491" width="5" height="3" fill="#d8d8d8" opacity=".5"/>
<rect x="641" y="481" width="5" height="3" fill="#f2f2f2" opacity=".5"/>
<rect x="905" y="470" width="4" height="3" fill="#e8e8e8" opacity=".5"/>
<rect x="444" y="484" width="7" height="3" fill="#d8d8d8" opacity=".5"/>
<rect x="433" y="486" width="4" height="3" fill="#f2f2f2" opacity=".5"/>
<rect x="355" y="489" width="7" height="3" fill="#e8e8e8" opacity=".5"/>
<rect x="740" y="474" width="5" height="3" fill="#d8d8d8" opacity=".5"/>
<rect x="987" y="470" width="5" height="3" fill="#d8d8d8" opacity=".5"/>
<rect x="968" y="469" width="7" height="3" fill="#d8d8d8" opacity=".5"/>
<rect x="683" y="477" width="5" height="3" fill="#e8e8e8" opacity=".5"/>
<rect x="838" y="472" width="4" height="3" fill="#e8e8e8" opacity=".5"/>
<rect x="955" y="471" width="7" height="3" fill="#d8d8d8" opacity=".5"/>
<rect x="391" y="486" width="4" height="3" fill="#d8d8d8" opacity=".5"/>
<rect x="602" y="478" width="4" height="3" fill="#d8d8d8" opacity=".5"/>
<rect x="996" y="470" width="7" height="3" fill="#e8e8e8" opacity=".5"/>
<rect x="592" y="479" width="5" height="3" fill="#e8e8e8" opacity=".5"/>
<rect x="401" y="486" width="4" height="3" fill="#f2f2f2" opacity=".5"/>
<rect x="939" y="470" width="5" height="3" fill="#e8e8e8" opacity=".5"/>
<rect x="470" y="484" width="7" height="3" fill="#d8d8d8" opacity=".5"/>
<rect x="713" y="479" width="7" height="3" fill="#f2f2f2" opacity=".5"/>
<rect x="671" y="481" width="4" height="3" fill="#e8e8e8" opacity=".5"/>
<rect x="306" y="488" width="5" height="3" fill="#e8e8e8" opacity=".5"/>
<rect x="385" y="486" width="4" height="3" fill="#e8e8e8" opacity=".5"/>
<rect x="972" y="469" width="7" height="3" fill="#f2f2f2" opacity=".5"/>
<rect x="889" y="676" width="20" height="6" fill="#c2c4c4" opacity=".5"/>
<rect x="912" y="674" width="24" height="7" fill="#c2c4c4" opacity=".5"/>
<rect x="940" y="678" width="18" height="6" fill="#c2c4c4" opacity=".5"/>
<path d="M945 57 L1030 57 L1030 141 L945 140 Q902 138 902 99 Q902 60 945 57 Z" fill="#bdb8ae" />
<path d="M947 63 L1030 62 L1030 135 L947 134 Q909 132 909 99 Q909 66 947 63 Z" fill="#927462" />
<rect x="1012" y="79" width="5" height="5" fill="#b49c8c" opacity=".7"/>
<rect x="945" y="114" width="5" height="5" fill="#a88c7c" opacity=".7"/>
<rect x="927" y="111" width="5" height="5" fill="#b49c8c" opacity=".7"/>
<rect x="1000" y="76" width="5" height="5" fill="#94786a" opacity=".7"/>
<rect x="974" y="78" width="5" height="5" fill="#94786a" opacity=".7"/>
<rect x="1023" y="72" width="5" height="5" fill="#a88c7c" opacity=".7"/>
<rect x="961" y="72" width="5" height="5" fill="#9a7050" opacity=".7"/>
<rect x="996" y="109" width="5" height="5" fill="#7a5e4e" opacity=".7"/>
<rect x="977" y="74" width="5" height="5" fill="#9a7050" opacity=".7"/>
<rect x="985" y="109" width="5" height="5" fill="#7a5e4e" opacity=".7"/>
<rect x="911" y="104" width="5" height="5" fill="#b49c8c" opacity=".7"/>
<rect x="976" y="73" width="5" height="5" fill="#b49c8c" opacity=".7"/>
<rect x="983" y="69" width="5" height="5" fill="#a88c7c" opacity=".7"/>
<rect x="975" y="89" width="5" height="5" fill="#b49c8c" opacity=".7"/>
<rect x="927" y="82" width="5" height="5" fill="#94786a" opacity=".7"/>
<rect x="1023" y="70" width="5" height="5" fill="#866a5a" opacity=".7"/>
<rect x="948" y="72" width="5" height="5" fill="#b49c8c" opacity=".7"/>
<rect x="962" y="105" width="5" height="5" fill="#94786a" opacity=".7"/>
<rect x="914" y="103" width="5" height="5" fill="#a88c7c" opacity=".7"/>
<rect x="1011" y="129" width="5" height="5" fill="#94786a" opacity=".7"/>
<rect x="1011" y="110" width="5" height="5" fill="#866a5a" opacity=".7"/>
<rect x="1015" y="80" width="5" height="5" fill="#9a7050" opacity=".7"/>
<rect x="938" y="82" width="5" height="5" fill="#9a7050" opacity=".7"/>
<rect x="1011" y="126" width="5" height="5" fill="#b49c8c" opacity=".7"/>
<rect x="955" y="80" width="5" height="5" fill="#94786a" opacity=".7"/>
<rect x="923" y="105" width="5" height="5" fill="#9a7050" opacity=".7"/>
<rect x="993" y="96" width="5" height="5" fill="#a88c7c" opacity=".7"/>
<rect x="1022" y="93" width="5" height="5" fill="#a88c7c" opacity=".7"/>
<rect x="918" y="120" width="5" height="5" fill="#9a7050" opacity=".7"/>
<rect x="977" y="118" width="5" height="5" fill="#7a5e4e" opacity=".7"/>
<rect x="925" y="112" width="5" height="5" fill="#866a5a" opacity=".7"/>
<rect x="959" y="81" width="5" height="5" fill="#9a7050" opacity=".7"/>
<rect x="995" y="72" width="5" height="5" fill="#a88c7c" opacity=".7"/>
<rect x="961" y="79" width="5" height="5" fill="#94786a" opacity=".7"/>
<rect x="920" y="106" width="5" height="5" fill="#a88c7c" opacity=".7"/>
<rect x="994" y="100" width="5" height="5" fill="#9a7050" opacity=".7"/>
<rect x="1020" y="87" width="5" height="5" fill="#7a5e4e" opacity=".7"/>
<rect x="1019" y="76" width="5" height="5" fill="#7a5e4e" opacity=".7"/>
<rect x="950" y="66" width="5" height="5" fill="#866a5a" opacity=".7"/>
<rect x="947" y="78" width="5" height="5" fill="#94786a" opacity=".7"/>
<rect x="972" y="74" width="5" height="5" fill="#7a5e4e" opacity=".7"/>
<rect x="941" y="127" width="5" height="5" fill="#9a7050" opacity=".7"/>
<rect x="942" y="118" width="5" height="5" fill="#a88c7c" opacity=".7"/>
<rect x="944" y="112" width="5" height="5" fill="#a88c7c" opacity=".7"/>
<rect x="1015" y="75" width="5" height="5" fill="#a88c7c" opacity=".7"/>
<rect x="962" y="124" width="5" height="5" fill="#9a7050" opacity=".7"/>
<rect x="949" y="91" width="5" height="5" fill="#94786a" opacity=".7"/>
<rect x="957" y="97" width="5" height="5" fill="#b49c8c" opacity=".7"/>
<rect x="928" y="89" width="5" height="5" fill="#866a5a" opacity=".7"/>
<rect x="959" y="128" width="5" height="5" fill="#94786a" opacity=".7"/>
<rect x="930" y="127" width="5" height="5" fill="#94786a" opacity=".7"/>
<rect x="989" y="90" width="5" height="5" fill="#94786a" opacity=".7"/>
<rect x="1006" y="73" width="5" height="5" fill="#94786a" opacity=".7"/>
<rect x="1026" y="121" width="5" height="5" fill="#7a5e4e" opacity=".7"/>
<rect x="971" y="78" width="5" height="5" fill="#a88c7c" opacity=".7"/>
<rect x="985" y="132" width="5" height="5" fill="#7a5e4e" opacity=".7"/>
<rect x="941" y="110" width="5" height="5" fill="#9a7050" opacity=".7"/>
<rect x="960" y="69" width="5" height="5" fill="#94786a" opacity=".7"/>
<rect x="944" y="98" width="5" height="5" fill="#7a5e4e" opacity=".7"/>
<rect x="939" y="84" width="5" height="5" fill="#94786a" opacity=".7"/>
<rect x="1001" y="111" width="5" height="5" fill="#9a7050" opacity=".7"/>
<rect x="1001" y="112" width="5" height="5" fill="#7a5e4e" opacity=".7"/>
<rect x="986" y="72" width="5" height="5" fill="#866a5a" opacity=".7"/>
<rect x="913" y="103" width="5" height="5" fill="#7a5e4e" opacity=".7"/>
<rect x="919" y="107" width="5" height="5" fill="#b49c8c" opacity=".7"/>
<rect x="932" y="98" width="5" height="5" fill="#7a5e4e" opacity=".7"/>
<rect x="997" y="88" width="5" height="5" fill="#866a5a" opacity=".7"/>
<rect x="1008" y="85" width="5" height="5" fill="#866a5a" opacity=".7"/>
<rect x="956" y="118" width="5" height="5" fill="#7a5e4e" opacity=".7"/>
<rect x="944" y="71" width="5" height="5" fill="#a88c7c" opacity=".7"/>
<rect x="1020" y="123" width="5" height="5" fill="#7a5e4e" opacity=".7"/>
<rect x="985" y="111" width="5" height="5" fill="#94786a" opacity=".7"/>
<rect x="942" y="106" width="5" height="5" fill="#a88c7c" opacity=".7"/>
<rect x="1024" y="67" width="5" height="5" fill="#7a5e4e" opacity=".7"/>
<rect x="954" y="104" width="5" height="5" fill="#9a7050" opacity=".7"/>
<rect x="961" y="128" width="5" height="5" fill="#a88c7c" opacity=".7"/>
<rect x="983" y="124" width="5" height="5" fill="#9a7050" opacity=".7"/>
<rect x="970" y="84" width="5" height="5" fill="#7a5e4e" opacity=".7"/>
<rect x="1011" y="72" width="5" height="5" fill="#a88c7c" opacity=".7"/>
<rect x="914" y="89" width="5" height="5" fill="#7a5e4e" opacity=".7"/>
<rect x="965" y="102" width="5" height="5" fill="#9a7050" opacity=".7"/>
<rect x="959" y="104" width="5" height="5" fill="#a88c7c" opacity=".7"/>
<rect x="912" y="86" width="5" height="5" fill="#a88c7c" opacity=".7"/>
<rect x="931" y="85" width="5" height="5" fill="#9a7050" opacity=".7"/>
<rect x="1022" y="99" width="5" height="5" fill="#a88c7c" opacity=".7"/>
<rect x="1002" y="92" width="5" height="5" fill="#a88c7c" opacity=".7"/>
<rect x="973" y="84" width="5" height="5" fill="#a88c7c" opacity=".7"/>
<rect x="926" y="75" width="5" height="5" fill="#b49c8c" opacity=".7"/>
<rect x="931" y="85" width="5" height="5" fill="#a88c7c" opacity=".7"/>
<rect x="974" y="102" width="5" height="5" fill="#b49c8c" opacity=".7"/>
<rect x="953" y="118" width="5" height="5" fill="#7a5e4e" opacity=".7"/>
<rect x="948" y="128" width="5" height="5" fill="#9a7050" opacity=".7"/>
<rect x="1017" y="117" width="5" height="5" fill="#7a5e4e" opacity=".7"/>
<rect x="974" y="107" width="5" height="5" fill="#866a5a" opacity=".7"/>
<rect x="976" y="106" width="5" height="5" fill="#a88c7c" opacity=".7"/>
<rect x="1012" y="86" width="5" height="5" fill="#b49c8c" opacity=".7"/>
<rect x="931" y="129" width="5" height="5" fill="#b49c8c" opacity=".7"/>
<rect x="1002" y="125" width="5" height="5" fill="#94786a" opacity=".7"/>
<rect x="916" y="116" width="5" height="5" fill="#94786a" opacity=".7"/>
<rect x="990" y="90" width="5" height="5" fill="#94786a" opacity=".7"/>
<rect x="986" y="128" width="5" height="5" fill="#b49c8c" opacity=".7"/>
<rect x="963" y="120" width="5" height="5" fill="#94786a" opacity=".7"/>
<rect x="945" y="113" width="5" height="5" fill="#866a5a" opacity=".7"/>
<rect x="996" y="125" width="5" height="5" fill="#94786a" opacity=".7"/>
<rect x="993" y="101" width="5" height="5" fill="#9a7050" opacity=".7"/>
<rect x="1010" y="116" width="5" height="5" fill="#7a5e4e" opacity=".7"/>
<rect x="979" y="95" width="5" height="5" fill="#a88c7c" opacity=".7"/>
<rect x="1013" y="119" width="5" height="5" fill="#94786a" opacity=".7"/>
<rect x="983" y="112" width="5" height="5" fill="#9a7050" opacity=".7"/>
<rect x="1022" y="67" width="5" height="5" fill="#7a5e4e" opacity=".7"/>
<rect x="943" y="127" width="5" height="5" fill="#a88c7c" opacity=".7"/>
<rect x="958" y="102" width="5" height="5" fill="#866a5a" opacity=".7"/>
<rect x="925" y="81" width="5" height="5" fill="#9a7050" opacity=".7"/>
<rect x="926" y="110" width="5" height="5" fill="#9a7050" opacity=".7"/>
<rect x="982" y="121" width="5" height="5" fill="#866a5a" opacity=".7"/>
<rect x="1018" y="68" width="5" height="5" fill="#866a5a" opacity=".7"/>
<rect x="994" y="116" width="5" height="5" fill="#a88c7c" opacity=".7"/>
<rect x="954" y="125" width="5" height="5" fill="#a88c7c" opacity=".7"/>
<rect x="928" y="100" width="5" height="5" fill="#9a7050" opacity=".7"/>
<rect x="977" y="131" width="5" height="5" fill="#94786a" opacity=".7"/>
<rect x="937" y="86" width="5" height="5" fill="#7a5e4e" opacity=".7"/>
<rect x="995" y="98" width="5" height="5" fill="#866a5a" opacity=".7"/>
<rect x="952" y="125" width="5" height="5" fill="#9a7050" opacity=".7"/>
<rect x="982" y="73" width="5" height="5" fill="#7a5e4e" opacity=".7"/>
<rect x="1003" y="101" width="5" height="5" fill="#9a7050" opacity=".7"/>
<rect x="993" y="98" width="5" height="5" fill="#7a5e4e" opacity=".7"/>
<rect x="927" y="87" width="5" height="5" fill="#9a7050" opacity=".7"/>
<rect x="1006" y="91" width="5" height="5" fill="#7a5e4e" opacity=".7"/>
<rect x="1025" y="109" width="5" height="5" fill="#866a5a" opacity=".7"/>
<rect x="1016" y="96" width="5" height="5" fill="#866a5a" opacity=".7"/>
<rect x="976" y="86" width="5" height="5" fill="#94786a" opacity=".7"/>
<rect x="986" y="109" width="5" height="5" fill="#b49c8c" opacity=".7"/>
<rect x="1015" y="122" width="5" height="5" fill="#7a5e4e" opacity=".7"/>
<rect x="1018" y="104" width="5" height="5" fill="#7a5e4e" opacity=".7"/>
<rect x="980" y="88" width="5" height="5" fill="#9a7050" opacity=".7"/>
<rect x="935" y="94" width="5" height="5" fill="#b49c8c" opacity=".7"/>
<rect x="924" y="88" width="5" height="5" fill="#a88c7c" opacity=".7"/>
<rect x="973" y="127" width="5" height="5" fill="#9a7050" opacity=".7"/>
<rect x="1007" y="130" width="5" height="5" fill="#a88c7c" opacity=".7"/>
<rect x="938" y="88" width="5" height="5" fill="#b49c8c" opacity=".7"/>
<rect x="942" y="68" width="5" height="5" fill="#7a5e4e" opacity=".7"/>
<rect x="959" y="127" width="5" height="5" fill="#7a5e4e" opacity=".7"/>
<rect x="955" y="114" width="5" height="5" fill="#9a7050" opacity=".7"/>
<rect x="977" y="108" width="5" height="5" fill="#a88c7c" opacity=".7"/>
<rect x="965" y="96" width="5" height="5" fill="#94786a" opacity=".7"/>
<rect x="957" y="71" width="5" height="5" fill="#7a5e4e" opacity=".7"/>
<rect x="947" y="108" width="5" height="5" fill="#7a5e4e" opacity=".7"/>
<rect x="1012" y="123" width="5" height="5" fill="#b49c8c" opacity=".7"/>
<rect x="1011" y="80" width="5" height="5" fill="#94786a" opacity=".7"/>
<rect x="996" y="132" width="5" height="5" fill="#866a5a" opacity=".7"/>
<rect x="948" y="104" width="5" height="5" fill="#94786a" opacity=".7"/>
<rect x="955" y="116" width="5" height="5" fill="#94786a" opacity=".7"/>
<rect x="948" y="114" width="5" height="5" fill="#94786a" opacity=".7"/>
<rect x="926" y="119" width="5" height="5" fill="#866a5a" opacity=".7"/>
<rect x="978" y="121" width="5" height="5" fill="#866a5a" opacity=".7"/>
<rect x="964" y="132" width="5" height="5" fill="#94786a" opacity=".7"/>
<rect x="1024" y="129" width="5" height="5" fill="#866a5a" opacity=".7"/>
<rect x="957" y="82" width="5" height="5" fill="#94786a" opacity=".7"/>
<rect x="939" y="66" width="5" height="5" fill="#7a5e4e" opacity=".7"/>
<rect x="941" y="103" width="5" height="5" fill="#94786a" opacity=".7"/>
<rect x="918" y="102" width="5" height="5" fill="#9a7050" opacity=".7"/>
<rect x="1020" y="125" width="5" height="5" fill="#94786a" opacity=".7"/>
<rect x="1016" y="116" width="5" height="5" fill="#94786a" opacity=".7"/>
<rect x="958" y="129" width="5" height="5" fill="#94786a" opacity=".7"/>
<rect x="917" y="102" width="5" height="5" fill="#7a5e4e" opacity=".7"/>
<rect x="986" y="71" width="5" height="5" fill="#94786a" opacity=".7"/>
<rect x="918" y="112" width="5" height="5" fill="#94786a" opacity=".7"/>
<rect x="996" y="118" width="5" height="5" fill="#b49c8c" opacity=".7"/>
<rect x="962" y="80" width="5" height="5" fill="#a88c7c" opacity=".7"/>
<rect x="1017" y="101" width="5" height="5" fill="#94786a" opacity=".7"/>
<rect x="1019" y="87" width="5" height="5" fill="#9a7050" opacity=".7"/>
<rect x="965" y="118" width="5" height="5" fill="#94786a" opacity=".7"/>
<rect x="957" y="103" width="5" height="5" fill="#a88c7c" opacity=".7"/>
<rect x="973" y="123" width="5" height="5" fill="#866a5a" opacity=".7"/>
<rect x="927" y="128" width="5" height="5" fill="#b49c8c" opacity=".7"/>
<rect x="950" y="92" width="5" height="5" fill="#7a5e4e" opacity=".7"/>
<rect x="944" y="77" width="5" height="5" fill="#9a7050" opacity=".7"/>
<rect x="921" y="113" width="5" height="5" fill="#a88c7c" opacity=".7"/>
<rect x="925" y="95" width="5" height="5" fill="#7a5e4e" opacity=".7"/>
<rect x="1010" y="125" width="5" height="5" fill="#a88c7c" opacity=".7"/>
<rect x="993" y="132" width="5" height="5" fill="#866a5a" opacity=".7"/>
<rect x="979" y="89" width="5" height="5" fill="#866a5a" opacity=".7"/>
<rect x="917" y="82" width="5" height="5" fill="#a88c7c" opacity=".7"/>
<rect x="978" y="132" width="5" height="5" fill="#a88c7c" opacity=".7"/>
<rect x="1018" y="108" width="5" height="5" fill="#a88c7c" opacity=".7"/>
<rect x="922" y="79" width="5" height="5" fill="#b49c8c" opacity=".7"/>
<rect x="978" y="72" width="5" height="5" fill="#b49c8c" opacity=".7"/>
<rect x="947" y="97" width="5" height="5" fill="#a88c7c" opacity=".7"/>
<rect x="1002" y="96" width="5" height="5" fill="#a88c7c" opacity=".7"/>
<rect x="948" y="119" width="5" height="5" fill="#a88c7c" opacity=".7"/>
<rect x="972" y="111" width="5" height="5" fill="#866a5a" opacity=".7"/>
<rect x="963" y="127" width="5" height="5" fill="#866a5a" opacity=".7"/>
<rect x="919" y="81" width="5" height="5" fill="#94786a" opacity=".7"/>
<rect x="1009" y="70" width="5" height="5" fill="#9a7050" opacity=".7"/>
<rect x="998" y="97" width="5" height="5" fill="#b49c8c" opacity=".7"/>
<rect x="954" y="73" width="5" height="5" fill="#b49c8c" opacity=".7"/>
<rect x="968" y="128" width="5" height="5" fill="#94786a" opacity=".7"/>
<rect x="974" y="126" width="5" height="5" fill="#7a5e4e" opacity=".7"/>
<rect x="929" y="90" width="5" height="5" fill="#7a5e4e" opacity=".7"/>
<rect x="983" y="115" width="5" height="5" fill="#a88c7c" opacity=".7"/>
<rect x="962" y="120" width="5" height="5" fill="#b49c8c" opacity=".7"/>
<rect x="968" y="98" width="5" height="5" fill="#7a5e4e" opacity=".7"/>
<rect x="986" y="124" width="5" height="5" fill="#a88c7c" opacity=".7"/>
<rect x="936" y="122" width="5" height="5" fill="#94786a" opacity=".7"/>
<rect x="918" y="85" width="5" height="5" fill="#b49c8c" opacity=".7"/>
<rect x="931" y="96" width="5" height="5" fill="#9a7050" opacity=".7"/>
<rect x="964" y="92" width="5" height="5" fill="#7a5e4e" opacity=".7"/>
<rect x="914" y="94" width="5" height="5" fill="#866a5a" opacity=".7"/>
<rect x="1024" y="129" width="5" height="5" fill="#a88c7c" opacity=".7"/>
<rect x="933" y="123" width="5" height="5" fill="#b49c8c" opacity=".7"/>
<rect x="948" y="78" width="5" height="5" fill="#9a7050" opacity=".7"/>
<rect x="982" y="101" width="5" height="5" fill="#94786a" opacity=".7"/>
<rect x="933" y="126" width="5" height="5" fill="#a88c7c" opacity=".7"/>
<rect x="1021" y="115" width="5" height="5" fill="#7a5e4e" opacity=".7"/>
<rect x="917" y="110" width="5" height="5" fill="#866a5a" opacity=".7"/>
<rect x="981" y="120" width="5" height="5" fill="#866a5a" opacity=".7"/>
<rect x="1023" y="122" width="5" height="5" fill="#9a7050" opacity=".7"/>
<rect x="961" y="132" width="5" height="5" fill="#866a5a" opacity=".7"/>
<rect x="1016" y="115" width="5" height="5" fill="#9a7050" opacity=".7"/>
<rect x="962" y="105" width="5" height="5" fill="#a88c7c" opacity=".7"/>
<rect x="1006" y="110" width="5" height="5" fill="#9a7050" opacity=".7"/>
<rect x="964" y="103" width="5" height="5" fill="#7a5e4e" opacity=".7"/>
<rect x="964" y="84" width="5" height="5" fill="#94786a" opacity=".7"/>
<rect x="918" y="94" width="5" height="5" fill="#866a5a" opacity=".7"/>
<rect x="971" y="123" width="5" height="5" fill="#9a7050" opacity=".7"/>
<rect x="966" y="122" width="5" height="5" fill="#866a5a" opacity=".7"/>
<rect x="1002" y="72" width="5" height="5" fill="#866a5a" opacity=".7"/>
<rect x="955" y="125" width="5" height="5" fill="#7a5e4e" opacity=".7"/>
<rect x="1006" y="100" width="5" height="5" fill="#a88c7c" opacity=".7"/>
<rect x="956" y="79" width="5" height="5" fill="#9a7050" opacity=".7"/>
<rect x="948" y="64" width="5" height="5" fill="#7a5e4e" opacity=".7"/>
<rect x="958" y="117" width="5" height="5" fill="#7a5e4e" opacity=".7"/>
<rect x="977" y="132" width="5" height="5" fill="#9a7050" opacity=".7"/>
<rect x="1018" y="130" width="5" height="5" fill="#866a5a" opacity=".7"/>
<rect x="930" y="80" width="5" height="5" fill="#a88c7c" opacity=".7"/>
<rect x="948" y="88" width="5" height="5" fill="#866a5a" opacity=".7"/>
<rect x="950" y="110" width="5" height="5" fill="#7a5e4e" opacity=".7"/>
<rect x="1026" y="98" width="5" height="5" fill="#9a7050" opacity=".7"/>
<rect x="945" y="64" width="5" height="5" fill="#a88c7c" opacity=".7"/>
<rect x="949" y="93" width="5" height="5" fill="#9a7050" opacity=".7"/>
<rect x="962" y="129" width="5" height="5" fill="#a88c7c" opacity=".7"/>
<rect x="946" y="123" width="5" height="5" fill="#9a7050" opacity=".7"/>
<rect x="955" y="80" width="5" height="5" fill="#7a5e4e" opacity=".7"/>
<rect x="955" y="70" width="5" height="5" fill="#866a5a" opacity=".7"/>
<rect x="946" y="73" width="5" height="5" fill="#866a5a" opacity=".7"/>
<rect x="1010" y="70" width="5" height="5" fill="#9a7050" opacity=".7"/>
<rect x="981" y="78" width="5" height="5" fill="#9a7050" opacity=".7"/>
<rect x="930" y="61" width="4" height="4" fill="#e6e2d8" opacity=".8"/>
<rect x="904" y="91" width="4" height="4" fill="#b8b0a4" opacity=".8"/>
<rect x="908" y="118" width="4" height="4" fill="#e6e2d8" opacity=".8"/>
<rect x="907" y="82" width="4" height="4" fill="#dcd8cc" opacity=".8"/>
<rect x="940" y="58" width="4" height="4" fill="#b8b0a4" opacity=".8"/>
<rect x="911" y="123" width="4" height="4" fill="#e6e2d8" opacity=".8"/>
<rect x="911" y="123" width="4" height="4" fill="#e6e2d8" opacity=".8"/>
<rect x="904" y="89" width="4" height="4" fill="#e6e2d8" opacity=".8"/>
<rect x="945" y="140" width="4" height="4" fill="#e6e2d8" opacity=".8"/>
<rect x="929" y="137" width="4" height="4" fill="#dcd8cc" opacity=".8"/>
<rect x="914" y="71" width="4" height="4" fill="#e6e2d8" opacity=".8"/>
<rect x="942" y="140" width="4" height="4" fill="#b8b0a4" opacity=".8"/>
<rect x="903" y="94" width="4" height="4" fill="#b8b0a4" opacity=".8"/>
<rect x="920" y="132" width="4" height="4" fill="#dcd8cc" opacity=".8"/>
<rect x="910" y="76" width="4" height="4" fill="#b8b0a4" opacity=".8"/>
<rect x="914" y="127" width="4" height="4" fill="#b8b0a4" opacity=".8"/>
<rect x="942" y="140" width="4" height="4" fill="#b8b0a4" opacity=".8"/>
<rect x="903" y="100" width="4" height="4" fill="#dcd8cc" opacity=".8"/>
<rect x="935" y="139" width="4" height="4" fill="#b8b0a4" opacity=".8"/>
<rect x="920" y="132" width="4" height="4" fill="#b8b0a4" opacity=".8"/>
<rect x="929" y="137" width="4" height="4" fill="#e6e2d8" opacity=".8"/>
<rect x="943" y="58" width="4" height="4" fill="#dcd8cc" opacity=".8"/>
<rect x="906" y="84" width="4" height="4" fill="#e6e2d8" opacity=".8"/>
<rect x="905" y="86" width="4" height="4" fill="#b8b0a4" opacity=".8"/>
<rect x="908" y="79" width="4" height="4" fill="#dcd8cc" opacity=".8"/>
<rect x="928" y="62" width="4" height="4" fill="#b8b0a4" opacity=".8"/>
<rect x="917" y="68" width="4" height="4" fill="#dcd8cc" opacity=".8"/>
<rect x="930" y="137" width="4" height="4" fill="#e6e2d8" opacity=".8"/>
<rect x="922" y="64" width="4" height="4" fill="#b8b0a4" opacity=".8"/>
<rect x="921" y="132" width="4" height="4" fill="#b8b0a4" opacity=".8"/>
<rect x="909" y="78" width="4" height="4" fill="#dcd8cc" opacity=".8"/>
<rect x="905" y="110" width="4" height="4" fill="#b8b0a4" opacity=".8"/>
<rect x="922" y="133" width="4" height="4" fill="#dcd8cc" opacity=".8"/>
<rect x="926" y="136" width="4" height="4" fill="#e6e2d8" opacity=".8"/>
<rect x="903" y="96" width="4" height="4" fill="#e6e2d8" opacity=".8"/>
<rect x="919" y="131" width="4" height="4" fill="#e6e2d8" opacity=".8"/>
<rect x="920" y="132" width="4" height="4" fill="#dcd8cc" opacity=".8"/>
<rect x="935" y="139" width="4" height="4" fill="#b8b0a4" opacity=".8"/>
<rect x="910" y="121" width="4" height="4" fill="#e6e2d8" opacity=".8"/>
<rect x="918" y="131" width="4" height="4" fill="#e6e2d8" opacity=".8"/>
<rect x="943" y="140" width="4" height="4" fill="#e6e2d8" opacity=".8"/>
<rect x="904" y="91" width="4" height="4" fill="#e6e2d8" opacity=".8"/>
<rect x="931" y="138" width="4" height="4" fill="#b8b0a4" opacity=".8"/>
<rect x="905" y="88" width="4" height="4" fill="#e6e2d8" opacity=".8"/>
<rect x="906" y="115" width="4" height="4" fill="#e6e2d8" opacity=".8"/>
<rect x="904" y="109" width="4" height="4" fill="#e6e2d8" opacity=".8"/>
<rect x="910" y="76" width="4" height="4" fill="#dcd8cc" opacity=".8"/>
<rect x="903" y="94" width="4" height="4" fill="#e6e2d8" opacity=".8"/>
<rect x="935" y="59" width="4" height="4" fill="#dcd8cc" opacity=".8"/>
<rect x="916" y="69" width="4" height="4" fill="#dcd8cc" opacity=".8"/>
<rect x="905" y="112" width="4" height="4" fill="#dcd8cc" opacity=".8"/>
<rect x="903" y="103" width="4" height="4" fill="#e6e2d8" opacity=".8"/>
<rect x="903" y="100" width="4" height="4" fill="#b8b0a4" opacity=".8"/>
<rect x="914" y="126" width="4" height="4" fill="#b8b0a4" opacity=".8"/>
<rect x="945" y="58" width="4" height="4" fill="#e6e2d8" opacity=".8"/>
<rect x="909" y="78" width="4" height="4" fill="#b8b0a4" opacity=".8"/>
<rect x="939" y="140" width="4" height="4" fill="#b8b0a4" opacity=".8"/>
<rect x="942" y="140" width="4" height="4" fill="#b8b0a4" opacity=".8"/>
<rect x="924" y="63" width="4" height="4" fill="#b8b0a4" opacity=".8"/>
<rect x="903" y="101" width="4" height="4" fill="#dcd8cc" opacity=".8"/>
<rect x="945" y="136" width="5" height="4" fill="#b8b2a8" opacity=".8"/>
<rect x="951" y="138" width="5" height="4" fill="#b8b2a8" opacity=".8"/>
<rect x="957" y="138" width="5" height="4" fill="#dcd8ce" opacity=".8"/>
<rect x="963" y="137" width="5" height="4" fill="#dcd8ce" opacity=".8"/>
<rect x="969" y="137" width="5" height="4" fill="#b8b2a8" opacity=".8"/>
<rect x="975" y="139" width="5" height="4" fill="#d0ccc2" opacity=".8"/>
<rect x="981" y="138" width="5" height="4" fill="#d0ccc2" opacity=".8"/>
<rect x="987" y="139" width="5" height="4" fill="#d0ccc2" opacity=".8"/>
<rect x="993" y="137" width="5" height="4" fill="#b8b2a8" opacity=".8"/>
<rect x="999" y="136" width="5" height="4" fill="#b8b2a8" opacity=".8"/>
<rect x="1005" y="137" width="5" height="4" fill="#b8b2a8" opacity=".8"/>
<rect x="1011" y="138" width="5" height="4" fill="#b8b2a8" opacity=".8"/>
<rect x="1017" y="139" width="5" height="4" fill="#d0ccc2" opacity=".8"/>
<rect x="1023" y="136" width="5" height="4" fill="#d0ccc2" opacity=".8"/>
<path d="M950 90 Q958 80 976 84 Q990 82 1000 88 Q1004 98 992 104 Q980 110 968 110 Q952 108 950 90 Z" fill="#e03020" />
<polygon points="990.0,88.0 1004.0,86.0 1008.0,98.0 998.0,102.0" fill="#f05030" opacity=".8"/>
<circle cx="1003.0" cy="93.0" r="5.5" fill="#141414" />
<rect x="958" y="108" width="5" height="5" fill="#b8c040" />
<rect x="969" y="110" width="5" height="5" fill="#d0a030" />
<rect x="970" y="114" width="4" height="4" fill="#3a3020" />
<rect x="925" y="55" width="5" height="5" fill="#3a3a3a" opacity=".65"/>
<rect x="934" y="55" width="5" height="5" fill="#3a3a3a" opacity=".65"/>
<rect x="943" y="55" width="5" height="5" fill="#3a3a3a" opacity=".65"/>
<rect x="952" y="55" width="5" height="5" fill="#3a3a3a" opacity=".65"/>
<rect x="961" y="55" width="5" height="5" fill="#3a3a3a" opacity=".65"/>
<rect x="970" y="55" width="5" height="5" fill="#3a3a3a" opacity=".65"/>
<rect x="979" y="55" width="5" height="5" fill="#3a3a3a" opacity=".65"/>
<rect x="988" y="55" width="5" height="5" fill="#3a3a3a" opacity=".65"/>
<rect x="997" y="55" width="5" height="5" fill="#3a3a3a" opacity=".65"/>
<rect x="1006" y="55" width="5" height="5" fill="#3a3a3a" opacity=".65"/>
<rect x="1015" y="55" width="5" height="5" fill="#3a3a3a" opacity=".65"/>
<rect x="1024" y="55" width="5" height="5" fill="#3a3a3a" opacity=".65"/>
<rect x="930" y="54" width="6" height="4" fill="#8a40a0" opacity=".7"/>
<rect x="850" y="218" width="10" height="8" fill="#c4c8d0" opacity=".6"/>
<rect x="860" y="222" width="8" height="10" fill="#c4c8d0" opacity=".6"/>
<rect x="856" y="232" width="12" height="8" fill="#c4c8d0" opacity=".6"/>
<rect x="870" y="226" width="6" height="6" fill="#c4c8d0" opacity=".6"/>
<rect x="876" y="236" width="8" height="6" fill="#c4c8d0" opacity=".6"/>
<rect x="864" y="244" width="10" height="8" fill="#c4c8d0" opacity=".6"/>
<rect x="880" y="250" width="6" height="6" fill="#c4c8d0" opacity=".6"/>
<rect x="852" y="252" width="6" height="6" fill="#c4c8d0" opacity=".6"/>
<rect x="884" y="212" width="5" height="5" fill="#c4c8d0" opacity=".6"/>
<rect x="890" y="240" width="6" height="8" fill="#c4c8d0" opacity=".6"/>
<polygon points="1040.0,28.0 1140.0,28.0 1142.0,40.0 1136.0,54.0 1042.0,54.0" fill="#ad9a86" filter="url(#soft)" opacity=".9"/>
<rect x="1135" y="50" width="5" height="5" fill="#9e8a78" opacity=".7"/>
<rect x="1080" y="38" width="5" height="5" fill="#a89482" opacity=".7"/>
<rect x="1098" y="41" width="5" height="5" fill="#b8a48e" opacity=".7"/>
<rect x="1104" y="43" width="5" height="5" fill="#9e8a78" opacity=".7"/>
<rect x="1074" y="30" width="5" height="5" fill="#9e8a78" opacity=".7"/>
<rect x="1093" y="42" width="5" height="5" fill="#b8a48e" opacity=".7"/>
<rect x="1128" y="36" width="5" height="5" fill="#a89482" opacity=".7"/>
<rect x="1104" y="36" width="5" height="5" fill="#c4b4a0" opacity=".7"/>
<rect x="1061" y="41" width="5" height="5" fill="#9e8a78" opacity=".7"/>
<rect x="1063" y="35" width="5" height="5" fill="#a89482" opacity=".7"/>
<rect x="1113" y="42" width="5" height="5" fill="#9e8a78" opacity=".7"/>
<rect x="1087" y="49" width="5" height="5" fill="#a89482" opacity=".7"/>
<rect x="1091" y="45" width="5" height="5" fill="#c4b4a0" opacity=".7"/>
<rect x="1118" y="32" width="5" height="5" fill="#b8a48e" opacity=".7"/>
<rect x="1076" y="48" width="5" height="5" fill="#a89482" opacity=".7"/>
<rect x="1050" y="49" width="5" height="5" fill="#c4b4a0" opacity=".7"/>
<rect x="1067" y="32" width="5" height="5" fill="#a89482" opacity=".7"/>
<rect x="1054" y="48" width="5" height="5" fill="#9e8a78" opacity=".7"/>
<rect x="1097" y="49" width="5" height="5" fill="#9e8a78" opacity=".7"/>
<rect x="1064" y="35" width="5" height="5" fill="#b8a48e" opacity=".7"/>
<rect x="1052" y="35" width="5" height="5" fill="#9e8a78" opacity=".7"/>
<rect x="1091" y="43" width="5" height="5" fill="#b8a48e" opacity=".7"/>
<rect x="1134" y="43" width="5" height="5" fill="#b8a48e" opacity=".7"/>
<rect x="1066" y="44" width="5" height="5" fill="#9e8a78" opacity=".7"/>
<rect x="1104" y="43" width="5" height="5" fill="#a89482" opacity=".7"/>
<rect x="1055" y="29" width="5" height="5" fill="#9e8a78" opacity=".7"/>
<rect x="1111" y="41" width="5" height="5" fill="#c4b4a0" opacity=".7"/>
<rect x="1069" y="50" width="5" height="5" fill="#b8a48e" opacity=".7"/>
<rect x="1131" y="52" width="5" height="5" fill="#b8a48e" opacity=".7"/>
<rect x="1064" y="35" width="5" height="5" fill="#9e8a78" opacity=".7"/>
<rect x="1067" y="46" width="5" height="5" fill="#b8a48e" opacity=".7"/>
<rect x="1055" y="41" width="5" height="5" fill="#9e8a78" opacity=".7"/>
<rect x="1127" y="39" width="5" height="5" fill="#b8a48e" opacity=".7"/>
<rect x="1072" y="36" width="5" height="5" fill="#a89482" opacity=".7"/>
<rect x="1117" y="33" width="5" height="5" fill="#c4b4a0" opacity=".7"/>
<rect x="1134" y="38" width="5" height="5" fill="#a89482" opacity=".7"/>
<rect x="1051" y="46" width="5" height="5" fill="#a89482" opacity=".7"/>
<rect x="1138" y="33" width="5" height="5" fill="#b8a48e" opacity=".7"/>
<rect x="1064" y="30" width="5" height="5" fill="#b8a48e" opacity=".7"/>
<rect x="1105" y="47" width="5" height="5" fill="#c4b4a0" opacity=".7"/>
<rect x="1046" y="40" width="4" height="8" fill="#222" />
<rect x="1035" y="50" width="6" height="4" fill="#cfcac2" />
<rect x="1228" y="28" width="16" height="26" fill="#c09a92" opacity=".8"/>
<rect x="1240" y="28" width="8" height="4" fill="#8a0ca8" />
<rect x="1246" y="30" width="4" height="3" fill="#8a0ca8" />
<rect x="1244" y="34" width="5" height="5" fill="#e8e4f0" />
<rect x="1246" y="39" width="3" height="5" fill="#5a2a70" />
<rect x="1150" y="44" width="12" height="5" fill="#8c8e94" opacity=".7"/>
<rect x="1160" y="40" width="8" height="4" fill="#9a9ca0" opacity=".7"/>
<rect x="1180" y="36" width="6" height="6" fill="#9a9ca0" opacity=".7"/>
<rect x="1200" y="42" width="8" height="8" fill="#8c8e94" opacity=".7"/>
<rect x="1254" y="30" width="10" height="8" fill="#9a9ca0" opacity=".7"/>
<rect x="1290" y="40" width="8" height="6" fill="#8c8e94" opacity=".7"/>
<rect x="1326" y="44" width="6" height="6" fill="#9a9ca0" opacity=".7"/>
<rect x="1340" y="36" width="8" height="8" fill="#9a9ca0" opacity=".7"/>
<rect x="1270" y="46" width="10" height="6" fill="#8c8e94" opacity=".7"/>
<rect x="1374" y="50" width="5" height="7" fill="#8a0ca8" />
<polygon points="294.0,299.0 402.0,299.0 402.0,332.0 400.0,358.0 405.0,395.0 408.0,430.0 412.0,463.0 409.0,471.0 385.0,475.0 381.0,420.0 376.0,341.0 372.0,312.0 294.0,309.0" fill="#151a2a" stroke="#151a2a" stroke-width="2" stroke-linejoin="round"/>
<polygon points="294.0,305.0 340.0,306.0 372.0,310.0 377.0,340.0 379.0,392.0 381.0,425.0 383.0,450.0 382.0,470.0 380.0,490.0 379.0,494.0 294.0,498.0" fill="#b82a2c" />
<polygon points="294.0,318.0 340.0,316.0 368.0,312.0 370.0,333.0 372.0,358.0 373.0,392.0 373.0,451.0 375.0,488.0 360.0,494.0 294.0,498.0" fill="#e45656" />
<rect x="334" y="449" width="4" height="3" fill="#d24848" opacity=".6"/>
<rect x="351" y="339" width="3" height="4" fill="#cc4040" opacity=".6"/>
<rect x="315" y="423" width="5" height="3" fill="#d24848" opacity=".6"/>
<rect x="365" y="340" width="4" height="3" fill="#c83838" opacity=".6"/>
<rect x="305" y="356" width="3" height="3" fill="#ea6666" opacity=".6"/>
<rect x="346" y="469" width="3" height="3" fill="#cc4040" opacity=".6"/>
<rect x="374" y="364" width="4" height="3" fill="#cc4040" opacity=".6"/>
<rect x="304" y="377" width="3" height="5" fill="#cc4040" opacity=".6"/>
<rect x="311" y="352" width="4" height="5" fill="#cc4040" opacity=".6"/>
<rect x="305" y="357" width="5" height="3" fill="#cc4040" opacity=".6"/>
<rect x="355" y="369" width="5" height="4" fill="#c83838" opacity=".6"/>
<rect x="325" y="488" width="5" height="3" fill="#cc4040" opacity=".6"/>
<rect x="341" y="469" width="4" height="5" fill="#c83838" opacity=".6"/>
<rect x="333" y="385" width="5" height="5" fill="#c83838" opacity=".6"/>
<rect x="310" y="420" width="4" height="5" fill="#c83838" opacity=".6"/>
<rect x="297" y="344" width="5" height="4" fill="#d24848" opacity=".6"/>
<rect x="339" y="406" width="4" height="5" fill="#cc4040" opacity=".6"/>
<rect x="319" y="363" width="5" height="3" fill="#ea6666" opacity=".6"/>
<rect x="327" y="461" width="3" height="4" fill="#d24848" opacity=".6"/>
<rect x="316" y="465" width="5" height="4" fill="#ea6666" opacity=".6"/>
<rect x="321" y="421" width="5" height="3" fill="#cc4040" opacity=".6"/>
<rect x="365" y="438" width="4" height="5" fill="#c83838" opacity=".6"/>
<rect x="317" y="370" width="4" height="4" fill="#ea6666" opacity=".6"/>
<rect x="359" y="438" width="5" height="3" fill="#cc4040" opacity=".6"/>
<rect x="313" y="363" width="3" height="4" fill="#c83838" opacity=".6"/>
<rect x="370" y="416" width="4" height="4" fill="#cc4040" opacity=".6"/>
<rect x="337" y="368" width="4" height="3" fill="#c83838" opacity=".6"/>
<rect x="327" y="375" width="3" height="3" fill="#cc4040" opacity=".6"/>
<rect x="337" y="402" width="3" height="3" fill="#cc4040" opacity=".6"/>
<rect x="327" y="384" width="4" height="5" fill="#cc4040" opacity=".6"/>
<rect x="348" y="406" width="3" height="4" fill="#c83838" opacity=".6"/>
<rect x="338" y="321" width="3" height="3" fill="#d24848" opacity=".6"/>
<rect x="306" y="477" width="5" height="3" fill="#ea6666" opacity=".6"/>
<rect x="353" y="481" width="5" height="3" fill="#d24848" opacity=".6"/>
<rect x="333" y="461" width="4" height="5" fill="#ea6666" opacity=".6"/>
<rect x="311" y="420" width="4" height="3" fill="#cc4040" opacity=".6"/>
<rect x="301" y="416" width="5" height="4" fill="#cc4040" opacity=".6"/>
<rect x="345" y="376" width="4" height="3" fill="#c83838" opacity=".6"/>
<rect x="353" y="476" width="5" height="3" fill="#ea6666" opacity=".6"/>
<rect x="357" y="331" width="5" height="5" fill="#c83838" opacity=".6"/>
<rect x="371" y="405" width="3" height="4" fill="#ea6666" opacity=".6"/>
<rect x="359" y="465" width="5" height="3" fill="#c83838" opacity=".6"/>
<rect x="339" y="363" width="4" height="5" fill="#ea6666" opacity=".6"/>
<rect x="333" y="366" width="4" height="4" fill="#ea6666" opacity=".6"/>
<rect x="309" y="370" width="4" height="5" fill="#c83838" opacity=".6"/>
<rect x="301" y="366" width="3" height="4" fill="#d24848" opacity=".6"/>
<rect x="304" y="335" width="3" height="4" fill="#cc4040" opacity=".6"/>
<rect x="376" y="485" width="4" height="4" fill="#ea6666" opacity=".6"/>
<rect x="338" y="350" width="5" height="4" fill="#ea6666" opacity=".6"/>
<rect x="349" y="370" width="3" height="5" fill="#c83838" opacity=".6"/>
<rect x="335" y="386" width="5" height="5" fill="#cc4040" opacity=".6"/>
<rect x="350" y="385" width="4" height="5" fill="#cc4040" opacity=".6"/>
<rect x="348" y="346" width="3" height="4" fill="#c83838" opacity=".6"/>
<rect x="360" y="433" width="5" height="5" fill="#d24848" opacity=".6"/>
<rect x="320" y="461" width="3" height="4" fill="#cc4040" opacity=".6"/>
<rect x="329" y="382" width="3" height="5" fill="#d24848" opacity=".6"/>
<rect x="335" y="414" width="4" height="3" fill="#cc4040" opacity=".6"/>
<rect x="325" y="439" width="5" height="3" fill="#c83838" opacity=".6"/>
<rect x="350" y="466" width="5" height="3" fill="#d24848" opacity=".6"/>
<rect x="298" y="428" width="5" height="4" fill="#d24848" opacity=".6"/>
<rect x="344" y="354" width="3" height="4" fill="#d24848" opacity=".6"/>
<rect x="302" y="406" width="4" height="3" fill="#d24848" opacity=".6"/>
<rect x="372" y="468" width="3" height="5" fill="#ea6666" opacity=".6"/>
<rect x="302" y="485" width="5" height="3" fill="#c83838" opacity=".6"/>
<rect x="375" y="373" width="4" height="5" fill="#d24848" opacity=".6"/>
<rect x="368" y="375" width="3" height="5" fill="#cc4040" opacity=".6"/>
<rect x="335" y="351" width="5" height="4" fill="#c83838" opacity=".6"/>
<rect x="376" y="320" width="5" height="5" fill="#ea6666" opacity=".6"/>
<rect x="301" y="417" width="5" height="5" fill="#ea6666" opacity=".6"/>
<rect x="306" y="470" width="4" height="3" fill="#d24848" opacity=".6"/>
<rect x="353" y="414" width="5" height="5" fill="#ea6666" opacity=".6"/>
<rect x="365" y="330" width="4" height="5" fill="#ea6666" opacity=".6"/>
<rect x="319" y="493" width="3" height="3" fill="#cc4040" opacity=".6"/>
<rect x="333" y="446" width="5" height="3" fill="#d24848" opacity=".6"/>
<rect x="375" y="382" width="3" height="5" fill="#ea6666" opacity=".6"/>
<rect x="346" y="395" width="4" height="5" fill="#d24848" opacity=".6"/>
<rect x="348" y="440" width="3" height="3" fill="#ea6666" opacity=".6"/>
<rect x="338" y="333" width="4" height="4" fill="#cc4040" opacity=".6"/>
<rect x="301" y="483" width="3" height="5" fill="#cc4040" opacity=".6"/>
<rect x="374" y="415" width="4" height="5" fill="#c83838" opacity=".6"/>
<rect x="305" y="399" width="5" height="4" fill="#d24848" opacity=".6"/>
<rect x="328" y="410" width="4" height="3" fill="#ea6666" opacity=".6"/>
<rect x="352" y="455" width="4" height="3" fill="#d24848" opacity=".6"/>
<rect x="299" y="437" width="4" height="3" fill="#d24848" opacity=".6"/>
<rect x="369" y="356" width="5" height="5" fill="#cc4040" opacity=".6"/>
<rect x="318" y="436" width="4" height="5" fill="#d24848" opacity=".6"/>
<rect x="319" y="398" width="5" height="4" fill="#c83838" opacity=".6"/>
<rect x="330" y="370" width="4" height="3" fill="#d24848" opacity=".6"/>
<rect x="311" y="350" width="5" height="4" fill="#ea6666" opacity=".6"/>
<rect x="369" y="359" width="3" height="3" fill="#c83838" opacity=".6"/>
<rect x="308" y="438" width="5" height="4" fill="#cc4040" opacity=".6"/>
<rect x="361" y="437" width="4" height="5" fill="#c83838" opacity=".6"/>
<rect x="355" y="467" width="4" height="4" fill="#cc4040" opacity=".6"/>
<rect x="347" y="334" width="3" height="4" fill="#d24848" opacity=".6"/>
<rect x="326" y="408" width="4" height="3" fill="#ea6666" opacity=".6"/>
<rect x="365" y="329" width="5" height="3" fill="#d24848" opacity=".6"/>
<rect x="373" y="472" width="3" height="4" fill="#cc4040" opacity=".6"/>
<rect x="365" y="352" width="4" height="4" fill="#d24848" opacity=".6"/>
<rect x="346" y="395" width="4" height="5" fill="#ea6666" opacity=".6"/>
<rect x="349" y="405" width="3" height="3" fill="#d24848" opacity=".6"/>
<rect x="366" y="419" width="4" height="5" fill="#d24848" opacity=".6"/>
<rect x="299" y="331" width="5" height="3" fill="#d24848" opacity=".6"/>
<rect x="301" y="345" width="5" height="5" fill="#ea6666" opacity=".6"/>
<rect x="326" y="408" width="3" height="3" fill="#ea6666" opacity=".6"/>
<rect x="313" y="342" width="5" height="3" fill="#c83838" opacity=".6"/>
<rect x="325" y="409" width="4" height="4" fill="#cc4040" opacity=".6"/>
<rect x="330" y="407" width="3" height="4" fill="#d24848" opacity=".6"/>
<rect x="300" y="483" width="5" height="4" fill="#cc4040" opacity=".6"/>
<rect x="340" y="353" width="3" height="3" fill="#ea6666" opacity=".6"/>
<rect x="375" y="407" width="4" height="3" fill="#ea6666" opacity=".6"/>
<rect x="314" y="488" width="3" height="5" fill="#c83838" opacity=".6"/>
<rect x="338" y="320" width="4" height="3" fill="#ea6666" opacity=".6"/>
<rect x="363" y="402" width="3" height="3" fill="#c83838" opacity=".6"/>
<rect x="359" y="421" width="4" height="3" fill="#cc4040" opacity=".6"/>
<rect x="352" y="349" width="5" height="4" fill="#cc4040" opacity=".6"/>
<rect x="353" y="485" width="4" height="4" fill="#cc4040" opacity=".6"/>
<rect x="328" y="475" width="5" height="5" fill="#ea6666" opacity=".6"/>
<rect x="317" y="478" width="3" height="3" fill="#d24848" opacity=".6"/>
<rect x="338" y="321" width="4" height="5" fill="#c83838" opacity=".6"/>
<rect x="371" y="369" width="4" height="5" fill="#ea6666" opacity=".6"/>
<rect x="299" y="320" width="4" height="5" fill="#cc4040" opacity=".6"/>
<rect x="338" y="340" width="3" height="5" fill="#ea6666" opacity=".6"/>
<rect x="303" y="384" width="5" height="4" fill="#cc4040" opacity=".6"/>
<rect x="340" y="485" width="5" height="3" fill="#c83838" opacity=".6"/>
<rect x="333" y="390" width="5" height="5" fill="#cc4040" opacity=".6"/>
<rect x="358" y="396" width="5" height="3" fill="#c83838" opacity=".6"/>
<rect x="324" y="335" width="3" height="5" fill="#ea6666" opacity=".6"/>
<rect x="325" y="400" width="3" height="4" fill="#ea6666" opacity=".6"/>
<rect x="365" y="351" width="4" height="5" fill="#ea6666" opacity=".6"/>
<rect x="332" y="371" width="4" height="4" fill="#cc4040" opacity=".6"/>
<rect x="330" y="357" width="4" height="4" fill="#c83838" opacity=".6"/>
<rect x="325" y="435" width="4" height="3" fill="#ea6666" opacity=".6"/>
<rect x="373" y="369" width="5" height="4" fill="#ea6666" opacity=".6"/>
<rect x="313" y="329" width="3" height="4" fill="#ea6666" opacity=".6"/>
<rect x="370" y="334" width="3" height="3" fill="#d24848" opacity=".6"/>
<rect x="369" y="375" width="5" height="4" fill="#ea6666" opacity=".6"/>
<rect x="368" y="396" width="3" height="5" fill="#cc4040" opacity=".6"/>
<rect x="305" y="410" width="5" height="5" fill="#cc4040" opacity=".6"/>
<rect x="360" y="396" width="5" height="5" fill="#ea6666" opacity=".6"/>
<rect x="369" y="425" width="3" height="4" fill="#ea6666" opacity=".6"/>
<rect x="303" y="449" width="3" height="3" fill="#c83838" opacity=".6"/>
<rect x="299" y="490" width="5" height="5" fill="#cc4040" opacity=".6"/>
<rect x="357" y="367" width="5" height="4" fill="#d24848" opacity=".6"/>
<rect x="334" y="411" width="5" height="3" fill="#ea6666" opacity=".6"/>
<rect x="334" y="459" width="3" height="4" fill="#d24848" opacity=".6"/>
<rect x="369" y="417" width="3" height="3" fill="#cc4040" opacity=".6"/>
<rect x="299" y="452" width="3" height="3" fill="#d24848" opacity=".6"/>
<rect x="297" y="340" width="4" height="4" fill="#cc4040" opacity=".6"/>
<rect x="336" y="341" width="4" height="5" fill="#cc4040" opacity=".6"/>
<rect x="335" y="488" width="3" height="3" fill="#c83838" opacity=".6"/>
<rect x="369" y="475" width="5" height="5" fill="#ea6666" opacity=".6"/>
<rect x="310" y="374" width="3" height="5" fill="#ea6666" opacity=".6"/>
<rect x="323" y="322" width="3" height="4" fill="#d24848" opacity=".6"/>
<rect x="303" y="467" width="5" height="4" fill="#ea6666" opacity=".6"/>
<rect x="370" y="484" width="5" height="5" fill="#d24848" opacity=".6"/>
<rect x="307" y="371" width="3" height="3" fill="#d24848" opacity=".6"/>
<rect x="353" y="376" width="4" height="5" fill="#c83838" opacity=".6"/>
<rect x="341" y="454" width="5" height="3" fill="#d24848" opacity=".6"/>
<rect x="369" y="441" width="4" height="3" fill="#ea6666" opacity=".6"/>
<rect x="315" y="475" width="4" height="5" fill="#cc4040" opacity=".6"/>
<polygon points="294.0,305.0 320.0,304.0 350.0,306.0 368.0,311.0 366.0,318.0 340.0,320.0 320.0,324.0 294.0,328.0" fill="#c02222" opacity=".9"/>
<polygon points="390.0,353.0 398.0,350.0 402.0,360.0 401.0,385.0 394.0,386.0 390.0,370.0" fill="#b8b8bc" />
<rect x="381" y="310" width="5" height="5" fill="#7c1a9e" />
<rect x="384" y="353" width="5" height="5" fill="#7c1a9e" />
<rect x="386" y="360" width="5" height="5" fill="#7c1a9e" />
<rect x="388" y="403" width="5" height="5" fill="#7c1a9e" />
<rect x="391" y="410" width="5" height="5" fill="#7c1a9e" />
<rect x="383" y="420" width="5" height="5" fill="#7c1a9e" />
<rect x="378" y="430" width="5" height="5" fill="#7c1a9e" />
<rect x="396" y="412" width="5" height="5" fill="#7c1a9e" />
<rect x="392" y="425" width="5" height="5" fill="#7c1a9e" />
<rect x="402" y="420" width="5" height="5" fill="#7c1a9e" />
<rect x="410" y="430" width="5" height="5" fill="#7c1a9e" />
<polygon points="403.0,334.0 418.0,333.0 421.0,345.0 414.0,366.0 404.0,372.0" fill="#cfc0c8" opacity=".9"/>
<rect x="384" y="485" width="4" height="3" fill="#d8c8c4" opacity=".8"/>
<rect x="389" y="485" width="4" height="3" fill="#d8c8c4" opacity=".8"/>
<rect x="394" y="485" width="4" height="3" fill="#d8c8c4" opacity=".8"/>
<rect x="399" y="485" width="4" height="3" fill="#d8c8c4" opacity=".8"/>
<rect x="404" y="485" width="4" height="3" fill="#d8c8c4" opacity=".8"/>
<rect x="409" y="485" width="4" height="3" fill="#d8c8c4" opacity=".8"/>
<rect x="414" y="485" width="4" height="3" fill="#d8c8c4" opacity=".8"/>
<rect x="419" y="485" width="4" height="3" fill="#d8c8c4" opacity=".8"/>
<path d="M408 334 L476 482" fill="none" stroke="#eeeeee" stroke-width="3" stroke-dasharray="6 5 10 2 3 7 8 5 10 7 3 3 8 3 6 5 3 7 3 2 6 3 3 3" opacity=".9"/>
<path d="M532 430 L563 476" fill="none" stroke="#eeeeee" stroke-width="3" stroke-dasharray="8 7 6 3 10 7 10 7 10 3 6 7 4 5 6 2 10 3 10 2 8 5 8 3" opacity=".9"/>
<path d="M584 350 L650 472" fill="none" stroke="#eeeeee" stroke-width="3" stroke-dasharray="6 7 3 2 6 5 8 3 3 5 10 7 4 5 10 7 6 7 10 5 3 2 3 2" opacity=".9"/>
<path d="M718 425 L740 462" fill="none" stroke="#eeeeee" stroke-width="3" stroke-dasharray="6 7 3 2 4 3 6 2 3 2 10 3 6 3 4 5 8 3 4 2 4 7 3 2" opacity=".9"/>
<path d="M812 434 L824 466" fill="none" stroke="#eeeeee" stroke-width="3" stroke-dasharray="10 2 3 7 4 5 4 5 6 2 10 7 10 5 6 5 8 5 3 3 10 2 6 5" opacity=".9"/>
<path d="M980 424 L1000 462" fill="none" stroke="#eeeeee" stroke-width="3" stroke-dasharray="6 2 3 7 6 7 6 7 4 7 6 5 6 3 3 2 4 3 6 2 10 5 6 5" opacity=".9"/>
<path d="M470 481 L530 479" fill="none" stroke="#eeeeee" stroke-width="2" stroke-dasharray="8 2 4 3 10 2 10 5 8 3 3 5 3 3 3 2 10 2 10 7 4 5 3 7" opacity=".9"/>
<polygon points="445.0,322.0 458.0,321.0 468.0,326.0 480.0,337.0 490.0,351.0 495.0,361.0 503.0,370.0 515.0,382.0 527.0,401.0 533.0,413.0 535.0,423.0 530.0,432.0 522.0,428.0 510.0,400.0 490.0,362.0 470.0,333.0 455.0,327.0" fill="#151a2a" stroke="#151a2a" stroke-width="2" stroke-linejoin="round" />
<polygon points="413.0,350.0 417.0,340.0 425.0,332.0 435.0,327.0 446.0,325.0 456.0,325.0 466.0,329.0 476.0,338.0 486.0,352.0 500.0,375.0 514.0,399.0 524.0,417.0 527.0,427.0 524.0,437.0 514.0,447.0 498.0,454.0 488.0,454.0 480.0,449.0 472.0,439.0 456.0,413.0 441.0,391.0 429.0,377.0 417.0,362.0" fill="#f05a02" stroke="#f05a02" stroke-width="2" stroke-linejoin="round" />
<polygon points="414.0,344.0 420.0,336.0 426.0,340.0 422.0,360.0 428.0,372.0 418.0,366.0" fill="#d03828" opacity=".8"/>
<polygon points="518.0,310.0 539.0,307.0 554.0,316.0 560.0,330.0 568.0,341.0 577.0,355.0 585.0,370.0 596.0,387.0 604.0,399.0 608.0,412.0 606.0,418.0 598.0,410.0 584.0,380.0 560.0,340.0 545.0,318.0" fill="#151a2a" stroke="#151a2a" stroke-width="2" stroke-linejoin="round" />
<polygon points="493.0,337.0 494.0,328.0 500.0,320.0 510.0,314.0 523.0,311.0 535.0,311.0 546.0,316.0 556.0,328.0 569.0,345.0 581.0,366.0 594.0,387.0 602.0,404.0 604.0,414.0 600.0,424.0 587.0,437.0 569.0,444.0 558.0,443.0 550.0,435.0 535.0,414.0 518.0,389.0 504.0,364.0 495.0,349.0" fill="#f05a02" stroke="#f05a02" stroke-width="2" stroke-linejoin="round" />
<rect x="590" y="386" width="4" height="4" fill="#5c7a28" />
<rect x="594" y="392" width="4" height="4" fill="#5c7a28" />
<rect x="598" y="398" width="4" height="4" fill="#5c7a28" />
<rect x="596" y="404" width="4" height="4" fill="#5c7a28" />
<polygon points="1002.0,305.0 1013.0,312.0 1024.0,330.0 1030.0,342.0 1030.0,348.0 1020.0,334.0 1010.0,318.0" fill="#151a2a" stroke="#151a2a" stroke-width="2" stroke-linejoin="round" />
<polygon points="954.0,326.0 959.0,319.0 971.0,311.0 992.0,305.0 1003.0,307.0 1013.0,315.0 1024.0,332.0 1030.0,342.0 1030.0,432.0 1005.0,432.0 994.0,424.0 980.0,401.0 969.0,374.0 957.0,349.0 954.0,336.0" fill="#f06006" stroke="#f06006" stroke-width="2" stroke-linejoin="round" />
<polygon points="845.0,325.0 851.0,317.0 870.0,308.0 892.0,301.0 908.0,300.0 919.0,308.0 930.0,328.0 946.0,358.0 963.0,385.0 974.0,407.0 974.0,419.0 957.0,432.0 930.0,445.0 914.0,452.0 902.0,451.0 894.0,440.0 875.0,399.0 856.0,358.0 845.0,336.0" fill="#b66262" stroke="#b66262" stroke-width="2" stroke-linejoin="round" />
<polygon points="858.0,326.0 875.0,311.0 902.0,307.0 916.0,314.0 935.0,344.0 957.0,385.0 966.0,410.0 963.0,418.0 935.0,437.0 914.0,448.0 906.0,447.0 900.0,437.0 882.0,391.0 864.0,347.0" fill="#d42e02" stroke="#d42e02" stroke-width="2" stroke-linejoin="round" />
<path d="M916 311 L935 338 L957 380 L968 402" fill="none" stroke="#5c1020" stroke-width="4" stroke-linejoin="round" opacity=".85"/>
<polygon points="853.0,328.0 864.0,319.0 875.0,322.0 870.0,341.0 859.0,347.0" fill="#a85a26" stroke="#a85a26" stroke-width="1" stroke-linejoin="round" opacity=".85"/>
<polygon points="738.0,318.0 761.0,304.0 782.0,294.0 801.0,289.0 820.0,294.0 830.0,306.0 839.0,340.0 860.0,378.0 872.0,402.0 876.0,412.0 868.0,420.0 825.0,440.0 810.0,445.0 798.0,431.0 787.0,411.0 759.0,350.0" fill="#b66262" stroke="#b66262" stroke-width="2" stroke-linejoin="round" />
<polygon points="776.0,303.0 782.0,296.0 801.0,290.0 818.0,295.0 828.0,306.0 838.0,341.0 859.0,378.0 871.0,402.0 874.0,411.0 825.0,438.0 815.0,441.0 806.0,428.0 790.0,374.0 774.0,330.0" fill="#d42e02" stroke="#d42e02" stroke-width="2" stroke-linejoin="round" />
<polygon points="766.0,310.0 782.0,299.0 813.0,296.0 829.0,312.0 801.0,332.0 782.0,348.0 770.0,346.0" fill="#a85a26" stroke="#a85a26" stroke-width="2" stroke-linejoin="round" opacity=".9"/>
<path d="M822 306 L838 341 L860 379 L871 402" fill="none" stroke="#5c1020" stroke-width="5" stroke-linejoin="round" opacity=".85"/>
<polygon points="665.0,336.0 679.0,329.0 695.0,315.0 714.0,310.0 731.0,313.0 742.0,325.0 759.0,351.0 782.0,402.0 787.0,412.0 776.0,420.0 737.0,441.0 735.0,442.0 726.0,430.0 707.0,397.0 684.0,357.0" fill="#b66262" stroke="#b66262" stroke-width="2" stroke-linejoin="round" />
<polygon points="688.0,326.0 700.0,316.0 714.0,311.0 731.0,313.0 742.0,325.0 759.0,351.0 782.0,402.0 786.0,411.0 745.0,436.0 738.0,432.0 708.0,372.0" fill="#d42e02" stroke="#d42e02" stroke-width="2" stroke-linejoin="round" />
<polygon points="684.0,330.0 700.0,317.0 721.0,314.0 740.0,329.0 728.0,346.0 712.0,352.0 704.0,365.0" fill="#a85a26" stroke="#a85a26" stroke-width="2" stroke-linejoin="round" opacity=".9"/>
<path d="M735 318 L759 351 L782 402 L787 412" fill="none" stroke="#5c1020" stroke-width="5" stroke-linejoin="round" opacity=".85"/>
<polygon points="583.0,331.0 592.0,325.0 608.0,322.0 626.0,321.0 639.0,323.0 650.0,333.0 663.0,347.0 679.0,367.0 694.0,393.0 703.0,411.0 701.0,424.0 685.0,435.0 668.0,449.0 654.0,453.0 645.0,449.0 634.0,435.0 614.0,402.0 597.0,369.0 586.0,347.0" fill="#b66262" stroke="#b66262" stroke-width="2" stroke-linejoin="round" />
<polygon points="588.0,336.0 608.0,327.0 626.0,326.0 638.0,329.0 660.0,350.0 676.0,370.0 692.0,396.0 699.0,412.0 697.0,422.0 684.0,432.0 666.0,446.0 654.0,449.0 646.0,445.0 636.0,432.0 616.0,400.0 598.0,366.0 589.0,347.0" fill="#d42e02" stroke="#d42e02" stroke-width="2" stroke-linejoin="round" />
<polygon points="589.0,334.0 610.0,326.0 640.0,326.0 663.0,358.0 637.0,366.0 604.0,364.0" fill="#a85a26" stroke="#a85a26" stroke-width="2" stroke-linejoin="round" opacity=".85"/>
<path d="M641 327 L663 348 L693 397 L702 412" fill="none" stroke="#5c1020" stroke-width="5" stroke-linejoin="round" opacity=".85"/>
<rect x="836" y="292" width="6" height="8" fill="#f0eef4" />
<rect x="840" y="297" width="5" height="5" fill="#e8e4f0" />
<rect x="843" y="300" width="5" height="4" fill="#7a1a9a" />
<rect x="838" y="303" width="5" height="4" fill="#5a1080" />
<path d="M977 423 L940 440 L908 456 L891 432 L877 409 L846 425 L815 443 L802 428 L789 411 L762 430 L732 447 L722 434 L709 418 L678 439 L653 462 L615 400 L577 339 L589 322 L609 318 L636 317 L674 332 L676 348 L698 314 L726 307 L755 305 L785 295 L813 282 L840 324 L872 310 L908 296" fill="none" stroke="#f0b020" stroke-width="1.6" stroke-linejoin="round"/>
<circle cx="599.0" cy="320.0" r="4" fill="#f6d890" />
<circle cx="623.0" cy="317.0" r="4" fill="#f6d890" />
<circle cx="659.0" cy="331.0" r="4" fill="#f6d890" />
<circle cx="687.0" cy="322.0" r="4" fill="#f6d890" />
<circle cx="712.0" cy="311.0" r="4" fill="#f6d890" />
<circle cx="736.0" cy="316.0" r="4" fill="#f6d890" />
<circle cx="753.0" cy="319.0" r="4" fill="#f6d890" />
<circle cx="785.0" cy="295.0" r="4" fill="#f6d890" />
<circle cx="824.0" cy="302.0" r="4" fill="#f6d890" />
<circle cx="872.0" cy="310.0" r="4" fill="#f6d890" />
<circle cx="944.0" cy="360.0" r="4" fill="#f6d890" />
<circle cx="940.0" cy="440.0" r="4" fill="#f6d890" />
<circle cx="891.0" cy="432.0" r="4" fill="#f6d890" />
<circle cx="846.0" cy="425.0" r="4" fill="#f6d890" />
<circle cx="802.0" cy="428.0" r="4" fill="#f6d890" />
<circle cx="762.0" cy="430.0" r="4" fill="#f6d890" />
<circle cx="722.0" cy="434.0" r="4" fill="#f6d890" />
<circle cx="679.0" cy="438.0" r="4" fill="#f6d890" />
<circle cx="615.0" cy="400.0" r="4" fill="#f6d890" />
<circle cx="581.0" cy="329.0" r="4" fill="#f6d890" />
<circle cx="577.0" cy="339.0" r="6.2" fill="#f6ee1a" />
<circle cx="589.0" cy="322.0" r="6.2" fill="#f6ee1a" />
<circle cx="609.0" cy="318.0" r="6.2" fill="#f6ee1a" />
<circle cx="636.0" cy="317.0" r="6.2" fill="#f6ee1a" />
<circle cx="674.0" cy="332.0" r="6.2" fill="#f6ee1a" />
<circle cx="676.0" cy="348.0" r="6.2" fill="#f6ee1a" />
<circle cx="698.0" cy="314.0" r="6.2" fill="#f6ee1a" />
<circle cx="726.0" cy="307.0" r="6.2" fill="#f6ee1a" />
<circle cx="755.0" cy="305.0" r="6.2" fill="#f6ee1a" />
<circle cx="752.0" cy="329.0" r="6.2" fill="#f6ee1a" />
<circle cx="813.0" cy="282.0" r="6.2" fill="#f6ee1a" />
<circle cx="840.0" cy="324.0" r="6.2" fill="#f6ee1a" />
<circle cx="908.0" cy="296.0" r="6.2" fill="#f6ee1a" />
<circle cx="977.0" cy="423.0" r="6.2" fill="#f6ee1a" />
<circle cx="908.0" cy="456.0" r="6.2" fill="#f6ee1a" />
<circle cx="877.0" cy="409.0" r="6.2" fill="#f6ee1a" />
<circle cx="815.0" cy="443.0" r="6.2" fill="#f6ee1a" />
<circle cx="789.0" cy="411.0" r="6.2" fill="#f6ee1a" />
<circle cx="732.0" cy="447.0" r="6.2" fill="#f6ee1a" />
<circle cx="709.0" cy="418.0" r="6.2" fill="#f6ee1a" />
<circle cx="653.0" cy="462.0" r="6.2" fill="#f6ee1a" />
<polygon points="346.0,497.0 358.0,497.0 408.0,766.0 394.0,766.0" fill="#b84848" />
<rect x="294" y="697" width="15" height="69" fill="#de4c4c" />
<rect x="310" y="700" width="4" height="4" fill="#6a1a8a" />
<rect x="313" y="708" width="4" height="4" fill="#6a1a8a" />
<rect x="315" y="720" width="4" height="4" fill="#6a1a8a" />
<rect x="316" y="740" width="4" height="4" fill="#6a1a8a" />
<rect x="312" y="752" width="4" height="4" fill="#6a1a8a" />
<polygon points="441.0,638.0 465.0,631.0 529.0,628.0 600.0,624.0 671.0,621.0 731.0,621.0 737.0,634.0 726.0,646.0 717.0,660.0 707.0,686.0 710.0,734.0 710.0,766.0 418.0,766.0 418.0,653.0 431.0,643.0" fill="#151a2a" />
<polygon points="431.0,643.0 529.0,636.0 671.0,634.0 714.0,638.0 700.0,662.0 695.0,686.0 695.0,766.0 418.0,766.0 418.0,653.0" fill="#8c1a1e" />
<polygon points="419.0,653.0 529.0,651.0 657.0,647.0 657.0,766.0 419.0,766.0" fill="url(#bldg)" />
<polygon points="420.0,653.0 529.0,650.0 671.0,646.0 660.0,675.0 600.0,690.0 420.0,695.0" fill="#a65a48" opacity=".55"/>
<polygon points="419.0,660.0 450.0,680.0 470.0,740.0 440.0,766.0 419.0,766.0" fill="#6e4a78" opacity=".45"/>
<polygon points="671.0,636.0 700.0,636.0 716.0,640.0 712.0,660.0 710.0,686.0 702.0,710.0 690.0,734.0 682.0,734.0 681.0,686.0 676.0,660.0" fill="#c82c28" />
<polygon points="657.0,663.0 668.0,650.0 683.0,648.0 683.0,686.0 681.0,766.0 657.0,766.0" fill="#760c16" />
<rect x="653" y="670" width="4" height="4" fill="#760c16" />
<rect x="662" y="687" width="4" height="4" fill="#760c16" />
<rect x="661" y="741" width="4" height="4" fill="#760c16" />
<rect x="652" y="675" width="4" height="4" fill="#760c16" />
<rect x="658" y="680" width="4" height="4" fill="#760c16" />
<rect x="659" y="733" width="4" height="4" fill="#760c16" />
<rect x="654" y="713" width="4" height="4" fill="#760c16" />
<rect x="654" y="753" width="4" height="4" fill="#760c16" />
<rect x="658" y="735" width="4" height="4" fill="#760c16" />
<rect x="658" y="671" width="4" height="4" fill="#760c16" />
<rect x="661" y="744" width="4" height="4" fill="#760c16" />
<rect x="657" y="725" width="4" height="4" fill="#760c16" />
<rect x="657" y="741" width="4" height="4" fill="#760c16" />
<rect x="657" y="693" width="4" height="4" fill="#760c16" />
<rect x="657" y="687" width="4" height="4" fill="#760c16" />
<rect x="652" y="718" width="4" height="4" fill="#760c16" />
<rect x="661" y="738" width="4" height="4" fill="#760c16" />
<rect x="654" y="716" width="4" height="4" fill="#760c16" />
<rect x="658" y="724" width="4" height="4" fill="#760c16" />
<rect x="657" y="716" width="4" height="4" fill="#760c16" />
<rect x="659" y="754" width="4" height="4" fill="#760c16" />
<rect x="657" y="744" width="4" height="4" fill="#760c16" />
<rect x="659" y="677" width="4" height="4" fill="#760c16" />
<rect x="655" y="697" width="4" height="4" fill="#760c16" />
<rect x="656" y="715" width="4" height="4" fill="#760c16" />
<rect x="655" y="766" width="4" height="4" fill="#760c16" />
<rect x="659" y="702" width="4" height="4" fill="#760c16" />
<rect x="659" y="758" width="4" height="4" fill="#760c16" />
<rect x="654" y="729" width="4" height="4" fill="#760c16" />
<rect x="662" y="703" width="4" height="4" fill="#760c16" />
<rect x="661" y="746" width="4" height="4" fill="#760c16" />
<rect x="655" y="680" width="4" height="4" fill="#760c16" />
<rect x="660" y="707" width="4" height="4" fill="#760c16" />
<rect x="656" y="712" width="4" height="4" fill="#760c16" />
<rect x="659" y="755" width="4" height="4" fill="#760c16" />
<rect x="661" y="742" width="4" height="4" fill="#760c16" />
<rect x="654" y="702" width="4" height="4" fill="#760c16" />
<rect x="652" y="685" width="4" height="4" fill="#760c16" />
<rect x="655" y="683" width="4" height="4" fill="#760c16" />
<rect x="657" y="678" width="4" height="4" fill="#760c16" />
<polygon points="695.0,686.0 707.0,686.0 710.0,734.0 710.0,766.0 695.0,766.0" fill="#151a2a" />
<rect x="684" y="722" width="5" height="5" fill="#8a20b0" />
<rect x="690" y="730" width="5" height="5" fill="#8a20b0" />
<rect x="696" y="738" width="5" height="5" fill="#8a20b0" />
<rect x="688" y="745" width="5" height="5" fill="#8a20b0" />
<rect x="700" y="750" width="5" height="5" fill="#8a20b0" />
<rect x="694" y="756" width="5" height="5" fill="#8a20b0" />
<rect x="704" y="728" width="5" height="5" fill="#8a20b0" />
<rect x="706" y="700" width="5" height="5" fill="#8a20b0" />
<rect x="707" y="676" width="5" height="5" fill="#8a20b0" />
<rect x="712" y="652" width="5" height="5" fill="#8a20b0" />
<rect x="720" y="640" width="5" height="5" fill="#8a20b0" />
<rect x="733" y="632" width="5" height="5" fill="#8a20b0" />
<rect x="420" y="637" width="5" height="5" fill="#8a20b0" />
<rect x="478" y="633" width="5" height="5" fill="#8a20b0" />
<rect x="560" y="629" width="5" height="5" fill="#8a20b0" />
<rect x="606" y="628" width="5" height="5" fill="#8a20b0" />
<rect x="600" y="636" width="5" height="5" fill="#8a20b0" />
<rect x="448" y="640" width="5" height="5" fill="#8a20b0" />
<polygon points="431.0,644.0 457.0,643.0 460.0,650.0 432.0,652.0" fill="#e03030" opacity=".8"/>
<polygon points="488.0,766.0 493.0,753.0 517.0,748.0 553.0,741.0 576.0,748.0 595.0,758.0 605.0,766.0" fill="#d84040" stroke="#d84040" stroke-width="3" stroke-linejoin="round"/>
<rect x="505" y="755" width="12" height="11" fill="#6a90b0" opacity=".75"/>
<rect x="607" y="756" width="12" height="10" fill="#6a90b0" opacity=".75"/>
<rect x="384" y="640" width="47" height="3" fill="#d8c4c4" opacity=".6"/>
<rect x="331" y="558" width="8" height="6" fill="#c8d2da" opacity=".75"/>
<rect x="342" y="562" width="10" height="8" fill="#c8d2da" opacity=".75"/>
<rect x="356" y="566" width="8" height="6" fill="#c8d2da" opacity=".75"/>
<rect x="366" y="560" width="6" height="6" fill="#c8d2da" opacity=".75"/>
<rect x="374" y="570" width="8" height="6" fill="#c8d2da" opacity=".75"/>
<rect x="348" y="574" width="6" height="5" fill="#c8d2da" opacity=".75"/>
<rect x="326" y="568" width="5" height="5" fill="#c8d2da" opacity=".75"/>
<rect x="378" y="556" width="5" height="5" fill="#c8d2da" opacity=".75"/>
<path d="M724 766 L726 740 Q732 718 780 712 Q850 706 878 716 L880 766 Z" fill="#e05252" />
<polygon points="770.0,725.0 800.0,720.0 840.0,722.0 845.0,766.0 770.0,766.0" fill="#d43c3c" opacity=".6"/>
<rect x="742" y="664" width="6" height="5" fill="#6e6ca0" opacity=".85"/>
<rect x="746" y="670" width="6" height="5" fill="#6e6ca0" opacity=".85"/>
<rect x="750" y="676" width="6" height="5" fill="#6e6ca0" opacity=".85"/>
<rect x="754" y="682" width="6" height="5" fill="#6e6ca0" opacity=".85"/>
<rect x="758" y="686" width="6" height="5" fill="#6e6ca0" opacity=".85"/>
<rect x="764" y="688" width="6" height="5" fill="#6e6ca0" opacity=".85"/>
<rect x="768" y="684" width="6" height="5" fill="#6e6ca0" opacity=".85"/>
<rect x="744" y="686" width="6" height="5" fill="#6e6ca0" opacity=".85"/>
<rect x="738" y="690" width="6" height="5" fill="#6e6ca0" opacity=".85"/>
<rect x="752" y="694" width="6" height="5" fill="#6e6ca0" opacity=".85"/>
<rect x="758" y="700" width="6" height="5" fill="#6e6ca0" opacity=".85"/>
<rect x="764" y="700" width="6" height="5" fill="#6e6ca0" opacity=".85"/>
<rect x="770" y="692" width="6" height="5" fill="#6e6ca0" opacity=".85"/>
<rect x="734" y="680" width="6" height="5" fill="#6e6ca0" opacity=".85"/>
<rect x="738" y="674" width="6" height="5" fill="#6e6ca0" opacity=".85"/>
<rect x="772" y="670" width="6" height="5" fill="#6e6ca0" opacity=".85"/>
<rect x="778" y="666" width="6" height="5" fill="#6e6ca0" opacity=".85"/>
<rect x="776" y="700" width="6" height="5" fill="#6e6ca0" opacity=".85"/>
<rect x="790" y="684" width="4" height="4" fill="#6e6ca0" opacity=".8"/>
<rect x="812" y="668" width="4" height="4" fill="#6e6ca0" opacity=".8"/>
<rect x="830" y="676" width="4" height="4" fill="#6e6ca0" opacity=".8"/>
<rect x="862" y="690" width="4" height="4" fill="#6e6ca0" opacity=".8"/>
<rect x="846" y="704" width="4" height="4" fill="#6e6ca0" opacity=".8"/>
<rect x="900" y="700" width="4" height="4" fill="#6e6ca0" opacity=".8"/>
<rect x="940" y="712" width="4" height="4" fill="#6e6ca0" opacity=".8"/>
<polygon points="1020.0,712.0 1160.0,712.0 1160.0,780.0 1020.0,780.0" fill="#8e929a" filter="url(#soft)" opacity=".75"/>
<polygon points="1165.0,712.0 1238.0,712.0 1238.0,780.0 1165.0,780.0" fill="#bcbcbc" filter="url(#soft)" opacity=".6"/>
<rect x="1105" y="764" width="4" height="6" fill="#15161c" opacity=".85"/>
<rect x="1111" y="762" width="6" height="6" fill="#15161c" opacity=".85"/>
<rect x="1117" y="761" width="6" height="6" fill="#15161c" opacity=".85"/>
<rect x="1123" y="763" width="4" height="6" fill="#15161c" opacity=".85"/>
<rect x="1129" y="762" width="8" height="6" fill="#15161c" opacity=".85"/>
<rect x="1135" y="763" width="6" height="6" fill="#15161c" opacity=".85"/>
<rect x="1141" y="762" width="8" height="6" fill="#15161c" opacity=".85"/>
<rect x="1147" y="764" width="4" height="6" fill="#15161c" opacity=".85"/>
<rect x="1153" y="761" width="8" height="6" fill="#15161c" opacity=".85"/>
<rect x="1159" y="761" width="8" height="6" fill="#15161c" opacity=".85"/>
<rect x="1165" y="762" width="4" height="6" fill="#15161c" opacity=".85"/>
<rect x="1171" y="761" width="6" height="6" fill="#15161c" opacity=".85"/>
<rect x="1177" y="764" width="8" height="6" fill="#15161c" opacity=".85"/>
<rect x="1183" y="762" width="8" height="6" fill="#15161c" opacity=".85"/>
<rect x="1189" y="761" width="4" height="6" fill="#15161c" opacity=".85"/>
<rect x="1195" y="762" width="4" height="6" fill="#15161c" opacity=".85"/>
<rect x="1201" y="762" width="4" height="6" fill="#15161c" opacity=".85"/>
<rect x="1207" y="761" width="4" height="6" fill="#15161c" opacity=".85"/>
<rect x="1213" y="761" width="4" height="6" fill="#15161c" opacity=".85"/>
<rect x="1219" y="762" width="4" height="6" fill="#15161c" opacity=".85"/>
<rect x="1225" y="761" width="4" height="6" fill="#15161c" opacity=".85"/>
<rect x="1231" y="763" width="4" height="6" fill="#15161c" opacity=".85"/>
<rect x="1237" y="761" width="4" height="6" fill="#15161c" opacity=".85"/>
<rect x="1228" y="758" width="10" height="8" fill="#c89a9a" opacity=".7"/>
<rect x="352" y="546" width="5" height="5" fill="#8a0ca8" />
<rect x="350" y="551" width="5" height="5" fill="#8a0ca8" />
<rect x="350" y="590" width="6" height="6" fill="#8a0ca8" />
<rect x="354" y="595" width="5" height="5" fill="#8a0ca8" />
<rect x="352" y="608" width="4" height="4" fill="#8a0ca8" />
<rect x="354" y="624" width="5" height="5" fill="#8a0ca8" />
<rect x="352" y="641" width="5" height="5" fill="#8a0ca8" />
<rect x="356" y="654" width="5" height="6" fill="#8a0ca8" />
<rect x="425" y="523" width="5" height="5" fill="#8a0ca8" />
<rect x="427" y="531" width="5" height="5" fill="#8a0ca8" />
<rect x="430" y="542" width="5" height="7" fill="#8a0ca8" />
<rect x="432" y="552" width="4" height="4" fill="#8a0ca8" />
<rect x="438" y="586" width="6" height="5" fill="#8a0ca8" />
<rect x="440" y="594" width="4" height="5" fill="#8a0ca8" />
<rect x="446" y="624" width="4" height="4" fill="#8a0ca8" />
<rect x="440" y="560" width="3" height="3" fill="#8a0ca8" />
<rect x="311" y="706" width="5" height="5" fill="#8a0ca8" />
<rect x="313" y="727" width="5" height="5" fill="#8a0ca8" />
<rect x="315" y="733" width="5" height="5" fill="#8a0ca8" />
<rect x="316" y="745" width="4" height="6" fill="#8a0ca8" />
<rect x="1371" y="50" width="6" height="7" fill="#8a0ca8" />
<rect x="1414" y="30" width="7" height="8" fill="#8a0ca8" />
<rect x="1419" y="40" width="8" height="6" fill="#8a0ca8" />
<rect x="1412" y="56" width="6" height="6" fill="#8a0ca8" />
<rect x="1410" y="84" width="16" height="8" fill="#8a0ca8" />
<rect x="1422" y="90" width="6" height="8" fill="#8a0ca8" />
<rect x="1426" y="74" width="4" height="6" fill="#8a0ca8" />
<rect x="1383" y="130" width="6" height="7" fill="#8a0ca8" />
<rect x="1420" y="135" width="6" height="6" fill="#8a0ca8" />
<rect x="1383" y="164" width="5" height="6" fill="#8a0ca8" />
<rect x="1352" y="186" width="5" height="5" fill="#8a0ca8" />
<rect x="1351" y="190" width="4" height="4" fill="#8a0ca8" />
<rect x="1371" y="212" width="7" height="14" fill="#8a0ca8" />
<rect x="1365" y="229" width="5" height="5" fill="#8a0ca8" />
<rect x="1418" y="208" width="9" height="16" fill="#8a0ca8" />
<rect x="1420" y="222" width="8" height="22" fill="#8a0ca8" />
<rect x="1422" y="246" width="5" height="5" fill="#8a0ca8" />
<rect x="1421" y="268" width="5" height="5" fill="#8a0ca8" />
<rect x="1421" y="280" width="7" height="14" fill="#8a0ca8" />
<rect x="1420" y="306" width="5" height="5" fill="#8a0ca8" />
<rect x="1424" y="317" width="5" height="5" fill="#8a0ca8" />
<rect x="1351" y="339" width="5" height="5" fill="#8a0ca8" />
<rect x="1389" y="354" width="8" height="14" fill="#8a0ca8" />
<rect x="1378" y="368" width="8" height="14" fill="#8a0ca8" />
<rect x="1354" y="374" width="5" height="5" fill="#8a0ca8" />
<rect x="1384" y="393" width="5" height="5" fill="#8a0ca8" />
<rect x="1424" y="391" width="5" height="5" fill="#8a0ca8" />
<rect x="1381" y="400" width="5" height="5" fill="#8a0ca8" />
<rect x="1382" y="459" width="5" height="5" fill="#8a0ca8" />
<rect x="1372" y="460" width="3" height="3" fill="#8a0ca8" />
<rect x="1386" y="497" width="5" height="5" fill="#8a0ca8" />
<rect x="1376" y="541" width="5" height="5" fill="#8a0ca8" />
<rect x="1390" y="548" width="8" height="6" fill="#8a0ca8" />
<rect x="1393" y="553" width="5" height="9" fill="#8a0ca8" />
<rect x="1398" y="592" width="5" height="5" fill="#8a0ca8" />
<rect x="1384" y="603" width="5" height="5" fill="#8a0ca8" />
<rect x="1352" y="622" width="6" height="12" fill="#8a0ca8" />
<rect x="1367" y="632" width="5" height="5" fill="#8a0ca8" />
<rect x="1396" y="630" width="5" height="5" fill="#8a0ca8" />
<rect x="1396" y="645" width="5" height="5" fill="#8a0ca8" />
<rect x="1388" y="671" width="10" height="6" fill="#8a0ca8" />
<rect x="1398" y="689" width="5" height="5" fill="#8a0ca8" />
<rect x="1362" y="704" width="5" height="5" fill="#8a0ca8" />
<rect x="1386" y="732" width="5" height="5" fill="#8a0ca8" />
<rect x="1360" y="742" width="5" height="5" fill="#8a0ca8" />
<rect x="1355" y="739" width="5" height="5" fill="#8a0ca8" />
<rect x="1362" y="747" width="5" height="5" fill="#8a0ca8" />
<rect x="1357" y="779" width="5" height="5" fill="#8a0ca8" />
<rect x="1362" y="744" width="5" height="5" fill="#8a0ca8" />
<rect x="1357" y="746" width="5" height="5" fill="#8a0ca8" />
<rect x="1360" y="708" width="5" height="5" fill="#8a0ca8" />
<rect x="1350" y="764" width="5" height="5" fill="#8a0ca8" />
<rect x="1368" y="726" width="5" height="5" fill="#8a0ca8" />
<rect x="1366" y="753" width="5" height="5" fill="#8a0ca8" />
<rect x="1364" y="728" width="5" height="5" fill="#8a0ca8" />
<rect x="1361" y="739" width="5" height="5" fill="#8a0ca8" />
<rect x="1338" y="740" width="5" height="5" fill="#8a0ca8" />
<rect x="1370" y="750" width="5" height="5" fill="#8a0ca8" />
<rect x="1352" y="750" width="5" height="5" fill="#8a0ca8" />
<rect x="1356" y="751" width="5" height="5" fill="#8a0ca8" />
<rect x="1366" y="730" width="5" height="5" fill="#8a0ca8" />
<rect x="1366" y="743" width="5" height="5" fill="#8a0ca8" />
<rect x="1361" y="731" width="5" height="5" fill="#8a0ca8" />
<rect x="1367" y="764" width="5" height="5" fill="#8a0ca8" />
<rect x="1367" y="774" width="5" height="5" fill="#8a0ca8" />
<rect x="1364" y="738" width="5" height="5" fill="#8a0ca8" />
<rect x="1359" y="738" width="5" height="5" fill="#8a0ca8" />
<rect x="1357" y="747" width="5" height="5" fill="#8a0ca8" />
<rect x="1363" y="755" width="5" height="5" fill="#8a0ca8" />
<rect x="1372" y="738" width="5" height="5" fill="#8a0ca8" />
<rect x="1377" y="736" width="5" height="5" fill="#8a0ca8" />
<rect x="1357" y="748" width="5" height="5" fill="#8a0ca8" />
<rect x="1364" y="745" width="5" height="5" fill="#8a0ca8" />
<rect x="1371" y="774" width="5" height="5" fill="#8a0ca8" />
<rect x="1360" y="756" width="5" height="5" fill="#8a0ca8" />
<rect x="1348" y="742" width="5" height="5" fill="#8a0ca8" />
<rect x="1346" y="732" width="5" height="5" fill="#8a0ca8" />
<rect x="1371" y="763" width="5" height="5" fill="#8a0ca8" />
<rect x="1379" y="774" width="5" height="5" fill="#8a0ca8" />
<rect x="1360" y="774" width="5" height="5" fill="#8a0ca8" />
<rect x="1364" y="728" width="5" height="5" fill="#8a0ca8" />
<rect x="1358" y="762" width="5" height="5" fill="#8a0ca8" />
<rect x="1371" y="745" width="5" height="5" fill="#8a0ca8" />
<rect x="1352" y="778" width="5" height="5" fill="#8a0ca8" />
<rect x="1358" y="772" width="5" height="5" fill="#8a0ca8" />
<rect x="1380" y="762" width="5" height="5" fill="#8a0ca8" />
<rect x="1374" y="736" width="5" height="5" fill="#8a0ca8" />
<rect x="1375" y="736" width="5" height="5" fill="#8a0ca8" />
<rect x="1362" y="729" width="5" height="5" fill="#8a0ca8" />
<rect x="1342" y="743" width="5" height="5" fill="#8a0ca8" />
<rect x="1372" y="775" width="5" height="5" fill="#8a0ca8" />
<rect x="1368" y="759" width="5" height="5" fill="#8a0ca8" />
<rect x="1369" y="747" width="5" height="5" fill="#8a0ca8" />
<rect x="1349" y="765" width="5" height="5" fill="#8a0ca8" />
<rect x="1363" y="742" width="5" height="5" fill="#8a0ca8" />
<rect x="1367" y="751" width="5" height="5" fill="#8a0ca8" />
<rect x="1368" y="744" width="5" height="5" fill="#8a0ca8" />
<rect x="1376" y="747" width="5" height="5" fill="#8a0ca8" />
<rect x="1358" y="758" width="5" height="5" fill="#8a0ca8" />
<rect x="1355" y="747" width="5" height="5" fill="#8a0ca8" />
<rect x="1363" y="752" width="5" height="5" fill="#8a0ca8" />
<rect x="1347" y="737" width="5" height="5" fill="#8a0ca8" />
<rect x="1368" y="722" width="5" height="5" fill="#8a0ca8" />
<rect x="1358" y="744" width="5" height="5" fill="#8a0ca8" />
<rect x="1350" y="738" width="5" height="5" fill="#8a0ca8" />
<rect x="1373" y="751" width="5" height="5" fill="#8a0ca8" />
<rect x="1363" y="766" width="5" height="5" fill="#8a0ca8" />
<rect x="1370" y="743" width="5" height="5" fill="#8a0ca8" />
<rect x="1374" y="751" width="5" height="5" fill="#8a0ca8" />
<rect x="1360" y="736" width="5" height="5" fill="#8a0ca8" />
<rect x="1358" y="746" width="5" height="5" fill="#8a0ca8" />
<rect x="1346" y="765" width="5" height="5" fill="#8a0ca8" />
<rect x="1366" y="753" width="5" height="5" fill="#8a0ca8" />
<rect x="1368" y="730" width="5" height="5" fill="#8a0ca8" />
<rect x="1360" y="763" width="5" height="5" fill="#8a0ca8" />
<rect x="1366" y="748" width="5" height="5" fill="#8a0ca8" />
<rect x="1361" y="737" width="5" height="5" fill="#8a0ca8" />
<rect x="1364" y="767" width="5" height="5" fill="#8a0ca8" />
<rect x="1371" y="745" width="5" height="5" fill="#8a0ca8" />
<rect x="1367" y="745" width="5" height="5" fill="#8a0ca8" />
<rect x="1370" y="756" width="5" height="5" fill="#8a0ca8" />
<rect x="1376" y="756" width="5" height="5" fill="#8a0ca8" />
<rect x="1363" y="745" width="5" height="5" fill="#8a0ca8" />
<rect x="1368" y="768" width="5" height="5" fill="#8a0ca8" />
<rect x="1358" y="760" width="5" height="5" fill="#8a0ca8" />
<rect x="1364" y="748" width="5" height="5" fill="#8a0ca8" />
<rect x="1351" y="759" width="5" height="5" fill="#8a0ca8" />
<rect x="1358" y="757" width="5" height="5" fill="#8a0ca8" />
<rect x="1366" y="760" width="5" height="5" fill="#8a0ca8" />
<rect x="1363" y="716" width="5" height="5" fill="#8a0ca8" />
<rect x="1356" y="740" width="5" height="5" fill="#8a0ca8" />
<rect x="1345" y="737" width="5" height="5" fill="#8a0ca8" />
<rect x="1373" y="740" width="5" height="5" fill="#8a0ca8" />
<rect x="1350" y="743" width="5" height="5" fill="#8a0ca8" />
<rect x="1357" y="721" width="5" height="5" fill="#8a0ca8" />
<rect x="1381" y="732" width="5" height="5" fill="#8a0ca8" />
<rect x="1361" y="748" width="5" height="5" fill="#8a0ca8" />
<rect x="1368" y="742" width="5" height="5" fill="#8a0ca8" />
<rect x="1369" y="736" width="5" height="5" fill="#8a0ca8" />
<rect x="1370" y="744" width="5" height="5" fill="#8a0ca8" />
<rect x="1361" y="740" width="5" height="5" fill="#8a0ca8" />
<rect x="1371" y="735" width="5" height="5" fill="#8a0ca8" />
<rect x="1350" y="757" width="5" height="5" fill="#8a0ca8" />
<rect x="1375" y="771" width="5" height="5" fill="#8a0ca8" />
<rect x="1345" y="777" width="5" height="5" fill="#8a0ca8" />
<rect x="1364" y="735" width="5" height="5" fill="#8a0ca8" />
<rect x="1362" y="733" width="5" height="5" fill="#8a0ca8" />
<rect x="1360" y="751" width="5" height="5" fill="#8a0ca8" />
<rect x="1365" y="767" width="5" height="5" fill="#8a0ca8" />
<rect x="1360" y="742" width="5" height="5" fill="#8a0ca8" />
<rect x="1357" y="719" width="5" height="5" fill="#8a0ca8" />
<rect x="1349" y="769" width="5" height="5" fill="#8a0ca8" />
<rect x="1361" y="768" width="5" height="5" fill="#8a0ca8" />
<rect x="1363" y="761" width="5" height="5" fill="#8a0ca8" />
<rect x="1366" y="730" width="5" height="5" fill="#8a0ca8" />
<rect x="1364" y="741" width="5" height="5" fill="#8a0ca8" />
<rect x="1363" y="735" width="5" height="5" fill="#8a0ca8" />
<rect x="1358" y="733" width="5" height="5" fill="#8a0ca8" />
<rect x="1355" y="749" width="5" height="5" fill="#8a0ca8" />
<rect x="1374" y="732" width="5" height="5" fill="#8a0ca8" />
<rect x="1365" y="758" width="5" height="5" fill="#8a0ca8" />
<rect x="1358" y="761" width="5" height="5" fill="#8a0ca8" />
<rect x="1344" y="762" width="5" height="5" fill="#8a0ca8" />
<rect x="1360" y="741" width="5" height="5" fill="#8a0ca8" />
<rect x="1352" y="733" width="5" height="5" fill="#8a0ca8" />
<rect x="1362" y="729" width="5" height="5" fill="#8a0ca8" />
<rect x="1377" y="758" width="5" height="5" fill="#8a0ca8" />
<rect x="1353" y="764" width="5" height="5" fill="#8a0ca8" />
<rect x="1343" y="725" width="5" height="5" fill="#8a0ca8" />
<rect x="1354" y="753" width="5" height="5" fill="#8a0ca8" />
<rect x="1357" y="755" width="5" height="5" fill="#8a0ca8" />
<rect x="1367" y="723" width="5" height="5" fill="#8a0ca8" />
<rect x="1356" y="767" width="5" height="5" fill="#8a0ca8" />
<rect x="1347" y="786" width="5" height="5" fill="#8a0ca8" />
<rect x="1376" y="760" width="5" height="5" fill="#8a0ca8" />
<rect x="1359" y="757" width="5" height="5" fill="#8a0ca8" />
<rect x="1345" y="737" width="5" height="5" fill="#8a0ca8" />
<rect x="1362" y="775" width="5" height="5" fill="#8a0ca8" />
<rect x="1363" y="732" width="5" height="5" fill="#8a0ca8" />
<rect x="1367" y="763" width="5" height="5" fill="#8a0ca8" />
<rect x="1343" y="762" width="5" height="5" fill="#8a0ca8" />
<rect x="1358" y="745" width="5" height="5" fill="#8a0ca8" />
<rect x="1374" y="766" width="5" height="5" fill="#8a0ca8" />
<rect x="1368" y="749" width="5" height="5" fill="#8a0ca8" />
<rect x="1346" y="755" width="5" height="5" fill="#8a0ca8" />
<rect x="1371" y="746" width="5" height="5" fill="#8a0ca8" />
<rect x="1336" y="756" width="5" height="5" fill="#8a0ca8" />
<rect x="1366" y="740" width="5" height="5" fill="#8a0ca8" />
<rect x="1363" y="748" width="5" height="5" fill="#8a0ca8" />
<rect x="1366" y="743" width="5" height="5" fill="#8a0ca8" />
<rect x="1357" y="742" width="5" height="5" fill="#8a0ca8" />
<rect x="1366" y="749" width="5" height="5" fill="#8a0ca8" />
<rect x="1362" y="758" width="5" height="5" fill="#8a0ca8" />
<rect x="1374" y="741" width="5" height="5" fill="#8a0ca8" />
<rect x="1357" y="758" width="5" height="5" fill="#8a0ca8" />
<rect x="1355" y="764" width="5" height="5" fill="#8a0ca8" />
<rect x="1361" y="743" width="5" height="5" fill="#8a0ca8" />
<rect x="1359" y="731" width="5" height="5" fill="#8a0ca8" />
<rect x="1362" y="753" width="5" height="5" fill="#8a0ca8" />
<rect x="1358" y="755" width="5" height="5" fill="#8a0ca8" />
<rect x="1354" y="743" width="5" height="5" fill="#8a0ca8" />
<rect x="1361" y="748" width="5" height="5" fill="#8a0ca8" />
<rect x="1371" y="759" width="5" height="5" fill="#8a0ca8" />
<rect x="1356" y="760" width="5" height="5" fill="#8a0ca8" />
<rect x="1353" y="726" width="5" height="5" fill="#8a0ca8" />
<rect x="1354" y="744" width="5" height="5" fill="#8a0ca8" />
<rect x="1360" y="737" width="5" height="5" fill="#8a0ca8" />
<rect x="1360" y="753" width="5" height="5" fill="#8a0ca8" />
<rect x="1348" y="765" width="5" height="5" fill="#8a0ca8" />
<rect x="1358" y="739" width="5" height="5" fill="#8a0ca8" />
<rect x="1366" y="759" width="5" height="5" fill="#8a0ca8" />
<rect x="1369" y="762" width="5" height="5" fill="#8a0ca8" />
<rect x="1378" y="757" width="5" height="5" fill="#8a0ca8" />
<rect x="1352" y="729" width="5" height="5" fill="#8a0ca8" />
<rect x="1374" y="743" width="5" height="5" fill="#8a0ca8" />
<rect x="1353" y="730" width="5" height="5" fill="#8a0ca8" />
<rect x="1370" y="763" width="5" height="5" fill="#8a0ca8" />
<rect x="1377" y="763" width="5" height="5" fill="#8a0ca8" />
<rect x="1339" y="736" width="5" height="5" fill="#8a0ca8" />
<!--/MAP-->
</svg>
</div>
<div id="rstrip" class="abs"></div>


<!-- gear -->
<div class="abs" style="left:1376px;top:38px;width:45px;height:43px;border-radius:6px;background:rgba(95,95,95,.6)"></div>
<div class="abs" style="left:1381px;top:43px;width:32px;height:32px;border-radius:4px;background:#e6e6e6"></div>
<svg class="abs" style="left:1391px;top:53px" width="13" height="13" viewBox="0 0 17 17">
  <path d="M7.2 1.5h2.6l.4 2 1.3.6 1.7-1.1 1.8 1.8-1.1 1.7.6 1.3 2 .4v2.6l-2 .4-.6 1.3 1.1 1.7-1.8 1.8-1.7-1.1-1.3.6-.4 2H7.2l-.4-2-1.3-.6-1.7 1.1-1.8-1.8 1.1-1.7-.6-1.3-2-.4V7.2l2-.4.6-1.3-1.1-1.7 1.8-1.8 1.7 1.1 1.3-.6z" fill="none" stroke="#333" stroke-width="1.3" stroke-linejoin="round"/>
  <circle cx="8.5" cy="8.5" r="2.4" fill="none" stroke="#333" stroke-width="1.3"/>
</svg>
<!-- vertical view group -->
<div class="abs" style="left:1377px;top:193px;width:43px;height:113px;border-radius:6px;background:rgba(95,95,95,.6)"></div>
<div class="abs" style="left:1379px;top:195.5px;width:37px;height:35.5px;border-radius:4px;background:#1a9cc4"></div>
<svg class="abs" style="left:1386px;top:203px" width="24" height="18" viewBox="0 0 24 18">
  <g fill="#bff2ff">
    <circle cx="9" cy="2.5" r="1.1"/><circle cx="15" cy="2.5" r="1.1"/>
    <circle cx="6" cy="6" r="1.1"/><circle cx="12" cy="6" r="1.1"/><circle cx="18" cy="6" r="1.1"/>
    <circle cx="3" cy="9.5" r="1.1"/><circle cx="9" cy="9.5" r="1.1"/><circle cx="15" cy="9.5" r="1.1"/><circle cx="21" cy="9.5" r="1.1"/>
    <circle cx="6" cy="13" r="1.1"/><circle cx="12" cy="13" r="1.1"/><circle cx="18" cy="13" r="1.1"/>
  </g>
</svg>
<div class="abs" style="left:1380px;top:233px;width:35px;height:32px;border-radius:4px;background:#b4b4b6"></div>
<svg class="abs" style="left:1386px;top:238px" width="24" height="24" viewBox="0 0 24 24">
  <g fill="none" stroke="#555" stroke-width="0.9">
    <path d="M8 3h8M12 3v4M10 5h4"/>
    <path d="M3 20 L7 12 L12 14 L17 12 L21 20 L17 18 L12 21 L7 18 Z"/>
    <path d="M12 14v7M7 12l5-5 5 5"/>
  </g>
</svg>
<div class="abs" style="left:1381px;top:268px;width:34px;height:32.6px;border-radius:4px;background:#e8e8e8"></div>
<svg class="abs" style="left:1386px;top:273px" width="24" height="23" viewBox="0 0 24 23">
  <path d="M2 5 L8 2 L16 5 L22 2 L22 18 L16 21 L8 18 L2 21 Z M8 2 V18 M16 5 V21" fill="none" stroke="#111" stroke-width="2" stroke-linejoin="round"/>
</svg>
<!-- layers -->
<div class="abs" style="left:1238px;top:713px;width:43px;height:44px;border-radius:6px;background:rgba(95,95,95,.35)"></div>
<div class="abs" style="left:1242px;top:717px;width:35px;height:35px;border-radius:3px;background:#1a9cc4"></div>
<svg class="abs" style="left:1250px;top:725px" width="19" height="19" viewBox="0 0 19 19">
  <path d="M9.5 2 L17 7 L9.5 12 L2 7 Z" fill="none" stroke="#fff" stroke-width="1.5" stroke-linejoin="round"/>
  <path d="M2.5 10.5 L9.5 15.5 L16.5 10.5" fill="none" stroke="#fff" stroke-width="1.5" stroke-linejoin="round"/>
</svg>
<!-- 3D -->
<div class="abs" style="left:1378px;top:713px;width:42px;height:44px;border-radius:6px;background:rgba(95,95,95,.55)"></div>
<div class="abs" style="left:1382px;top:718px;width:34px;height:34px;border-radius:4px;background:#e8e8e8"></div>
<div class="t" style="left:1388px;top:726px;font-size:20px;font-weight:bold;color:#111;letter-spacing:-1.5px">3D</div>
<!-- bottom toolbar -->
<div class="abs" style="left:770.5px;top:712px;width:183px;height:44px;border-radius:6px;background:rgba(90,90,90,.45)"></div>
<div class="abs" style="left:775px;top:718px;width:33px;height:34px;border-radius:4px;background:rgba(238,238,238,.82)"></div>
<div class="abs" style="left:810px;top:718px;width:34px;height:34px;border-radius:4px;background:#1a9cc4"></div>
<div class="abs" style="left:845px;top:718px;width:33px;height:34px;border-radius:4px;background:rgba(238,238,238,.82)"></div>
<div class="abs" style="left:880px;top:718px;width:33px;height:34px;border-radius:4px;background:rgba(238,238,238,.88)"></div>
<div class="abs" style="left:915px;top:718px;width:33px;height:34px;border-radius:4px;background:rgba(238,238,238,.9)"></div>
<svg class="abs" style="left:775px;top:718px" width="33" height="34" viewBox="0 0 33 34">
  <path d="M8.5 8.5 L23 15 L17.5 17 L22.5 23.5 L20.5 25 L15.8 18.5 L12 22.5 Z" fill="none" stroke="#555" stroke-width="1.2" stroke-linejoin="round"/>
</svg>
<svg class="abs" style="left:810px;top:718px" width="34" height="34" viewBox="0 0 34 34">
  <g fill="none" stroke="#fff" stroke-width="2">
    <path d="M10 7v7M6.5 10.5h7"/>
    <path d="M17 10.5h6.5M26 13v12.5M24 28.5H13M9.5 26v-9"/>
  </g>
  <g fill="none" stroke="#fff" stroke-width="1.6">
    <rect x="23.5" y="8.5" width="4" height="4"/><rect x="23.5" y="26" width="4" height="4"/><rect x="7.5" y="26" width="4" height="4"/>
  </g>
</svg>
<svg class="abs" style="left:845px;top:718px" width="33" height="34" viewBox="0 0 33 34">
  <g fill="none" stroke="#555" stroke-width="1.2">
    <path d="M9 10.5h15M13 10.5V8.5h7v2"/>
    <path d="M10.5 11 L11.5 27 H21.5 L22.5 11"/>
    <path d="M14 14v10M16.5 14v10M19 14v10"/>
  </g>
</svg>
<svg class="abs" style="left:880px;top:718px" width="33" height="34" viewBox="0 0 33 34">
  <path d="M10 14 A8.5 8.5 0 1 1 21 27.5" fill="none" stroke="#111" stroke-width="2.2"/>
  <path d="M5.5 15.5 L13 9.5 L13.5 17.5 Z" fill="#111"/>
</svg>
<svg class="abs" style="left:915px;top:718px" width="33" height="34" viewBox="0 0 33 34">
  <path d="M9.5 17.5 L14 22 L24 12" fill="none" stroke="#111" stroke-width="1.8"/>
</svg>

<!-- Classifications panel -->
<div class="panel" style="left:1027px;top:55px;width:324px;height:228px">
  <div class="t" style="left:6px;top:9.2px;font-size:11px;color:#9a9a9a">Classifications</div>
  <div class="t" style="left:24px;top:39px;font-size:14px;font-weight:bold;color:#1a1a1a">Name</div>
  <div class="t" style="left:188.5px;top:39px;font-size:14px;font-weight:bold;color:#1a1a1a">Color</div>
  <div class="t" style="left:250.5px;top:39px;font-size:14px;font-weight:bold;color:#1a1a1a">Visible</div>
  <div class="t" style="left:24px;top:79px;font-size:13px;color:#333">Building</div>
  <div class="t" style="left:24px;top:115.5px;font-size:13px;color:#333">Natural Terrain</div>
  <div class="t" style="left:24px;top:153px;font-size:13px;color:#333">Noise</div>
  <div class="abs" style="left:193px;top:69.5px;width:28px;height:28px;border-radius:4px;background:#e08282"></div>
  <div class="abs" style="left:193px;top:106.8px;width:28px;height:28px;border-radius:4px;background:#fff;border:1px solid #dcdcdc"></div>
  <div class="abs" style="left:193px;top:144.4px;width:28px;height:27px;border-radius:4px;background:#85058a"></div>
  <svg class="abs" style="left:263px;top:73.5px" width="20" height="20"><rect width="20" height="20" fill="#1899be"/><path d="M4.5 10.5 L8.5 14.5 L15.5 6" fill="none" stroke="#fff" stroke-width="1.4"/></svg>
  <svg class="abs" style="left:263px;top:111px" width="20" height="20"><rect width="20" height="20" fill="#1899be"/><path d="M4.5 10.5 L8.5 14.5 L15.5 6" fill="none" stroke="#fff" stroke-width="1.4"/></svg>
  <svg class="abs" style="left:263px;top:148px" width="20" height="20"><rect width="20" height="20" fill="#1899be"/><path d="M4.5 10.5 L8.5 14.5 L15.5 6" fill="none" stroke="#fff" stroke-width="1.4"/></svg>
  <div class="abs" style="left:0;top:180px;width:324px;height:48px;background:#d3d3d3"></div>
  <svg class="abs" style="left:7px;top:187px" width="34" height="34" viewBox="0 0 34 34">
    <rect width="34" height="34" rx="4" fill="#1a9bc2"/>
    <path d="M8 25.5 L20 13.5" stroke="#10202a" stroke-width="4.6" stroke-linecap="square"/>
    <path d="M9.5 24 L19 14.5" stroke="#5aaac4" stroke-width="1.3"/>
    <path d="M16.5 9.5 L24.5 17.5" stroke="#10202a" stroke-width="2.6" stroke-linecap="round"/>
    <path d="M21 13 L26 8" stroke="#10202a" stroke-width="5" stroke-linecap="round"/>
    <path d="M22.5 11.5 L25.5 8.5" stroke="#5aaac4" stroke-width="1.1"/>
  </svg>
  <svg class="abs" style="left:69px;top:187px" width="34" height="34" viewBox="0 0 34 34">
    <rect width="34" height="34" rx="4" fill="#1a9bc2"/>
    <g fill="#124a60">
      <circle cx="13" cy="9" r="1"/><circle cx="16.5" cy="8.5" r="1"/><circle cx="20" cy="9.5" r="0.9"/>
      <circle cx="9.5" cy="12" r="1"/><circle cx="13" cy="12" r="1.3"/><circle cx="17" cy="12" r="1.3"/><circle cx="21" cy="13" r="1"/>
      <circle cx="9" cy="16" r="1.1"/><circle cx="13" cy="16" r="1.3"/><circle cx="17" cy="16" r="1.3"/><circle cx="21" cy="17" r="1"/>
      <circle cx="10" cy="20" r="1"/><circle cx="14" cy="19.5" r="1.2"/><circle cx="18" cy="20" r="1"/>
      <circle cx="13" cy="23.5" r="0.8"/><circle cx="7" cy="14" r="0.6"/><circle cx="24" cy="10.5" r="0.6"/>
    </g>
    <path d="M18 27.5 L28 18" stroke="#10202a" stroke-width="4" stroke-linecap="round"/>
  </svg>
  <svg class="abs" style="left:132px;top:188px" width="33" height="33" viewBox="0 0 33 33">
    <rect width="33" height="33" rx="4" fill="#ececec"/>
    <g>
      <circle cx="16.5" cy="6" r="1.1" fill="#e0302a"/><circle cx="12" cy="8" r="1.2" fill="#222"/><circle cx="21" cy="8" r="1.2" fill="#e06020"/>
      <circle cx="8.5" cy="12" r="1.1" fill="#f0a020"/><circle cx="13.5" cy="12" r="1.7" fill="#d02020"/><circle cx="19" cy="12" r="1.7" fill="#222"/><circle cx="24.5" cy="12" r="1.1" fill="#a040c0"/>
      <circle cx="7" cy="16.5" r="1.1" fill="#222"/><circle cx="12" cy="17" r="1.7" fill="#f08030"/><circle cx="17" cy="17" r="1.7" fill="#222"/><circle cx="22" cy="17" r="1.7" fill="#30a040"/><circle cx="26.5" cy="16.5" r="1" fill="#e03030"/>
      <circle cx="9" cy="21.5" r="1.1" fill="#8040c0"/><circle cx="14" cy="22" r="1.6" fill="#222"/><circle cx="19.5" cy="22" r="1.6" fill="#e04040"/><circle cx="24.5" cy="21.5" r="1.1" fill="#222"/>
      <circle cx="12" cy="26" r="1.1" fill="#e09020"/><circle cx="17" cy="26.5" r="1.1" fill="#222"/><circle cx="22" cy="26" r="1" fill="#40a040"/>
    </g>
  </svg>
  <div class="abs" style="left:264px;top:191px;width:52px;height:27px;border-radius:4px;background:#f2f2f2;border:1px solid #d8d8d8"></div>
  <div class="t" style="left:274px;top:198px;font-size:13px;color:#333">Close</div>
</div>

<!-- Reclassify panel -->
<div class="panel" style="left:1029px;top:297.5px;width:321px;height:416.5px">
  <div class="t" style="left:6px;top:9.6px;font-size:11px;color:#9a9a9a">Reclassify Points</div>
  <div class="t" style="left:24.6px;top:39.3px;font-size:14px;font-weight:bold;color:#1a1a1a">Name</div>
  <div class="t" style="left:252.3px;top:39.3px;font-size:14px;font-weight:bold;color:#1a1a1a">Color</div>
  <div class="abs" style="left:0;top:64.5px;width:321px;height:299.5px;overflow:hidden">
    <div class="t" style="left:24.6px;top:-1.3px;font-size:13px;color:#333">Street Furniture</div>
    <div class="abs" style="left:254.5px;top:-14.0px;width:28px;height:28.6px;border-radius:4px;background:#ea1ee6"></div>
    <div class="t" style="left:24.6px;top:35.6px;font-size:13px;color:#333">Fencing</div>
    <div class="abs" style="left:254.5px;top:27.0px;width:28px;height:27px;border-radius:4px;background:#82068c"></div>
    <div class="t" style="left:24.6px;top:73.2px;font-size:13px;color:#333">Construction Material</div>
    <div class="abs" style="left:254.5px;top:63.8px;width:28px;height:28px;border-radius:4px;background:#dcf282;border:1px solid #cfe0a0"></div>
    <div class="t" style="left:24.6px;top:110.2px;font-size:13px;color:#333">Construction Vehicles</div>
    <div class="abs" style="left:254.5px;top:101.3px;width:28px;height:27px;border-radius:4px;background:#f06412"></div>
    <div class="t" style="left:24.6px;top:146.8px;font-size:13px;color:#333">Curb and Gutter</div>
    <div class="abs" style="left:254.5px;top:139.0px;width:28px;height:27px;border-radius:4px;background:#e88cf2"></div>
    <div class="t" style="left:24.6px;top:184.3px;font-size:13px;color:#333">Foundation</div>
    <div class="abs" style="left:254.5px;top:175.5px;width:28px;height:27.5px;border-radius:4px;background:#9088c8"></div>
    <div class="t" style="left:24.6px;top:221.4px;font-size:13px;color:#333">Materials Stockpile</div>
    <div class="abs" style="left:254.5px;top:212.7px;width:28px;height:27.7px;border-radius:4px;background:#b2d8e6"></div>
    <div class="t" style="left:24.6px;top:282.2px;font-size:13px;color:#333">Ground</div>
    <div class="abs" style="left:254.5px;top:273.4px;width:28px;height:28px;border-radius:4px;background:#fff;border:1px solid #d6d6d6"></div>
  </div>
  <div class="abs" style="left:0;top:373.5px;width:321px;height:43px;background:#d3d3d3"></div>
  <div class="abs" style="left:175px;top:382.5px;width:75px;height:25.5px;border-radius:4px;background:#dcdcdc;border:1px solid #d0d0d0"></div>
  <div class="t" style="left:185px;top:388px;font-size:13px;color:#a0a0a0">Reclassify</div>
  <div class="abs" style="left:262px;top:382.5px;width:51px;height:25.5px;border-radius:4px;background:#f2f2f2;border:1px solid #d8d8d8"></div>
  <div class="t" style="left:271px;top:388px;font-size:13px;color:#333">Close</div>
</div>


</body></html>
